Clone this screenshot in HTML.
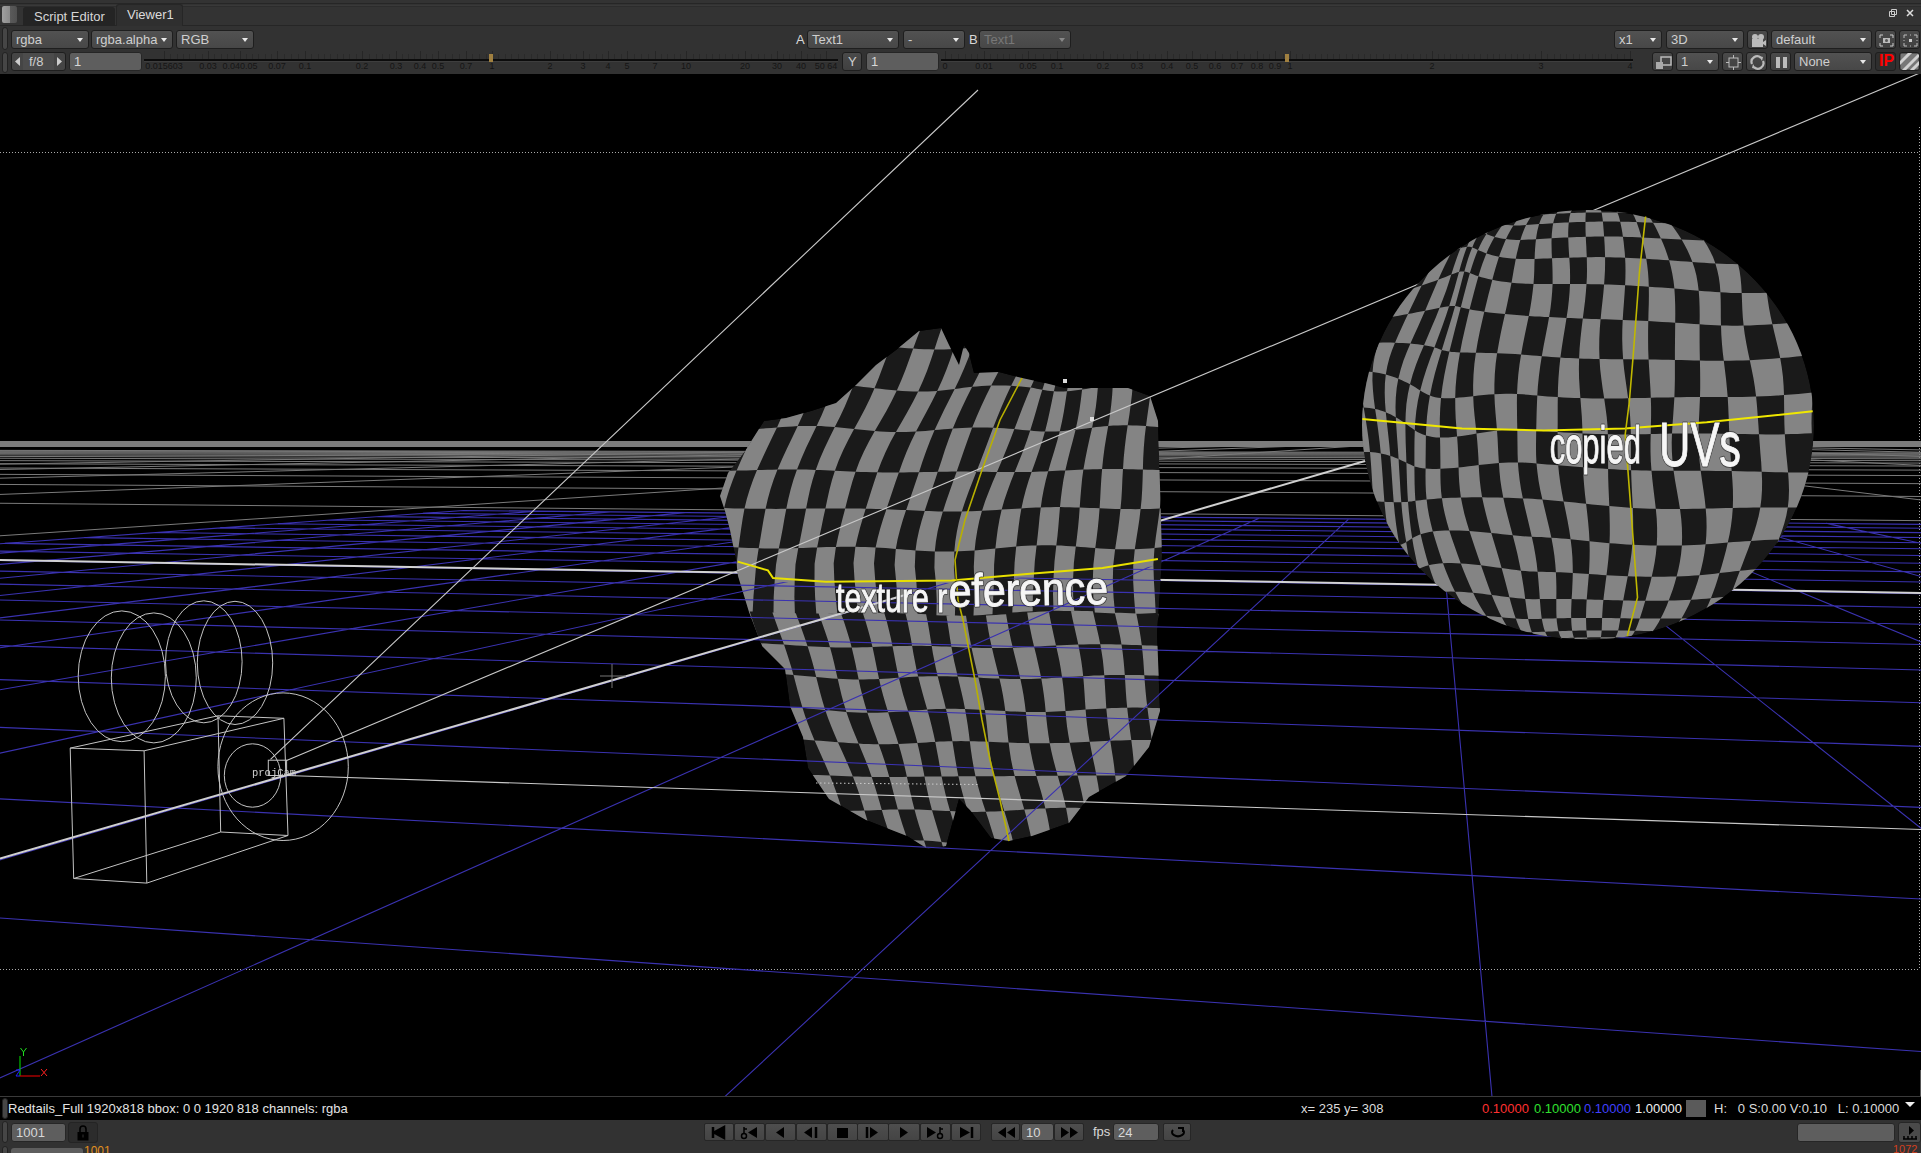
<!DOCTYPE html>
<html><head><meta charset="utf-8">
<style>
html,body{margin:0;padding:0;width:1921px;height:1153px;overflow:hidden;background:#323232;}
#root{position:relative;width:1921px;height:1153px;overflow:hidden;background:#323232;font-family:"Liberation Sans",sans-serif;}
.a{position:absolute;box-sizing:border-box;}
.t{position:absolute;left:4px;top:2px;font-size:13px;line-height:14px;white-space:nowrap;}
.ar{position:absolute;right:5px;top:7px;width:0;height:0;border-left:3px solid transparent;border-right:3px solid transparent;border-top:4px solid #e8e8e8;}
</style></head><body><div id="root">
<div class="a" style="left:0px;top:0px;width:1921px;height:26px;background:#333333;border-bottom:1px solid #262626;"></div>
<div class="a" style="left:0px;top:3px;width:1921px;height:1px;background:#262626;"></div>
<div class="a" style="left:0px;top:5px;width:1921px;height:1px;background:#393939;"></div>
<div class="a" style="left:0px;top:6px;width:1921px;height:1px;background:#2c2c2c;"></div>
<div class="a" style="left:2px;top:6px;width:15px;height:17px;background:linear-gradient(90deg,#a0a0a0 0,#8a8a8a 55%,#5a5a5a 56%,#505050 100%);border-radius:2px;"></div>
<div class="a" style="left:23px;top:7px;width:92px;height:19px;background:#242424;border-radius:3px 3px 0 0;"></div>
<div class="a" style="left:34px;top:10px;font-size:13px;color:#d6d6d6;white-space:nowrap;line-height:1;">Script Editor</div>
<div class="a" style="left:116px;top:4px;width:67px;height:22px;background:#2f2f2f;border:1px solid #262626;border-bottom:none;border-radius:3px 3px 0 0;"></div>
<div class="a" style="left:127px;top:8px;font-size:13px;color:#dcdcdc;white-space:nowrap;line-height:1;">Viewer1</div>
<svg class="a" style="left:1886px;top:6px" width="30" height="14"><path d="M5.5 3.5h5v5h-5zM3.5 5.5h5v5h-5z" fill="#2d2d2d" stroke="#ccc"/><path d="M21 4l6 6M27 4l-6 6" stroke="#ddd" stroke-width="1.5"/></svg>
<div class="a" style="left:2px;top:27px;width:6px;height:23px;background:#464646;border:1px solid #222;border-radius:3px;"></div>
<div class="a" style="left:11px;top:30px;width:78px;height:19px;background:linear-gradient(#525252,#474747);border:1px solid #1e1e1e;border-radius:3px;"><span class="t" style="color:#cfcfcf">rgba</span><i class="ar" style=""></i></div>
<div class="a" style="left:91px;top:30px;width:82px;height:19px;background:linear-gradient(#525252,#474747);border:1px solid #1e1e1e;border-radius:3px;"><span class="t" style="color:#cfcfcf">rgba.alpha</span><i class="ar" style=""></i></div>
<div class="a" style="left:176px;top:30px;width:78px;height:19px;background:linear-gradient(#525252,#474747);border:1px solid #1e1e1e;border-radius:3px;"><span class="t" style="color:#cfcfcf">RGB</span><i class="ar" style=""></i></div>
<div class="a" style="left:796px;top:33px;font-size:13px;color:#d8d8d8;white-space:nowrap;line-height:1;">A</div>
<div class="a" style="left:807px;top:30px;width:92px;height:19px;background:linear-gradient(#525252,#474747);border:1px solid #1e1e1e;border-radius:3px;"><span class="t" style="color:#cfcfcf">Text1</span><i class="ar" style=""></i></div>
<div class="a" style="left:903px;top:30px;width:62px;height:19px;background:linear-gradient(#525252,#474747);border:1px solid #1e1e1e;border-radius:3px;"><span class="t" style="color:#cfcfcf">-</span><i class="ar" style=""></i></div>
<div class="a" style="left:969px;top:33px;font-size:13px;color:#d8d8d8;white-space:nowrap;line-height:1;">B</div>
<div class="a" style="left:979px;top:30px;width:92px;height:19px;background:linear-gradient(#525252,#474747);border:1px solid #1e1e1e;border-radius:3px;"><span class="t" style="color:#777">Text1</span><i class="ar" style="border-top-color:#888"></i></div>
<div class="a" style="left:1614px;top:30px;width:48px;height:19px;background:linear-gradient(#525252,#474747);border:1px solid #1e1e1e;border-radius:3px;"><span class="t" style="color:#cfcfcf">x1</span><i class="ar" style=""></i></div>
<div class="a" style="left:1666px;top:30px;width:78px;height:19px;background:linear-gradient(#525252,#474747);border:1px solid #1e1e1e;border-radius:3px;"><span class="t" style="color:#cfcfcf">3D</span><i class="ar" style=""></i></div>
<div class="a" style="left:1747px;top:30px;width:21px;height:19px;background:linear-gradient(#4a4a4a,#404040);border:1px solid #1e1e1e;border-radius:3px;"><svg width="19" height="17" style="position:absolute;left:1px;top:1px"><circle cx="6" cy="5" r="3" fill="#bbb"/><circle cx="12" cy="5" r="3" fill="#bbb"/><rect x="3" y="7" width="11" height="8" fill="#bbb"/><path d="M14 10l3-2v6l-3-2z" fill="#bbb"/></svg></div>
<div class="a" style="left:1771px;top:30px;width:101px;height:19px;background:linear-gradient(#525252,#474747);border:1px solid #1e1e1e;border-radius:3px;"><span class="t" style="color:#cfcfcf">default</span><i class="ar" style=""></i></div>
<div class="a" style="left:1875px;top:30px;width:21px;height:19px;background:linear-gradient(#4a4a4a,#404040);border:1px solid #1e1e1e;border-radius:3px;"><svg width="19" height="17" style="position:absolute;left:1px;top:1px"><path d="M3 6V3h3M13 3h3v3M16 11v3h-3M6 14H3v-3" stroke="#ccc" fill="none"/><path d="M6 6h7v5H6z" fill="#bbb"/><circle cx="9.5" cy="8.5" r="1.5" fill="#555"/></svg></div>
<div class="a" style="left:1899px;top:30px;width:21px;height:19px;background:linear-gradient(#4a4a4a,#404040);border:1px solid #1e1e1e;border-radius:3px;"><svg width="19" height="17" style="position:absolute;left:1px;top:1px"><path d="M3 6V3h3M13 3h3v3M16 11v3h-3M6 14H3v-3M3 8v1M16 8v1M9 3h1M9 14h1" stroke="#bbb" fill="none"/><rect x="8" y="7" width="3" height="3" fill="#ccc"/></svg></div>
<div class="a" style="left:2px;top:52px;width:6px;height:21px;background:#464646;border:1px solid #222;border-radius:3px;"></div>
<div class="a" style="left:11px;top:52px;width:55px;height:19px;background:#454545;border:1px solid #1e1e1e;border-radius:3px;"></div>
<div class="a" style="left:23px;top:53px;width:31px;height:17px;background:#4c4c4c;"></div>
<svg class="a" style="left:11px;top:52px" width="55" height="19"><path d="M9 5v9l-5-4.5z" fill="#ccc"/><path d="M46 5v9l5-4.5z" fill="#ccc"/></svg>
<div class="a" style="left:29px;top:55px;font-size:13px;color:#cfcfcf;white-space:nowrap;line-height:1;">f/8</div>
<div class="a" style="left:69px;top:52px;width:73px;height:19px;background:#5e5e5e;border:1px solid #262626;border-radius:3px;"><span class="t" style="left:4px;color:#d8d8d8">1</span></div>
<div class="a" style="left:866px;top:52px;width:73px;height:19px;background:#5e5e5e;border:1px solid #262626;border-radius:3px;"><span class="t" style="left:4px;color:#d8d8d8">1</span></div>
<div class="a" style="left:842px;top:52px;width:20px;height:19px;background:linear-gradient(#4a4a4a,#404040);border:1px solid #1e1e1e;border-radius:3px;"><span class="t" style="left:5px;color:#cfcfcf">Y</span></div>
<svg class="a" style="left:144px;top:50px" width="694" height="24"><rect x="0" y="9" width="694" height="2" fill="#0c0c0c"/><path d="M26.5 4V9M33.5 4V9M39.5 4V9M45.5 4V9M51.5 4V9M58.5 4V9M70.5 4V9M77.5 4V9M83.5 4V9M90.5 4V9M102.5 4V9M108.5 4V9M114.5 4V9M121.5 4V9M127.5 4V9M140.5 4V9M147.5 4V9M154.5 4V9M167.5 4V9M174.5 4V9M180.5 4V9M186.5 4V9M193.5 4V9M199.5 4V9M205.5 4V9M212.5 4V9M225.5 4V9M232.5 4V9M238.5 4V9M245.5 4V9M258.5 4V9M264.5 4V9M270.5 4V9M282.5 4V9M288.5 4V9M301.5 4V9M308.5 4V9M315.5 4V9M328.5 4V9M335.5 4V9M342.5 4V9M354.5 4V9M361.5 4V9M367.5 4V9M374.5 4V9M380.5 4V9M387.5 4V9M393.5 4V9M400.5 4V9M413.5 4V9M419.5 4V9M426.5 4V9M432.5 4V9M445.5 4V9M452.5 4V9M458.5 4V9M470.5 4V9M477.5 4V9M490.5 4V9M497.5 4V9M504.5 4V9M517.5 4V9M523.5 4V9M530.5 4V9M536.5 4V9M549.5 4V9M555.5 4V9M562.5 4V9M568.5 4V9M575.5 4V9M581.5 4V9M588.5 4V9M594.5 4V9M607.5 4V9M614.5 4V9M620.5 4V9M627.5 4V9M639.5 4V9M645.5 4V9M651.5 4V9M663.5 4V9M670.5 4V9M676.5 4V9" stroke="#2a2a2a" stroke-width="1"/><path d="M20.5 1V9M64.5 1V9M96.5 1V9M133.5 1V9M161.5 1V9M218.5 1V9M252.5 1V9M276.5 1V9M294.5 1V9M322.5 1V9M348.5 1V9M406.5 1V9M439.5 1V9M464.5 1V9M483.5 1V9M511.5 1V9M542.5 1V9M601.5 1V9M633.5 1V9M657.5 1V9M682.5 1V9" stroke="#262626" stroke-width="1"/><rect x="0" y="11" width="694" height="1" fill="#3e3e3e"/><text x="20" y="19" font-size="9" fill="#151515" font-family="Liberation Sans" text-anchor="middle">0.015603</text><text x="64" y="19" font-size="9" fill="#151515" font-family="Liberation Sans" text-anchor="middle">0.03</text><text x="96" y="19" font-size="9" fill="#151515" font-family="Liberation Sans" text-anchor="middle">0.040.05</text><text x="133" y="19" font-size="9" fill="#151515" font-family="Liberation Sans" text-anchor="middle">0.07</text><text x="161" y="19" font-size="9" fill="#151515" font-family="Liberation Sans" text-anchor="middle">0.1</text><text x="218" y="19" font-size="9" fill="#151515" font-family="Liberation Sans" text-anchor="middle">0.2</text><text x="252" y="19" font-size="9" fill="#151515" font-family="Liberation Sans" text-anchor="middle">0.3</text><text x="276" y="19" font-size="9" fill="#151515" font-family="Liberation Sans" text-anchor="middle">0.4</text><text x="294" y="19" font-size="9" fill="#151515" font-family="Liberation Sans" text-anchor="middle">0.5</text><text x="322" y="19" font-size="9" fill="#151515" font-family="Liberation Sans" text-anchor="middle">0.7</text><text x="348" y="19" font-size="9" fill="#151515" font-family="Liberation Sans" text-anchor="middle">1</text><text x="406" y="19" font-size="9" fill="#151515" font-family="Liberation Sans" text-anchor="middle">2</text><text x="439" y="19" font-size="9" fill="#151515" font-family="Liberation Sans" text-anchor="middle">3</text><text x="464" y="19" font-size="9" fill="#151515" font-family="Liberation Sans" text-anchor="middle">4</text><text x="483" y="19" font-size="9" fill="#151515" font-family="Liberation Sans" text-anchor="middle">5</text><text x="511" y="19" font-size="9" fill="#151515" font-family="Liberation Sans" text-anchor="middle">7</text><text x="542" y="19" font-size="9" fill="#151515" font-family="Liberation Sans" text-anchor="middle">10</text><text x="601" y="19" font-size="9" fill="#151515" font-family="Liberation Sans" text-anchor="middle">20</text><text x="633" y="19" font-size="9" fill="#151515" font-family="Liberation Sans" text-anchor="middle">30</text><text x="657" y="19" font-size="9" fill="#151515" font-family="Liberation Sans" text-anchor="middle">40</text><text x="682" y="19" font-size="9" fill="#151515" font-family="Liberation Sans" text-anchor="middle">50 64</text><rect x="345" y="4" width="4" height="8" fill="#a08040"/></svg>
<svg class="a" style="left:941px;top:50px" width="692" height="24"><rect x="0" y="9" width="692" height="2" fill="#0c0c0c"/><path d="M10.5 4V9M17.5 4V9M24.5 4V9M30.5 4V9M36.5 4V9M49.5 4V9M56.5 4V9M62.5 4V9M68.5 4V9M74.5 4V9M81.5 4V9M94.5 4V9M102.5 4V9M109.5 4V9M123.5 4V9M129.5 4V9M136.5 4V9M142.5 4V9M149.5 4V9M155.5 4V9M169.5 4V9M176.5 4V9M182.5 4V9M189.5 4V9M202.5 4V9M208.5 4V9M214.5 4V9M220.5 4V9M232.5 4V9M238.5 4V9M245.5 4V9M259.5 4V9M266.5 4V9M281.5 4V9M289.5 4V9M303.5 4V9M309.5 4V9M322.5 4V9M328.5 4V9M342.5 4V9M355.5 4V9M361.5 4V9M368.5 4V9M374.5 4V9M380.5 4V9M386.5 4V9M392.5 4V9M398.5 4V9M405.5 4V9M411.5 4V9M417.5 4V9M423.5 4V9M429.5 4V9M435.5 4V9M442.5 4V9M448.5 4V9M454.5 4V9M460.5 4V9M466.5 4V9M472.5 4V9M479.5 4V9M485.5 4V9M497.5 4V9M503.5 4V9M509.5 4V9M515.5 4V9M521.5 4V9M527.5 4V9M533.5 4V9M539.5 4V9M546.5 4V9M552.5 4V9M558.5 4V9M564.5 4V9M570.5 4V9M576.5 4V9M582.5 4V9M588.5 4V9M594.5 4V9M606.5 4V9M613.5 4V9M619.5 4V9M625.5 4V9M632.5 4V9M638.5 4V9M644.5 4V9M651.5 4V9M657.5 4V9M664.5 4V9M670.5 4V9M676.5 4V9M683.5 4V9" stroke="#2a2a2a" stroke-width="1"/><path d="M4.5 1V9M43.5 1V9M87.5 1V9M116.5 1V9M162.5 1V9M196.5 1V9M226.5 1V9M251.5 1V9M274.5 1V9M296.5 1V9M316.5 1V9M334.5 1V9M349.5 1V9M491.5 1V9M600.5 1V9M689.5 1V9" stroke="#262626" stroke-width="1"/><rect x="0" y="11" width="692" height="1" fill="#3e3e3e"/><text x="4" y="19" font-size="9" fill="#151515" font-family="Liberation Sans" text-anchor="middle">0</text><text x="43" y="19" font-size="9" fill="#151515" font-family="Liberation Sans" text-anchor="middle">0.01</text><text x="87" y="19" font-size="9" fill="#151515" font-family="Liberation Sans" text-anchor="middle">0.05</text><text x="116" y="19" font-size="9" fill="#151515" font-family="Liberation Sans" text-anchor="middle">0.1</text><text x="162" y="19" font-size="9" fill="#151515" font-family="Liberation Sans" text-anchor="middle">0.2</text><text x="196" y="19" font-size="9" fill="#151515" font-family="Liberation Sans" text-anchor="middle">0.3</text><text x="226" y="19" font-size="9" fill="#151515" font-family="Liberation Sans" text-anchor="middle">0.4</text><text x="251" y="19" font-size="9" fill="#151515" font-family="Liberation Sans" text-anchor="middle">0.5</text><text x="274" y="19" font-size="9" fill="#151515" font-family="Liberation Sans" text-anchor="middle">0.6</text><text x="296" y="19" font-size="9" fill="#151515" font-family="Liberation Sans" text-anchor="middle">0.7</text><text x="316" y="19" font-size="9" fill="#151515" font-family="Liberation Sans" text-anchor="middle">0.8</text><text x="334" y="19" font-size="9" fill="#151515" font-family="Liberation Sans" text-anchor="middle">0.9</text><text x="349" y="19" font-size="9" fill="#151515" font-family="Liberation Sans" text-anchor="middle">1</text><text x="491" y="19" font-size="9" fill="#151515" font-family="Liberation Sans" text-anchor="middle">2</text><text x="600" y="19" font-size="9" fill="#151515" font-family="Liberation Sans" text-anchor="middle">3</text><text x="689" y="19" font-size="9" fill="#151515" font-family="Liberation Sans" text-anchor="middle">4</text><rect x="344" y="4" width="4" height="8" fill="#a08040"/></svg>
<div class="a" style="left:1652px;top:52px;width:21px;height:19px;background:linear-gradient(#4a4a4a,#404040);border:1px solid #1e1e1e;border-radius:3px;"><svg width="19" height="17" style="position:absolute;left:1px;top:1px"><rect x="7" y="3" width="10" height="8" fill="none" stroke="#bbb" stroke-width="1.5"/><rect x="2" y="8" width="7" height="7" fill="#aaa"/></svg></div>
<div class="a" style="left:1676px;top:52px;width:43px;height:19px;background:linear-gradient(#525252,#474747);border:1px solid #1e1e1e;border-radius:3px;"><span class="t" style="color:#cfcfcf">1</span><i class="ar" style=""></i></div>
<div class="a" style="left:1722px;top:52px;width:21px;height:19px;background:linear-gradient(#4a4a4a,#404040);border:1px solid #1e1e1e;border-radius:3px;"><svg width="19" height="17" style="position:absolute;left:1px;top:1px"><rect x="5" y="4" width="9" height="9" fill="none" stroke="#bbb"/><path d="M9.5 1v3M9.5 13v3M2 8.5h3M14 8.5h3" stroke="#bbb"/></svg></div>
<div class="a" style="left:1746px;top:52px;width:21px;height:19px;background:linear-gradient(#4a4a4a,#404040);border:1px solid #1e1e1e;border-radius:3px;"><svg width="19" height="17" style="position:absolute;left:1px;top:1px"><path d="M4 10a5.5 5.5 0 0 1 9-6M15 7a5.5 5.5 0 0 1-9 6" stroke="#bbb" stroke-width="2.2" fill="none"/><path d="M11 2l4 1-1 4zM8 15l-4-1 1-4z" fill="#bbb"/></svg></div>
<div class="a" style="left:1770px;top:52px;width:21px;height:19px;background:linear-gradient(#4a4a4a,#404040);border:1px solid #1e1e1e;border-radius:3px;"><svg width="19" height="17" style="position:absolute;left:1px;top:1px"><rect x="4" y="3" width="4" height="11" fill="#bbb"/><rect x="11" y="3" width="4" height="11" fill="#bbb"/></svg></div>
<div class="a" style="left:1794px;top:52px;width:78px;height:19px;background:linear-gradient(#525252,#474747);border:1px solid #1e1e1e;border-radius:3px;"><span class="t" style="color:#cfcfcf">None</span><i class="ar" style=""></i></div>
<div class="a" style="left:1875px;top:52px;width:21px;height:19px;background:#2e2e2e;border:1px solid #1e1e1e;border-radius:3px;"><span class="t" style="left:3px;top:1px;color:#f00;font-weight:bold;font-size:16px">IP</span></div>
<div class="a" style="left:1899px;top:52px;width:21px;height:19px;background:#555;border:1px solid #1e1e1e;border-radius:3px;"><svg width="19" height="17" style="position:absolute;left:0px;top:0px"><rect x="1" y="1" width="17" height="15" fill="#777"/><path d="M-2 12l13-13M3 18l16-16M10 19l10-10" stroke="#d0d0d0" stroke-width="3"/></svg></div>
<svg width="1921" height="1153" viewBox="0 0 1921 1153" style="position:absolute;left:0;top:0">
<defs><clipPath id="lowrect"><path d="M700 575L770 575L775 582L950 583L1170 565V900H700Z"/></clipPath><clipPath id="vp"><rect x="0" y="74" width="1921" height="1022"/></clipPath></defs>
<g clip-path="url(#vp)">
<rect x="0" y="74" width="1921" height="1022" fill="#000"/>
<path d="M0 152.5H1919M0 969.5H1919M1919.5 127V970" stroke="#aaa" stroke-width="1" stroke-dasharray="1 2" fill="none"/>
<path d="M1971 521.1L-50 502.8M1971 496.8L-50 484.1M1971 483.9L-50 474.1M1971 475.8L-50 467.8M1971 470.3L-50 463.6M1971 466.2L-50 460.5M1971 463.2L-50 458.1M1971 460.8L-50 456.3M1971 458.9L-50 454.8M1971 457.3L-50 453.6M1971 456L-50 452.6M1971 454.9L-50 451.7M1971 453.9L-50 450.9M1971 453L-50 450.3M-50 539.1L1428.6 441.3M-50 496.3L1425.3 441.3M-50 479.5L1421.9 441.3M-50 470.5L1418.5 441.3M-50 464.9L1415.2 441.3M1971 506L1435.4 441.3M1971 467.9L1438.8 441.3M1971 458L1442.1 441.3M1971 453.4L1445.5 441.3M1971 450.8L1448.9 441.3" stroke="#7a7a7a" stroke-width="1" fill="none"/>
<rect x="0" y="441" width="1921" height="6" fill="#7c7c7c"/>
<path d="M1971 1055L-50 914.6M1971 901.6L-50 796.3M1971 809.5L-50 725.3M1971 748.1L-50 677.9M1971 704.2L-50 644.1M1971 671.3L-50 618.7M1971 645.7L-50 598.9M1971 625.3L-50 583.1M1971 608.5L-50 570.2M1971 594.6L-50 559.5M1971 582.8L-50 550.3M1971 572.6L4.9 543.4M1971 563.9L84.6 537.6M1971 556.2L155.9 532.5M1971 549.4L220 527.9M1971 543.4L278.1 523.8M1971 538L330.8 520M1971 533.1L378.9 516.6M1971 528.8L423 513.4M1971 524.8L463.5 510.5M1971 531.6L1928.3 524.4M1971 553.8L1826.1 523.4M1971 590.4L1726.3 522.4M1971 662.4L1628.7 521.5M1971 867.9L1533.3 520.6M1493.2 1110L1440.1 519.7M710.4 1110L1348.9 518.9M-50 1100L1259.7 518M-50 874.5L1172.3 517.2M-50 764L1086.9 516.4M-50 698.4L1003.2 515.6M-50 655L921.3 514.8M-50 624.1L841.1 514.1M-50 600.9L762.5 513.3M-50 583L685.5 512.6M-50 568.7L610 511.9M-50 557L536 511.2M-50 547.3L463.5 510.5" stroke="#3a32b0" stroke-width="1.1" fill="none"/>
<path d="M0 560L1921 593" stroke="#d2d2d2" stroke-width="2"/>
<path d="M900 596.5L1365 461" stroke="#d0d0d0" stroke-width="2" fill="none"/>
<clipPath id="meshclip"><path d="M720 496L728 473L745 451L764 421L786 418L811 411L836 403L856 385L876 365L896 350L919 331L941 328L949 345L959 365L964 345L969 353L974 373L999 372L1022 378L1045 383L1065 388L1090 388L1128 388L1150 396L1158 421L1160 486L1162 556L1160 591L1157 633L1160 711L1149 747L1126 776L1089 797L1069 823L1032 836L1009 841L991 838L970 810L959 799L946 846L928 849L907 836L866 820L829 799L808 768L803 737L790 706L785 669L762 646L749 612L738 576L736 560L730 530L725 511Z"/></clipPath>
<g clip-path="url(#meshclip)">
<path d="M720 496L728 473L745 451L764 421L786 418L811 411L836 403L856 385L876 365L896 350L919 331L941 328L949 345L959 365L964 345L969 353L974 373L999 372L1022 378L1045 383L1065 388L1090 388L1128 388L1150 396L1158 421L1160 486L1162 556L1160 591L1157 633L1160 711L1149 747L1126 776L1089 797L1069 823L1032 836L1009 841L991 838L970 810L959 799L946 846L928 849L907 836L866 820L829 799L808 768L803 737L790 706L785 669L762 646L749 612L738 576L736 560L730 530L725 511Z" fill="#1a1a1a"/>
<path d="M742.7 270.6L747.3 270.4L752.1 270.1L757.1 269.9L762.3 269.8L762.3 269.8L758.2 279L754.5 288.3L751 297.5L747.8 306.8L747.8 306.8L742.8 306.7L737.9 306.6L733.1 306.5L728.4 306.5L728.4 306.5L731.7 297.5L735.1 288.5L738.8 279.6L742.7 270.6ZM784.3 269.6L790 269.7L795.7 269.8L801.3 269.9L806.9 270.1L806.9 270.1L803 279.4L799.3 288.6L795.7 297.9L792.1 307.2L792.1 307.2L786.4 307.2L780.7 307.2L774.9 307.2L769.3 307.1L769.3 307.1L772.7 297.7L776.3 288.3L780.2 279L784.3 269.6ZM827.5 270.9L832.2 271L836.7 271.2L841.2 271.3L845.5 271.4L845.5 271.4L842.4 280.1L839.3 288.8L836.1 297.6L832.7 306.3L832.7 306.3L828.2 306.5L823.6 306.6L818.7 306.8L813.8 306.9L813.8 306.9L817.3 297.9L820.6 288.9L824 279.9L827.5 270.9ZM863 271.3L867.6 271.1L872.4 270.9L877.3 270.7L882.4 270.5L882.4 270.5L878.9 279.1L875.3 287.7L871.5 296.3L867.5 304.9L867.5 304.9L862.9 305L858.4 305.1L854 305.3L849.7 305.5L849.7 305.5L853.3 296.9L856.6 288.4L859.8 279.9L863 271.3ZM904.3 269.3L910 269L915.6 268.7L921.2 268.5L926.7 268.3L926.7 268.3L922.6 277.5L918.4 286.7L913.9 295.8L909.4 305L909.4 305L903.9 304.9L898.5 304.8L893 304.7L887.7 304.7L887.7 304.7L892.1 295.9L896.3 287L900.4 278.2L904.3 269.3ZM947.4 267.8L952.2 267.8L957 267.8L961.6 267.9L966.2 268L966.2 268L962.1 277.5L958 287.1L953.8 296.6L949.8 306.2L949.8 306.2L945.2 306.1L940.4 305.9L935.5 305.8L930.6 305.6L930.6 305.6L934.9 296.2L939.2 286.7L943.4 277.2L947.4 267.8ZM984.8 268.8L989.7 269.1L994.7 269.3L999.8 269.6L1005.1 269.8L1005.1 269.8L1000.3 278.9L995.7 288L991.3 297.1L987.4 306.2L987.4 306.2L982.4 306.3L977.5 306.4L972.8 306.4L968.1 306.4L968.1 306.4L972 297L976.1 287.6L980.4 278.2L984.8 268.8ZM1026.9 270.7L1032.3 270.8L1037.7 271L1042.9 271.1L1048 271.1L1048 271.1L1043.1 279.8L1038.5 288.4L1034.2 297L1030.1 305.6L1030.1 305.6L1024.8 305.6L1019.4 305.7L1013.9 305.7L1008.5 305.8L1008.5 305.8L1012.6 297.1L1017 288.3L1021.8 279.5L1026.9 270.7ZM1066.8 271.1L1071 271L1075.2 271L1079.3 270.9L1083.4 270.8L1083.4 270.8L1079.3 279.6L1075.5 288.5L1071.9 297.4L1068.3 306.2L1068.3 306.2L1064 306L1059.6 305.9L1055 305.8L1050.3 305.7L1050.3 305.7L1054.1 297.1L1058.1 288.4L1062.3 279.8L1066.8 271.1ZM1086.6 270.3L1087.8 270.3L1089.1 270.2L1090.6 270.1L1092.3 270L1092.3 270L1089.3 279.3L1086.4 288.6L1083.5 297.9L1080.6 307.3L1080.6 307.3L1078.6 307.2L1076.8 307.1L1075.2 307L1073.7 306.9L1073.7 306.9L1076.8 297.7L1079.9 288.6L1083.2 279.5L1086.6 270.3ZM1100.3 269.9L1102.4 269.9L1104.6 269.9L1106.7 269.9L1108.7 269.9L1108.7 269.9L1106.9 279.1L1104.9 288.2L1102.7 297.4L1100.2 306.6L1100.2 306.6L1097.6 306.8L1095 306.9L1092.4 307.1L1089.8 307.2L1089.8 307.2L1092.6 297.8L1095.3 288.5L1097.8 279.2L1100.3 269.9ZM1115.9 270.1L1117.4 270.2L1119 270.2L1120.5 270.3L1122 270.4L1122 270.4L1121.4 279L1120.4 287.7L1119.3 296.3L1118 304.9L1118 304.9L1116 305.1L1114.1 305.3L1112 305.5L1109.9 305.7L1109.9 305.7L1111.8 296.8L1113.4 287.9L1114.8 279L1115.9 270.1ZM1142.5 270.5L1147.8 270.5L1153.3 270.5L1158.9 270.4L1164.5 270.4L1164.5 270.4L1162.9 279.1L1161.2 287.7L1159.4 296.4L1157.8 305L1157.8 305L1152.5 304.9L1147.4 304.8L1142.3 304.7L1137.4 304.7L1137.4 304.7L1138.8 296.2L1140.2 287.6L1141.5 279.1L1142.5 270.5ZM1187.1 270L1192.6 269.9L1197.9 269.8L1203.1 269.6L1208.1 269.5L1208.1 269.5L1206.2 278.6L1204.3 287.8L1202.5 297L1200.9 306.1L1200.9 306.1L1195.6 306L1190.3 305.9L1184.9 305.7L1179.4 305.6L1179.4 305.6L1181.2 296.7L1183.2 287.8L1185.2 279L1187.1 270ZM747.8 306.8L752.9 306.9L758.2 306.9L763.7 307L769.3 307.1L769.3 307.1L765.3 317.8L761.1 328.4L756.6 339L751.7 349.5L751.7 349.5L746.7 349.4L741.8 349.2L737 349L732.3 348.7L732.3 348.7L736.6 338.3L740.5 327.8L744.2 317.3L747.8 306.8ZM792.1 307.2L797.7 307.2L803.2 307.1L808.6 307L813.8 306.9L813.8 306.9L809.4 317.2L804.7 327.4L799.5 337.7L794.1 347.9L794.1 347.9L788.9 348.3L783.6 348.7L778.2 349L772.8 349.3L772.8 349.3L778.2 338.8L783.2 328.3L787.8 317.8L792.1 307.2ZM832.7 306.3L837 306.1L841.3 305.9L845.5 305.7L849.7 305.5L849.7 305.5L845.4 315.2L840.8 324.9L836.1 334.7L831.4 344.5L831.4 344.5L827.1 344.8L822.7 345.2L818.3 345.6L813.7 346L813.7 346L818.9 336.1L823.8 326.1L828.4 316.2L832.7 306.3ZM867.5 304.9L872.3 304.8L877.3 304.7L882.4 304.7L887.7 304.7L887.7 304.7L882.6 314.8L877.6 324.8L872.9 334.9L868.5 345L868.5 345L863.4 344.7L858.4 344.4L853.6 344.2L848.9 344.1L848.9 344.1L853.4 334.2L858.1 324.4L862.8 314.6L867.5 304.9ZM909.4 305L914.8 305.2L920.2 305.3L925.4 305.5L930.6 305.6L930.6 305.6L925.8 316.4L921.3 327.2L917.1 337.9L913.2 348.5L913.2 348.5L907.6 348.2L901.9 347.7L896.2 347.3L890.5 346.8L890.5 346.8L894.8 336.4L899.4 325.9L904.3 315.5L909.4 305ZM949.8 306.2L954.4 306.3L959 306.4L963.5 306.4L968.1 306.4L968.1 306.4L964.1 317.1L960.4 327.8L957 338.5L953.7 349.1L953.7 349.1L949 349.3L944.2 349.4L939.4 349.5L934.4 349.5L934.4 349.5L937.9 338.7L941.6 327.9L945.5 317.1L949.8 306.2ZM987.4 306.2L992.5 306.1L997.7 306L1003 305.9L1008.5 305.8L1008.5 305.8L1004.1 315.8L1000 325.9L996 335.9L991.8 346L991.8 346L986.8 346.4L981.9 346.8L977 347.2L972.3 347.7L972.3 347.7L975.9 337.3L979.5 326.9L983.2 316.6L987.4 306.2ZM1030.1 305.6L1035.4 305.6L1040.5 305.6L1045.5 305.6L1050.3 305.7L1050.3 305.7L1046.1 315.5L1041.7 325.4L1037.1 335.3L1032.2 345.3L1032.2 345.3L1027.4 345.1L1022.4 345L1017.4 344.9L1012.3 345L1012.3 345L1017 335.1L1021.4 325.2L1025.8 315.4L1030.1 305.6ZM1068.3 306.2L1069.6 306.4L1071 306.5L1072.3 306.7L1073.7 306.9L1073.7 306.9L1070 317.3L1066.1 327.7L1062 338.1L1057.8 348.4L1057.8 348.4L1056 348L1054.2 347.6L1052.3 347.1L1050.4 346.6L1050.4 346.6L1055.3 336.5L1059.9 326.4L1064.2 316.3L1068.3 306.2ZM1080.6 307.3L1082.7 307.3L1084.9 307.3L1087.3 307.3L1089.8 307.2L1089.8 307.2L1086.4 317.9L1082.9 328.5L1079.4 339.1L1076.1 349.7L1076.1 349.7L1073.3 349.8L1070.6 349.9L1068.1 349.8L1065.8 349.7L1065.8 349.7L1069.5 339.1L1073.3 328.5L1077 317.9L1080.6 307.3ZM1100.2 306.6L1102.8 306.3L1105.2 306.1L1107.6 305.9L1109.9 305.7L1109.9 305.7L1107.6 315.8L1105.3 325.9L1103.3 336.1L1101.6 346.2L1101.6 346.2L1098.4 346.8L1095.2 347.3L1091.9 347.8L1088.6 348.3L1088.6 348.3L1091.2 337.9L1094.2 327.5L1097.2 317L1100.2 306.6ZM1118 304.9L1122.8 304.8L1127.6 304.7L1132.5 304.7L1137.4 304.7L1137.4 304.7L1135.9 314.4L1134.7 324.1L1133.9 333.9L1133.5 343.7L1133.5 343.7L1128.6 343.7L1123.6 343.9L1118.5 344.1L1113.4 344.4L1113.4 344.4L1114.1 334.5L1115.1 324.6L1116.4 314.8L1118 304.9ZM1157.8 305L1163.1 305.1L1168.5 305.3L1173.9 305.4L1179.4 305.6L1179.4 305.6L1177.7 315.7L1176.3 325.8L1175.3 335.9L1174.5 346L1174.5 346L1169.2 345.5L1163.9 345.1L1158.7 344.7L1153.6 344.3L1153.6 344.3L1154.1 334.4L1154.9 324.6L1156.1 314.8L1157.8 305ZM1200.9 306.1L1206 306.2L1211 306.2L1215.9 306.3L1220.6 306.3L1220.6 306.3L1219.5 316.9L1218.5 327.6L1217.5 338.2L1216.3 348.8L1216.3 348.8L1211.3 348.6L1206.3 348.4L1201.1 348.1L1195.8 347.7L1195.8 347.7L1197 337.4L1198.1 327L1199.3 316.5L1200.9 306.1ZM713.8 347.3L718.4 347.7L723 348L727.6 348.4L732.3 348.7L732.3 348.7L727.5 359.1L722.4 369.4L717.2 379.6L711.9 389.8L711.9 389.8L707.4 389.4L702.9 388.9L698.3 388.4L693.6 388L693.6 388L699.1 377.8L704.4 367.6L709.3 357.5L713.8 347.3ZM751.7 349.5L756.8 349.6L762.1 349.5L767.4 349.4L772.8 349.3L772.8 349.3L767.2 359.6L761.5 370L756 380.2L750.8 390.4L750.8 390.4L745.5 390.6L740.3 390.8L735.3 390.9L730.4 390.8L730.4 390.8L735.6 380.6L741 370.4L746.5 360L751.7 349.5ZM794.1 347.9L799.2 347.4L804.2 347L809 346.5L813.7 346L813.7 346L808.6 356L803.7 366.1L799 376.2L794.6 386.4L794.6 386.4L789.3 386.9L783.8 387.5L778.3 388.1L772.8 388.6L772.8 388.6L777.7 378.5L783 368.3L788.5 358.1L794.1 347.9ZM831.4 344.5L835.7 344.3L840 344.2L844.4 344.1L848.9 344.1L848.9 344.1L844.8 354.1L840.9 364.1L837.3 374.2L833.7 384.4L833.7 384.4L829 384.3L824.3 384.3L819.5 384.4L814.7 384.6L814.7 384.6L818.6 374.5L822.6 364.4L826.9 354.4L831.4 344.5ZM868.5 345L873.8 345.4L879.3 345.8L884.8 346.3L890.5 346.8L890.5 346.8L886.5 357.2L882.6 367.5L878.7 377.9L874.5 388.2L874.5 388.2L869.1 387.5L863.7 386.9L858.4 386.3L853.3 385.8L853.3 385.8L857 375.5L860.7 365.3L864.5 355.1L868.5 345ZM913.2 348.5L918.7 348.9L924.1 349.2L929.3 349.3L934.4 349.5L934.4 349.5L930.9 360.1L927.1 370.7L922.9 381.1L918.2 391.5L918.2 391.5L913 391.4L907.7 391.2L902.3 390.9L896.8 390.4L896.8 390.4L901.4 380.1L905.5 369.7L909.4 359.1L913.2 348.5ZM953.7 349.1L958.3 348.8L962.9 348.5L967.6 348.1L972.3 347.7L972.3 347.7L968.4 358L964.2 368.3L959.6 378.7L954.7 389L954.7 389L950.4 389.5L946.1 390L941.7 390.5L937.2 390.9L937.2 390.9L942 380.5L946.3 370.1L950.2 359.6L953.7 349.1ZM991.8 346L996.9 345.6L1002 345.4L1007.1 345.1L1012.3 345L1012.3 345L1007.3 355L1002 365.1L996.6 375.3L991.2 385.5L991.2 385.5L986.3 385.7L981.5 386L976.8 386.4L972.2 386.8L972.2 386.8L977.5 376.5L982.5 366.3L987.3 356.1L991.8 346ZM1032.2 345.3L1037 345.5L1041.6 345.8L1046.1 346.2L1050.4 346.6L1050.4 346.6L1045.4 356.8L1040.3 367L1035.4 377.3L1030.7 387.6L1030.7 387.6L1025.9 387L1021 386.6L1016.1 386.2L1011.1 385.8L1011.1 385.8L1016.3 375.6L1021.7 365.4L1027 355.3L1032.2 345.3ZM1057.8 348.4L1059.6 348.8L1061.5 349.2L1063.6 349.5L1065.8 349.7L1065.8 349.7L1062.2 360.2L1059 370.6L1056.3 381L1053.9 391.2L1053.9 391.2L1050.9 391L1048 390.7L1045.1 390.2L1042.3 389.8L1042.3 389.8L1045.7 379.5L1049.5 369.1L1053.5 358.8L1057.8 348.4ZM1076.1 349.7L1079.1 349.4L1082.2 349.1L1085.4 348.8L1088.6 348.3L1088.6 348.3L1086.4 358.7L1084.6 369L1083.3 379.3L1082.1 389.5L1082.1 389.5L1078.2 390L1074.3 390.5L1070.6 390.9L1067 391.2L1067 391.2L1068.7 380.9L1070.7 370.6L1073.2 360.2L1076.1 349.7ZM1101.6 346.2L1104.7 345.7L1107.7 345.2L1110.6 344.8L1113.4 344.4L1113.4 344.4L1113.1 354.4L1113 364.4L1113 374.5L1112.8 384.6L1112.8 384.6L1109.2 385.1L1105.6 385.6L1101.8 386.2L1097.9 386.9L1097.9 386.9L1098.7 376.7L1099.4 366.5L1100.3 356.4L1101.6 346.2ZM1133.5 343.7L1138.5 343.7L1143.5 343.8L1148.5 344L1153.6 344.3L1153.6 344.3L1153.2 354.3L1152.9 364.3L1152.3 374.4L1151.5 384.5L1151.5 384.5L1146.9 384.2L1142.2 383.9L1137.5 383.8L1132.8 383.7L1132.8 383.7L1133.2 373.6L1133.4 363.5L1133.4 353.5L1133.5 343.7ZM1174.5 346L1179.8 346.4L1185.2 346.9L1190.5 347.3L1195.8 347.7L1195.8 347.7L1194.6 358.1L1193.1 368.4L1191.4 378.6L1189.4 388.9L1189.4 388.9L1184.6 388.3L1179.7 387.8L1174.9 387.2L1170.1 386.6L1170.1 386.6L1171.6 376.4L1172.7 366.2L1173.7 356.1L1174.5 346ZM711.9 389.8L716.4 390.2L721 390.5L725.6 390.7L730.4 390.8L730.4 390.8L725.5 400.9L721.1 410.9L717 420.8L713.1 430.7L713.1 430.7L708.3 430.6L703.4 430.4L698.6 430.1L693.7 429.8L693.7 429.8L697.7 419.9L702.1 409.9L706.8 399.9L711.9 389.8ZM750.8 390.4L756.2 390.1L761.7 389.7L767.2 389.2L772.8 388.6L772.8 388.6L768.1 398.8L763.7 408.9L759.4 419.1L754.9 429.2L754.9 429.2L749.4 429.6L744 430L738.6 430.2L733.3 430.5L733.3 430.5L737.4 420.5L741.5 410.6L746 400.5L750.8 390.4ZM794.6 386.4L799.8 385.8L804.9 385.4L809.9 385L814.7 384.6L814.7 384.6L810.9 394.9L806.8 405.2L802.5 415.6L797.7 426.1L797.7 426.1L792.7 426.4L787.6 426.7L782.3 427.1L777 427.5L777 427.5L781.6 417.1L786 406.8L790.3 396.6L794.6 386.4ZM833.7 384.4L838.5 384.6L843.3 384.9L848.2 385.3L853.3 385.8L853.3 385.8L849.2 396.1L844.8 406.4L840 416.7L834.8 427.1L834.8 427.1L830.2 426.7L825.7 426.4L821.1 426.1L816.6 426L816.6 426L821.5 415.5L825.9 405L830 394.7L833.7 384.4ZM874.5 388.2L880.1 388.8L885.7 389.4L891.3 390L896.8 390.4L896.8 390.4L891.8 400.7L886.4 410.9L880.6 421L874.8 431L874.8 431L869.5 430.6L864.3 430.1L859.1 429.6L854.1 429.1L854.1 429.1L859.6 418.9L865 408.7L870 398.5L874.5 388.2ZM918.2 391.5L923.2 391.5L928 391.4L932.7 391.2L937.2 390.9L937.2 390.9L932.1 401.2L926.7 411.4L921.3 421.5L916 431.6L916 431.6L911.1 431.8L906.2 431.9L901.1 432L895.9 432L895.9 432L901.7 422L907.4 411.9L913 401.8L918.2 391.5ZM954.7 389L959 388.4L963.3 387.8L967.7 387.3L972.2 386.8L972.2 386.8L967 397.1L962 407.5L957.2 418L952.8 428.5L952.8 428.5L948.2 428.9L943.6 429.3L939.1 429.7L934.6 430.1L934.6 430.1L939.3 419.9L944.3 409.6L949.5 399.3L954.7 389ZM991.2 385.5L996.1 385.5L1001.1 385.5L1006.1 385.6L1011.1 385.8L1011.1 385.8L1006.2 396.2L1001.6 406.7L997.3 417.2L993.1 427.8L993.1 427.8L987.8 427.6L982.5 427.5L977.3 427.5L972.2 427.5L972.2 427.5L976.5 416.9L981.1 406.4L986 395.9L991.2 385.5ZM1030.7 387.6L1033.7 388.1L1036.6 388.7L1039.5 389.2L1042.3 389.8L1042.3 389.8L1039.2 400L1036.3 410.2L1033.3 420.4L1030.2 430.6L1030.2 430.6L1026.3 430.2L1022.4 429.9L1018.5 429.5L1014.4 429.1L1014.4 429.1L1018.4 418.6L1022.3 408.2L1026.4 397.9L1030.7 387.6ZM1053.9 391.2L1057 391.4L1060.2 391.4L1063.5 391.4L1067 391.2L1067 391.2L1065.5 401.3L1063.9 411.4L1062 421.4L1059.8 431.3L1059.8 431.3L1056 431.5L1052.3 431.6L1048.6 431.6L1045 431.6L1045 431.6L1047.5 421.6L1049.7 411.6L1051.8 401.4L1053.9 391.2ZM1082.1 389.5L1086 388.9L1090 388.2L1094 387.6L1097.9 386.9L1097.9 386.9L1097 397.1L1095.8 407.3L1094.1 417.5L1092.1 427.7L1092.1 427.7L1087.9 428.2L1083.8 428.7L1079.7 429.2L1075.6 429.7L1075.6 429.7L1077.7 419.8L1079.5 409.7L1080.9 399.6L1082.1 389.5ZM1112.8 384.6L1118 384.2L1123 384L1128 383.8L1132.8 383.7L1132.8 383.7L1132 394L1130.8 404.3L1129.4 414.8L1127.7 425.3L1127.7 425.3L1123 425.3L1118.2 425.4L1113.2 425.6L1108.2 425.9L1108.2 425.9L1109.9 415.5L1111.2 405.1L1112.2 394.8L1112.8 384.6ZM1151.5 384.5L1156.1 385L1160.7 385.5L1165.4 386L1170.1 386.6L1170.1 386.6L1168.5 396.8L1166.8 407.1L1165.3 417.3L1164 427.7L1164 427.7L1159.4 427.2L1154.9 426.8L1150.4 426.4L1146 426L1146 426L1147.4 415.5L1148.9 405.1L1150.3 394.8L1151.5 384.5ZM1189.4 388.9L1194.3 389.4L1199.2 389.8L1204.1 390.1L1209 390.3L1209 390.3L1207 400.5L1205.4 410.6L1204.1 420.6L1203.2 430.5L1203.2 430.5L1198.1 430.4L1193 430.1L1188 429.8L1183 429.4L1183 429.4L1184.1 419.3L1185.7 409.2L1187.5 399.1L1189.4 388.9ZM673.5 428.5L678.7 428.8L683.8 429.2L688.8 429.5L693.7 429.8L693.7 429.8L690 440L686.5 450.1L683.1 460.2L679.7 470.3L679.7 470.3L674.7 470.1L669.6 470.1L664.3 470L658.9 469.9L658.9 469.9L662.2 459.6L665.7 449.2L669.4 438.8L673.5 428.5ZM713.1 430.7L718 430.7L723 430.7L728.1 430.6L733.3 430.5L733.3 430.5L729.2 440.6L725.2 450.7L721.2 460.8L717.2 470.9L717.2 470.9L712.5 470.9L707.9 470.8L703.3 470.8L698.7 470.7L698.7 470.7L702.3 460.7L705.8 450.7L709.4 440.7L713.1 430.7ZM754.9 429.2L760.5 428.8L766 428.3L771.5 427.9L777 427.5L777 427.5L771.9 438.1L766.8 448.7L761.8 459.4L757 470.1L757 470.1L751.9 470.2L746.7 470.4L741.6 470.5L736.6 470.6L736.6 470.6L741.1 460.3L745.7 449.9L750.3 439.6L754.9 429.2ZM797.7 426.1L802.6 426L807.3 425.9L812 425.9L816.6 426L816.6 426L811.4 436.8L806.2 447.6L801.4 458.5L797 469.5L797 469.5L792.2 469.4L787.4 469.5L782.5 469.5L777.5 469.6L777.5 469.6L782.2 458.7L787.3 447.8L792.5 436.9L797.7 426.1ZM834.8 427.1L839.5 427.6L844.3 428.1L849.1 428.6L854.1 429.1L854.1 429.1L848.5 439.5L843.3 450L838.8 460.3L834.9 470.7L834.9 470.7L830 470.5L825.2 470.3L820.4 470.1L815.7 469.9L815.7 469.9L819.7 459.2L824.4 448.5L829.5 437.8L834.8 427.1ZM874.8 431L880.1 431.4L885.4 431.7L890.7 431.9L895.9 432L895.9 432L890.4 442.1L885.5 452.2L881.2 462.3L877.4 472.3L877.4 472.3L871.9 472.2L866.4 472L861 471.9L855.6 471.7L855.6 471.7L859.4 461.5L863.9 451.4L869.1 441.2L874.8 431ZM916 431.6L920.7 431.3L925.4 431L930 430.6L934.6 430.1L934.6 430.1L930.1 440.7L926.1 451.2L922.4 461.7L919 472.2L919 472.2L914.1 472.3L909.1 472.3L904 472.4L898.9 472.4L898.9 472.4L902.5 462.3L906.5 452.1L911 441.8L916 431.6ZM952.8 428.5L957.5 428.2L962.3 427.9L967.2 427.7L972.2 427.5L972.2 427.5L968.2 438.5L964.3 449.5L960.5 460.6L956.7 471.6L956.7 471.6L951.9 471.6L947.2 471.7L942.5 471.7L937.8 471.8L937.8 471.8L941.4 461L944.9 450.1L948.7 439.3L952.8 428.5ZM993.1 427.8L998.5 428L1003.8 428.3L1009.1 428.7L1014.4 429.1L1014.4 429.1L1010.3 439.8L1006 450.5L1001.6 461.2L997 472L997 472L991.8 471.9L986.7 471.8L981.5 471.8L976.4 471.7L976.4 471.7L980.7 460.7L984.9 449.7L989 438.7L993.1 427.8ZM1030.2 430.6L1033.9 430.9L1037.6 431.2L1041.3 431.4L1045 431.6L1045 431.6L1042 441.7L1038.7 451.8L1035.2 461.9L1031.6 471.9L1031.6 471.9L1027.4 472L1023.2 472.1L1019 472.1L1014.7 472.1L1014.7 472.1L1018.8 461.8L1022.9 451.4L1026.7 441L1030.2 430.6ZM1059.8 431.3L1063.6 431L1067.5 430.6L1071.5 430.2L1075.6 429.7L1075.6 429.7L1073 439.9L1070.3 450.1L1067.7 460.2L1065.3 470.4L1065.3 470.4L1061 470.6L1056.7 470.8L1052.4 471.1L1048.2 471.3L1048.2 471.3L1051.1 461.3L1054.2 451.3L1057.1 441.3L1059.8 431.3ZM1092.1 427.7L1096.2 427.1L1100.3 426.7L1104.3 426.3L1108.2 425.9L1108.2 425.9L1106.4 436.6L1104.6 447.4L1103.2 458.2L1102.1 469.1L1102.1 469.1L1097.4 469.2L1092.7 469.3L1088.1 469.4L1083.4 469.5L1083.4 469.5L1085.3 459.1L1087.4 448.6L1089.7 438.1L1092.1 427.7ZM1127.7 425.3L1132.4 425.4L1137 425.5L1141.5 425.7L1146 426L1146 426L1144.7 436.8L1143.8 447.7L1143.2 458.6L1142.9 469.6L1142.9 469.6L1138 469.4L1133.1 469.3L1128 469.2L1123 469.1L1123 469.1L1123.7 458.1L1124.8 447.1L1126.1 436.2L1127.7 425.3ZM1164 427.7L1168.6 428.1L1173.3 428.6L1178.1 429L1183 429.4L1183 429.4L1182.3 439.7L1182 450L1181.9 460.3L1181.7 470.5L1181.7 470.5L1176.8 470.4L1171.9 470.3L1167 470.2L1162.2 470.1L1162.2 470.1L1162.3 459.5L1162.5 448.8L1163.1 438.2L1164 427.7ZM679.7 470.3L684.6 470.4L689.4 470.5L694.1 470.6L698.7 470.7L698.7 470.7L695.5 479.7L692.3 488.8L689.4 497.9L686.8 507.1L686.8 507.1L682.1 507L677.3 507L672.4 507L667.4 507.1L667.4 507.1L670.3 497.8L673.4 488.6L676.6 479.4L679.7 470.3ZM717.2 470.9L721.9 470.9L726.7 470.8L731.6 470.7L736.6 470.6L736.6 470.6L732.8 480L729.4 489.4L726.5 498.7L724.2 508.1L724.2 508.1L719.4 507.9L714.6 507.8L709.9 507.6L705.3 507.5L705.3 507.5L707.6 498.3L710.5 489.1L713.7 480L717.2 470.9ZM757 470.1L762.2 469.9L767.4 469.8L772.5 469.7L777.5 469.6L777.5 469.6L773.7 479.4L770.5 489.3L767.8 499.1L765.6 508.8L765.6 508.8L760.3 508.8L755 508.7L749.7 508.7L744.5 508.6L744.5 508.6L746.8 499L749.7 489.4L753.1 479.7L757 470.1ZM797 469.5L801.7 469.5L806.4 469.6L811 469.7L815.7 469.9L815.7 469.9L812.7 479.6L810.1 489.3L808 498.9L806.1 508.6L806.1 508.6L801.2 508.7L796.3 508.7L791.3 508.8L786.3 508.8L786.3 508.8L788.3 499L790.7 489.2L793.6 479.3L797 469.5ZM834.9 470.7L840 471L845.1 471.2L850.3 471.4L855.6 471.7L855.6 471.7L852.6 480.8L850 490L847.5 499.2L845.2 508.4L845.2 508.4L840.1 508.4L835.2 508.4L830.2 508.4L825.4 508.4L825.4 508.4L827.4 499L829.5 489.6L832 480.1L834.9 470.7ZM877.4 472.3L882.8 472.4L888.3 472.4L893.6 472.4L898.9 472.4L898.9 472.4L895.7 481.6L892.6 490.8L889.5 500L886.4 509.3L886.4 509.3L881.3 509.1L876.1 508.9L870.9 508.8L865.7 508.7L865.7 508.7L868.6 499.5L871.4 490.4L874.3 481.4L877.4 472.3ZM919 472.2L923.8 472.1L928.5 472L933.2 471.9L937.8 471.8L937.8 471.8L934.6 481.6L931.2 491.4L927.9 501.2L924.7 510.9L924.7 510.9L920.1 510.7L915.5 510.5L910.8 510.3L906.1 510.1L906.1 510.1L909.4 500.6L912.6 491.2L915.8 481.7L919 472.2ZM956.7 471.6L961.5 471.6L966.4 471.6L971.4 471.7L976.4 471.7L976.4 471.7L972.5 481.7L968.7 491.6L965.1 501.6L961.8 511.5L961.8 511.5L957 511.5L952.2 511.5L947.5 511.5L942.9 511.5L942.9 511.5L946.1 501.6L949.6 491.6L953.1 481.6L956.7 471.6ZM997 472L1001.5 472L1005.9 472.1L1010.3 472.1L1014.7 472.1L1014.7 472.1L1010.9 481.5L1007.5 490.9L1004.3 500.2L1001.7 509.6L1001.7 509.6L996.8 510L991.8 510.3L986.9 510.5L982 510.8L982 510.8L985.2 501.1L988.9 491.4L992.8 481.7L997 472ZM1031.6 471.9L1035.8 471.8L1039.9 471.6L1044.1 471.5L1048.2 471.3L1048.2 471.3L1045.8 480.3L1043.8 489.3L1042.1 498.3L1040.8 507.4L1040.8 507.4L1035.9 507.6L1031.1 507.8L1026.3 508.1L1021.4 508.4L1021.4 508.4L1023.4 499.2L1025.8 490.1L1028.5 481L1031.6 471.9ZM1065.3 470.4L1069.8 470.2L1074.3 469.9L1078.8 469.7L1083.4 469.5L1083.4 469.5L1082.1 479L1081.2 488.5L1080.4 498L1079.7 507.5L1079.7 507.5L1074.7 507.4L1069.8 507.3L1064.9 507.2L1060 507.1L1060 507.1L1060.9 497.9L1062.1 488.7L1063.5 479.5L1065.3 470.4ZM1102.1 469.1L1107.4 469.1L1112.6 469.1L1117.8 469.1L1123 469.1L1123 469.1L1122.4 479.1L1122 489.1L1121.4 499.1L1120.5 509L1120.5 509L1115.4 508.9L1110.2 508.7L1104.9 508.5L1099.6 508.3L1099.6 508.3L1100.2 498.5L1100.7 488.7L1101.3 478.9L1102.1 469.1ZM1142.9 469.6L1147.7 469.7L1152.6 469.8L1157.4 470L1162.2 470.1L1162.2 470.1L1162 479.7L1161.6 489.4L1160.9 499L1159.8 508.6L1159.8 508.6L1155.1 508.8L1150.3 508.9L1145.5 509.1L1140.6 509.1L1140.6 509.1L1141.6 499.3L1142.2 489.4L1142.6 479.5L1142.9 469.6ZM1181.7 470.5L1186.7 470.6L1191.8 470.6L1196.9 470.7L1202 470.7L1202 470.7L1201.5 479.7L1200.6 488.7L1199.5 497.8L1198.2 506.9L1198.2 506.9L1193.3 507L1188.4 507.2L1183.6 507.4L1178.8 507.7L1178.8 507.7L1180 498.4L1180.8 489.1L1181.4 479.8L1181.7 470.5ZM646.6 507.7L651.9 507.5L657.2 507.3L662.4 507.2L667.4 507.1L667.4 507.1L664.8 516.7L662.7 526.3L661 536L659.8 545.8L659.8 545.8L654.3 546L648.8 546.3L643.3 546.6L637.7 546.9L637.7 546.9L639.2 537.1L641.3 527.3L643.7 517.5L646.6 507.7ZM686.8 507.1L691.5 507.1L696.1 507.2L700.7 507.4L705.3 507.5L705.3 507.5L703.4 517L702 526.5L701 536.1L700.2 545.7L700.2 545.7L695.4 545.6L690.6 545.5L685.7 545.4L680.7 545.4L680.7 545.4L681.6 535.7L682.9 526.1L684.6 516.5L686.8 507.1ZM724.2 508.1L729.2 508.2L734.2 508.4L739.3 508.5L744.5 508.6L744.5 508.6L742.7 518.4L741.2 528.2L739.8 537.9L738.5 547.5L738.5 547.5L733.6 547.3L728.7 547L723.9 546.8L719.1 546.5L719.1 546.5L720 536.9L721.1 527.3L722.4 517.7L724.2 508.1ZM765.6 508.8L770.8 508.8L776 508.9L781.2 508.8L786.3 508.8L786.3 508.8L784.4 518.8L782.7 528.8L780.8 538.7L778.8 548.5L778.8 548.5L773.8 548.5L768.8 548.4L763.7 548.4L758.7 548.3L758.7 548.3L760.4 538.5L762 528.7L763.7 518.8L765.6 508.8ZM806.1 508.6L810.9 508.6L815.7 508.5L820.5 508.5L825.4 508.4L825.4 508.4L823.3 518.1L821.3 527.9L819.2 537.6L817.1 547.4L817.1 547.4L812.4 547.6L807.7 547.8L803 548L798.3 548.1L798.3 548.1L800.4 538.3L802.3 528.4L804.2 518.5L806.1 508.6ZM845.2 508.4L850.3 508.4L855.4 508.5L860.6 508.6L865.7 508.7L865.7 508.7L862.9 518.1L860.1 527.6L857.6 537.2L855.4 546.8L855.4 546.8L850.4 546.7L845.5 546.7L840.7 546.8L835.9 546.9L835.9 546.9L838 537.1L840.3 527.5L842.7 517.9L845.2 508.4ZM886.4 509.3L891.4 509.5L896.4 509.7L901.3 509.9L906.1 510.1L906.1 510.1L902.9 519.8L900.1 529.5L897.6 539.2L895.8 548.9L895.8 548.9L890.8 548.5L885.7 548.1L880.6 547.8L875.6 547.5L875.6 547.5L877.7 537.9L880.3 528.3L883.2 518.8L886.4 509.3ZM924.7 510.9L929.2 511.1L933.7 511.3L938.3 511.4L942.9 511.5L942.9 511.5L940 521.6L937.6 531.6L935.9 541.6L934.8 551.5L934.8 551.5L929.9 551.3L925.1 551L920.3 550.7L915.5 550.4L915.5 550.4L916.9 540.6L919 530.8L921.6 520.9L924.7 510.9ZM961.8 511.5L966.8 511.3L971.8 511.2L976.9 511L982 510.8L982 510.8L979.3 520.7L977.3 530.6L975.7 540.5L974.6 550.4L974.6 550.4L969.4 550.7L964.3 551.1L959.3 551.3L954.3 551.5L954.3 551.5L955.3 541.6L956.9 531.6L959 521.6L961.8 511.5ZM1001.7 509.6L1006.7 509.3L1011.6 509L1016.5 508.7L1021.4 508.4L1021.4 508.4L1019.8 517.8L1018.5 527.3L1017.3 536.9L1016.2 546.5L1016.2 546.5L1011 547L1005.8 547.5L1000.6 548L995.4 548.5L995.4 548.5L996.5 538.7L997.8 529L999.5 519.3L1001.7 509.6ZM1040.8 507.4L1045.6 507.3L1050.4 507.2L1055.2 507.1L1060 507.1L1060 507.1L1059.2 516.6L1058.4 526.2L1057.5 535.8L1056.3 545.4L1056.3 545.4L1051.4 545.3L1046.5 545.2L1041.6 545.2L1036.6 545.4L1036.6 545.4L1037.7 535.8L1038.7 526.2L1039.6 516.8L1040.8 507.4ZM1079.7 507.5L1084.7 507.7L1089.6 507.9L1094.6 508.1L1099.6 508.3L1099.6 508.3L1098.8 518.3L1097.8 528.3L1096.6 538.2L1095.3 548.1L1095.3 548.1L1090.4 547.7L1085.5 547.3L1080.7 546.9L1075.8 546.5L1075.8 546.5L1077 536.8L1078.1 527L1079 517.3L1079.7 507.5ZM1120.5 509L1125.7 509.1L1130.7 509.1L1135.7 509.2L1140.6 509.1L1140.6 509.1L1139.4 519.2L1137.9 529.3L1136.3 539.2L1134.8 549.2L1134.8 549.2L1129.9 549.3L1124.9 549.3L1120 549.3L1115.1 549.2L1115.1 549.2L1116.6 539.2L1118.1 529.2L1119.4 519.1L1120.5 509ZM1159.8 508.6L1164.6 508.4L1169.3 508.1L1174 507.9L1178.8 507.7L1178.8 507.7L1177.5 517.2L1176.2 526.8L1175 536.5L1174.2 546.2L1174.2 546.2L1169.2 546.6L1164.3 547.1L1159.4 547.5L1154.5 548L1154.5 548L1155.7 538.1L1157.1 528.3L1158.5 518.5L1159.8 508.6ZM659.8 545.8L665.1 545.6L670.4 545.5L675.6 545.4L680.7 545.4L680.7 545.4L680 561.8L680.4 578.3L679.5 595.1L677.7 611.9L677.7 611.9L672.8 612.1L667.9 612.4L663 612.6L658 612.8L658 612.8L659.3 595.8L659.6 579L659 562.3L659.8 545.8ZM700.2 545.7L704.9 545.9L709.6 546.1L714.4 546.3L719.1 546.5L719.1 546.5L718 562.6L717.6 578.6L716.3 594.6L714.8 610.7L714.8 610.7L710.2 610.7L705.7 610.8L701.1 610.9L696.5 611.1L696.5 611.1L698.4 594.6L699.5 578.2L699.4 561.9L700.2 545.7ZM738.5 547.5L743.5 547.7L748.5 547.9L753.6 548.1L758.7 548.3L758.7 548.3L756.2 564.4L754.9 580.2L753.5 596L752.7 611.6L752.7 611.6L747.8 611.4L742.8 611.2L738 611L733.2 610.9L733.2 610.9L734.4 595.1L735.8 579.4L736.7 563.5L738.5 547.5ZM778.8 548.5L783.8 548.4L788.7 548.4L793.5 548.3L798.3 548.1L798.3 548.1L795.5 564.5L794.7 580.8L794.4 597.1L794.9 613.3L794.9 613.3L789.5 613.1L784.1 613L778.8 612.8L773.5 612.5L773.5 612.5L773.7 596.7L774.7 580.8L776 564.7L778.8 548.5ZM817.1 547.4L821.7 547.3L826.4 547.1L831.1 547L835.9 546.9L835.9 546.9L833.7 563.2L834.3 579.7L835.7 596.4L837.3 613.2L837.3 613.2L832.1 613.3L826.8 613.4L821.6 613.5L816.3 613.5L816.3 613.5L815.1 596.9L814.5 580.3L814.6 563.8L817.1 547.4ZM855.4 546.8L860.4 546.9L865.4 547.1L870.5 547.3L875.6 547.5L875.6 547.5L874 563.6L875.2 579.9L876.9 596.3L878.1 612.7L878.1 612.7L873.1 612.7L868 612.7L863 612.8L857.9 612.8L857.9 612.8L856.2 596.1L854.5 579.5L853.5 563L855.4 546.8ZM895.8 548.9L900.8 549.3L905.7 549.7L910.6 550L915.5 550.4L915.5 550.4L914.8 566.6L916.4 582.6L917.4 598.4L917.5 614.2L917.5 614.2L912.7 613.9L907.8 613.6L903 613.4L898.1 613.2L898.1 613.2L897.4 597.1L896.1 581.1L894.6 565L895.8 548.9ZM934.8 551.5L939.6 551.6L944.5 551.6L949.4 551.6L954.3 551.5L954.3 551.5L953.9 567.8L955.1 584L955.4 599.9L954.9 615.8L954.9 615.8L950.3 615.7L945.7 615.6L941 615.4L936.4 615.2L936.4 615.2L936.7 599.6L936 583.7L934.4 567.7L934.8 551.5ZM974.6 550.4L979.7 549.9L984.9 549.5L990.1 549L995.4 548.5L995.4 548.5L994.1 564.8L993.9 581.2L993.2 597.7L992.5 614.2L992.5 614.2L987.7 614.5L982.9 614.9L978.2 615.2L973.5 615.4L973.5 615.4L974.1 599.2L974.3 583L973.8 566.7L974.6 550.4ZM1016.2 546.5L1021.4 546.1L1026.5 545.8L1031.6 545.5L1036.6 545.4L1036.6 545.4L1034.8 561.5L1033.8 577.9L1032.9 594.5L1032.7 611.2L1032.7 611.2L1027.5 611.5L1022.4 611.8L1017.3 612.2L1012.3 612.5L1012.3 612.5L1012.8 595.8L1013.9 579.2L1014.6 562.8L1016.2 546.5ZM1056.3 545.4L1061.2 545.6L1066.1 545.9L1070.9 546.2L1075.8 546.5L1075.8 546.5L1073.9 562.8L1073.1 579L1073.1 595.2L1074.3 611.3L1074.3 611.3L1069.1 611.1L1063.9 611L1058.7 610.8L1053.5 610.8L1053.5 610.8L1053 594.3L1053.5 577.9L1054.5 561.6L1056.3 545.4ZM1095.3 548.1L1100.2 548.4L1105.2 548.7L1110.1 549L1115.1 549.2L1115.1 549.2L1113.2 565.6L1112.8 581.7L1113.6 597.7L1115.1 613.5L1115.1 613.5L1110 613.3L1105 613L1099.9 612.8L1094.8 612.5L1094.8 612.5L1093.3 596.6L1092.8 580.6L1093.4 564.4L1095.3 548.1ZM1134.8 549.2L1139.7 549L1144.6 548.7L1149.6 548.4L1154.5 548L1154.5 548L1153.4 564.3L1153.9 580.6L1154.9 596.9L1155.7 613.1L1155.7 613.1L1150.6 613.3L1145.5 613.5L1140.4 613.7L1135.4 613.8L1135.4 613.8L1134.1 597.8L1133.2 581.8L1133.2 565.6L1134.8 549.2ZM1174.2 546.2L1179.2 545.8L1184.2 545.4L1189.2 545.1L1194.3 544.8L1194.3 544.8L1194.4 561L1195.4 577.4L1196.1 594L1196.1 610.8L1196.1 610.8L1191.2 611L1186.2 611.3L1181.2 611.5L1176.1 611.9L1176.1 611.9L1175.6 595.3L1174.6 578.8L1173.8 562.4L1174.2 546.2ZM687.5 611.1L692.6 610.9L697.6 610.8L702.7 610.7L707.7 610.7L707.7 610.7L709.7 618.8L711.8 627L714.2 635.2L716.7 643.4L716.7 643.4L711.3 643.6L706 644L700.6 644.4L695.2 644.7L695.2 644.7L693 636.3L691 627.9L689.2 619.5L687.5 611.1ZM728.2 610.9L733.5 611L738.8 611.2L744.2 611.4L749.7 611.6L749.7 611.6L752.3 619.5L755 627.4L757.9 635.3L760.8 643.3L760.8 643.3L755.2 643L749.5 642.9L744 642.8L738.5 642.8L738.5 642.8L735.7 634.8L733 626.8L730.5 618.8L728.2 610.9ZM772.4 612.5L778.2 612.8L784.1 613L790 613.1L795.8 613.3L795.8 613.3L798.9 621.5L801.9 629.7L804.8 637.9L807.6 646.2L807.6 646.2L801.7 645.8L795.7 645.4L789.8 645L784 644.6L784 644.6L781.1 636.6L778.1 628.6L775.2 620.6L772.4 612.5ZM818.6 613.5L824.2 613.5L829.8 613.4L835.4 613.3L840.9 613.2L840.9 613.2L844 621.8L846.8 630.4L849.4 639L851.7 647.5L851.7 647.5L846.4 647.5L841 647.5L835.5 647.4L830 647.3L830 647.3L827.5 638.8L824.7 630.4L821.7 621.9L818.6 613.5ZM862.7 612.8L868.1 612.8L873.5 612.7L878.9 612.7L884.2 612.7L884.2 612.7L886.7 621.1L888.8 629.5L890.8 637.9L892.5 646.3L892.5 646.3L887.5 646.4L882.5 646.6L877.5 646.8L872.5 647L872.5 647L870.4 638.5L868.1 629.9L865.6 621.4L862.7 612.8ZM905.4 613.2L910.6 613.4L915.8 613.6L921 613.9L926.1 614.2L926.1 614.2L927.7 622.1L929.1 630.1L930.4 638.1L931.7 646L931.7 646L926.8 645.9L921.9 645.8L917 645.8L912.1 645.8L912.1 645.8L910.7 637.7L909.1 629.5L907.4 621.3L905.4 613.2ZM946.3 615.2L951.2 615.4L956.2 615.6L961.1 615.7L966 615.8L966 615.8L967.3 623.8L968.6 631.7L970 639.7L971.5 647.7L971.5 647.7L966.5 647.5L961.5 647.2L956.4 647L951.4 646.8L951.4 646.8L950.1 638.9L948.9 631L947.6 623.1L946.3 615.2ZM985.9 615.4L990.9 615.2L995.9 614.9L1001 614.5L1006.1 614.2L1006.1 614.2L1007.5 622.6L1009.1 631L1010.8 639.3L1012.8 647.7L1012.8 647.7L1007.5 647.9L1002.3 648L997.1 648.1L992 648.1L992 648.1L990.2 639.9L988.6 631.8L987.2 623.6L985.9 615.4ZM1027.2 612.5L1032.5 612.2L1037.9 611.8L1043.4 611.5L1048.9 611.2L1048.9 611.2L1050.4 619.8L1052.2 628.3L1054.1 636.9L1056 645.5L1056 645.5L1050.5 645.8L1045 646.1L1039.6 646.4L1034.1 646.7L1034.1 646.7L1032.1 638.2L1030.3 629.6L1028.6 621.1L1027.2 612.5ZM1070.9 610.8L1076.4 610.8L1081.9 611L1087.4 611.1L1092.9 611.3L1092.9 611.3L1094.8 619.6L1096.7 627.8L1098.6 636L1100.3 644.2L1100.3 644.2L1094.8 644.2L1089.3 644.3L1083.8 644.4L1078.3 644.5L1078.3 644.5L1076.4 636.1L1074.5 627.6L1072.6 619.2L1070.9 610.8ZM1114.7 612.5L1120.1 612.8L1125.5 613L1130.9 613.3L1136.3 613.5L1136.3 613.5L1137.9 621.5L1139.4 629.4L1140.7 637.4L1141.8 645.3L1141.8 645.3L1136.8 645.1L1131.8 644.9L1126.7 644.8L1121.5 644.6L1121.5 644.6L1120.1 636.6L1118.4 628.5L1116.6 620.5L1114.7 612.5ZM1157.8 613.8L1163.2 613.7L1168.6 613.5L1174 613.3L1179.4 613.1L1179.4 613.1L1180.2 621.3L1180.8 629.5L1181.2 637.8L1181.4 646L1181.4 646L1176.4 646L1171.5 646L1166.5 645.9L1161.6 645.9L1161.6 645.9L1160.9 637.8L1160.1 629.8L1159 621.8L1157.8 613.8ZM1201.3 611.9L1206.8 611.5L1212.4 611.3L1217.9 611L1223.3 610.8L1223.3 610.8L1223.6 619.4L1223.7 628L1223.7 636.6L1223.8 645.3L1223.8 645.3L1218.4 645.4L1212.9 645.5L1207.5 645.6L1202.1 645.7L1202.1 645.7L1202 637.2L1201.9 628.8L1201.7 620.3L1201.3 611.9ZM673.6 646.3L679 645.9L684.4 645.5L689.8 645.1L695.2 644.7L695.2 644.7L697.5 652.6L699.9 660.5L702.4 668.4L704.9 676.3L704.9 676.3L699.5 676.8L694 677.3L688.6 677.8L683.2 678.2L683.2 678.2L680.6 670.3L678.1 662.3L675.7 654.3L673.6 646.3ZM716.7 643.4L722.1 643.1L727.5 642.9L733 642.8L738.5 642.8L738.5 642.8L741.1 650.3L743.8 657.8L746.4 665.4L748.8 673.1L748.8 673.1L743.3 673.2L737.8 673.5L732.3 673.8L726.8 674.2L726.8 674.2L724.3 666.5L721.8 658.8L719.2 651L716.7 643.4ZM760.8 643.3L766.5 643.5L772.3 643.9L778.1 644.2L784 644.6L784 644.6L786.6 652.2L789 659.7L791.3 667.3L793.5 674.9L793.5 674.9L787.8 674.5L782.2 674L776.6 673.7L771 673.4L771 673.4L768.7 665.8L766.2 658.2L763.5 650.7L760.8 643.3ZM807.6 646.2L813.4 646.5L818.9 646.8L824.5 647.1L830 647.3L830 647.3L832.2 655.2L834.1 663.1L835.9 670.9L837.7 678.8L837.7 678.8L832.4 678.5L827.1 678L821.8 677.6L816.2 677.1L816.2 677.1L814.3 669.3L812.2 661.6L810 653.9L807.6 646.2ZM851.7 647.5L857 647.4L862.2 647.3L867.3 647.2L872.5 647L872.5 647L874.2 655L875.8 663L877.4 671L879.1 678.9L879.1 678.9L874 679.2L869 679.3L863.8 679.4L858.7 679.5L858.7 679.5L857 671.5L855.4 663.5L853.6 655.5L851.7 647.5ZM892.5 646.3L897.4 646.1L902.3 646L907.2 645.9L912.1 645.8L912.1 645.8L913.4 653.5L914.9 661.2L916.4 668.9L918.2 676.6L918.2 676.6L913.4 676.8L908.5 677.1L903.7 677.4L898.8 677.7L898.8 677.7L897.1 669.9L895.5 662L894 654.1L892.5 646.3ZM931.7 646L936.6 646.2L941.5 646.4L946.5 646.6L951.4 646.8L951.4 646.8L952.8 654.2L954.3 661.7L956 669.1L957.7 676.6L957.7 676.6L952.6 676.4L947.6 676.3L942.6 676.2L937.7 676.2L937.7 676.2L935.9 668.6L934.4 661.1L932.9 653.5L931.7 646ZM971.5 647.7L976.6 647.8L981.7 647.9L986.8 648L992 648.1L992 648.1L993.8 655.7L995.7 663.4L997.6 671L999.4 678.6L999.4 678.6L994.2 678.4L988.9 678.2L983.7 677.9L978.4 677.6L978.4 677.6L976.6 670.1L974.8 662.6L973.1 655.1L971.5 647.7ZM1012.8 647.7L1018.1 647.5L1023.4 647.3L1028.8 647L1034.1 646.7L1034.1 646.7L1036.1 654.7L1037.9 662.7L1039.7 670.7L1041.3 678.6L1041.3 678.6L1036.1 678.8L1030.9 678.9L1025.7 679L1020.4 679L1020.4 679L1018.6 671.2L1016.7 663.4L1014.7 655.6L1012.8 647.7ZM1056 645.5L1061.6 645.2L1067.1 644.9L1072.7 644.7L1078.3 644.5L1078.3 644.5L1079.8 652.4L1081.2 660.4L1082.3 668.3L1083.2 676.2L1083.2 676.2L1077.9 676.5L1072.7 676.8L1067.4 677.1L1062.1 677.5L1062.1 677.5L1060.9 669.5L1059.5 661.5L1057.8 653.5L1056 645.5ZM1100.3 644.2L1105.7 644.3L1111 644.3L1116.3 644.5L1121.5 644.6L1121.5 644.6L1122.6 652.1L1123.5 659.7L1124.2 667.3L1124.8 674.9L1124.8 674.9L1119.7 674.9L1114.6 675L1109.5 675.1L1104.3 675.2L1104.3 675.2L1103.6 667.4L1102.8 659.7L1101.6 652L1100.3 644.2ZM1141.8 645.3L1146.8 645.5L1151.7 645.6L1156.7 645.7L1161.6 645.9L1161.6 645.9L1162.1 653.4L1162.4 660.9L1162.8 668.5L1163.3 676L1163.3 676L1158.6 675.8L1153.8 675.6L1149.1 675.4L1144.3 675.3L1144.3 675.3L1143.8 667.7L1143.3 660.2L1142.6 652.8L1141.8 645.3ZM1181.4 646L1186.5 645.9L1191.5 645.9L1196.6 645.8L1202.1 645.7L1202.1 645.7L1202.1 653.6L1202.3 661.6L1202.5 669.5L1203 677.4L1203 677.4L1197.5 677.3L1192.3 677.2L1187.3 677L1182.4 676.9L1182.4 676.9L1182 669.1L1181.8 661.4L1181.6 653.7L1181.4 646ZM704.9 676.3L710.4 675.7L715.9 675.2L721.3 674.7L726.8 674.2L726.8 674.2L729.3 682.5L731.6 690.7L733.8 699L735.9 707.3L735.9 707.3L730.5 707.8L725.2 708.4L719.9 708.9L714.6 709.5L714.6 709.5L712.4 701.2L710.1 692.9L707.6 684.6L704.9 676.3ZM748.8 673.1L754.3 673L759.9 673L765.4 673.1L771 673.4L771 673.4L773.3 681.5L775.5 689.7L777.7 697.9L780 706.2L780 706.2L774.4 706L768.8 705.9L763.2 705.9L757.7 706L757.7 706L755.6 697.7L753.5 689.4L751.2 681.2L748.8 673.1ZM793.5 674.9L799.1 675.5L804.8 676L810.5 676.5L816.2 677.1L816.2 677.1L818.3 685.3L820.4 693.6L822.7 701.8L825.2 710.1L825.2 710.1L819.5 709.5L813.8 708.9L808.2 708.4L802.5 707.8L802.5 707.8L800.1 699.5L797.8 691.3L795.6 683.1L793.5 674.9ZM837.7 678.8L843 679.1L848.2 679.3L853.5 679.4L858.7 679.5L858.7 679.5L860.5 687.9L862.6 696.2L864.9 704.5L867.4 712.8L867.4 712.8L862.2 712.7L856.9 712.5L851.7 712.3L846.4 712L846.4 712L843.9 703.7L841.6 695.5L839.6 687.1L837.7 678.8ZM879.1 678.9L884.1 678.7L889 678.4L894 678.1L898.8 677.7L898.8 677.7L900.9 686.1L903.1 694.4L905.6 702.7L908.1 711L908.1 711L903.2 711.4L898.2 711.7L893.2 712L888.1 712.3L888.1 712.3L885.6 704.1L883.2 695.7L881 687.4L879.1 678.9ZM918.2 676.6L923 676.4L927.9 676.3L932.8 676.2L937.7 676.2L937.7 676.2L939.7 684.3L941.8 692.4L943.9 700.6L945.9 708.8L945.9 708.8L941.3 708.9L936.6 709.1L931.9 709.3L927.2 709.6L927.2 709.6L924.8 701.3L922.5 693.1L920.3 684.8L918.2 676.6ZM957.7 676.6L962.8 676.8L968 677.1L973.2 677.4L978.4 677.6L978.4 677.6L980.3 685.7L982 693.7L983.6 701.8L984.9 709.9L984.9 709.9L979.9 709.7L974.9 709.4L969.9 709.2L965 709L965 709L963.4 700.8L961.6 692.7L959.6 684.6L957.7 676.6ZM999.4 678.6L1004.7 678.8L1010 678.9L1015.2 679L1020.4 679L1020.4 679L1022.1 687.3L1023.6 695.5L1024.8 703.7L1025.8 711.9L1025.8 711.9L1020.7 711.8L1015.6 711.6L1010.5 711.4L1005.3 711.1L1005.3 711.1L1004.2 703L1002.9 694.9L1001.3 686.8L999.4 678.6ZM1041.3 678.6L1046.5 678.4L1051.7 678.1L1056.9 677.8L1062.1 677.5L1062.1 677.5L1063.2 685.9L1064.1 694.3L1064.8 702.7L1065.5 711L1065.5 711L1060.5 711.3L1055.6 711.5L1050.7 711.7L1045.7 711.9L1045.7 711.9L1044.9 703.6L1043.9 695.3L1042.7 687L1041.3 678.6ZM1083.2 676.2L1088.5 675.9L1093.8 675.6L1099 675.4L1104.3 675.2L1104.3 675.2L1104.8 683.5L1105.3 691.8L1105.8 700.1L1106.3 708.4L1106.3 708.4L1101.1 708.7L1095.9 709L1090.7 709.3L1085.6 709.6L1085.6 709.6L1085 701.3L1084.5 692.9L1083.9 684.6L1083.2 676.2ZM1124.8 674.9L1129.8 674.9L1134.7 675L1139.5 675.1L1144.3 675.3L1144.3 675.3L1144.9 683.3L1145.6 691.4L1146.4 699.6L1147.4 707.7L1147.4 707.7L1142.4 707.7L1137.4 707.6L1132.3 707.6L1127.2 707.7L1127.2 707.7L1126.4 699.4L1125.8 691.2L1125.3 683L1124.8 674.9ZM1163.3 676L1168 676.3L1172.8 676.5L1177.6 676.7L1182.4 676.9L1182.4 676.9L1183 685.1L1183.8 693.3L1184.8 701.5L1185.8 709.7L1185.8 709.7L1181 709.4L1176.2 709.1L1171.5 708.8L1166.7 708.5L1166.7 708.5L1165.6 700.4L1164.7 692.2L1163.9 684.1L1163.3 676ZM1203 677.4L1208.6 677.5L1214.3 677.6L1220 677.6L1225.7 677.6L1225.7 677.6L1226.6 686.2L1227.5 694.7L1228.5 703.2L1229.3 711.6L1229.3 711.6L1223.5 711.5L1217.7 711.3L1211.9 711.1L1206.3 710.9L1206.3 710.9L1205.4 702.6L1204.5 694.2L1203.7 685.8L1203 677.4ZM693.9 711.6L699.1 711.1L704.2 710.6L709.4 710.1L714.6 709.5L714.6 709.5L716.6 717.5L718.6 725.5L720.7 733.4L722.8 741.3L722.8 741.3L717.6 741.8L712.5 742.2L707.5 742.6L702.5 743L702.5 743L700.4 735.2L698.3 727.4L696.2 719.5L693.9 711.6ZM735.9 707.3L741.3 706.9L746.7 706.5L752.2 706.2L757.7 706L757.7 706L759.8 714.1L762 722.3L764.5 730.5L767.2 738.8L767.2 738.8L761.4 738.9L755.6 739.1L749.9 739.3L744.4 739.7L744.4 739.7L742 731.6L739.8 723.5L737.8 715.4L735.9 707.3ZM780 706.2L785.6 706.5L791.2 706.9L796.8 707.3L802.5 707.8L802.5 707.8L805.1 715.9L808 724L811.2 732.2L814.6 740.4L814.6 740.4L808.7 740L802.8 739.6L796.8 739.3L790.9 739L790.9 739L787.7 730.8L784.9 722.5L782.3 714.3L780 706.2ZM825.2 710.1L830.7 710.6L836 711.1L841.2 711.6L846.4 712L846.4 712L849.2 719.9L852.2 727.9L855.4 735.8L858.6 743.6L858.6 743.6L853.6 743.3L848.5 743L843.4 742.6L837.9 742.2L837.9 742.2L834.4 734.1L831.1 726.1L828 718.1L825.2 710.1ZM867.4 712.8L872.6 712.8L877.8 712.7L883 712.5L888.1 712.3L888.1 712.3L890.7 720.3L893.4 728.2L896 736.1L898.5 743.9L898.5 743.9L893.6 744.1L888.7 744.2L883.7 744.3L878.7 744.3L878.7 744.3L875.9 736.5L872.9 728.6L870.1 720.7L867.4 712.8ZM908.1 711L912.9 710.6L917.7 710.3L922.5 709.9L927.2 709.6L927.2 709.6L929.5 717.6L931.6 725.7L933.5 733.8L935.3 741.9L935.3 741.9L930.9 742.1L926.5 742.4L922 742.7L917.4 742.9L917.4 742.9L915.3 735L913 727L910.6 719L908.1 711ZM945.9 708.8L950.7 708.8L955.4 708.8L960.2 708.9L965 709L965 709L966.4 717L967.7 725L968.8 733.1L969.8 741.2L969.8 741.2L965.4 741.2L961 741.1L956.7 741.2L952.4 741.2L952.4 741.2L951 733L949.5 724.9L947.8 716.8L945.9 708.8ZM984.9 709.9L990 710.2L995.1 710.5L1000.2 710.8L1005.3 711.1L1005.3 711.1L1006.2 719L1007 726.9L1007.7 734.7L1008.6 742.6L1008.6 742.6L1003.5 742.4L998.4 742.2L993.4 742L988.5 741.8L988.5 741.8L987.7 733.8L986.9 725.8L986 717.9L984.9 709.9ZM1025.8 711.9L1030.8 712L1035.8 712L1040.8 711.9L1045.7 711.9L1045.7 711.9L1046.5 719.8L1047.4 727.6L1048.5 735.5L1049.7 743.2L1049.7 743.2L1044.7 743.3L1039.6 743.3L1034.5 743.2L1029.3 743.2L1029.3 743.2L1028.3 735.4L1027.4 727.6L1026.6 719.8L1025.8 711.9ZM1065.5 711L1070.5 710.7L1075.5 710.3L1080.5 710L1085.6 709.6L1085.6 709.6L1086.3 717.7L1087.2 725.7L1088.3 733.7L1089.7 741.7L1089.7 741.7L1084.6 742L1079.6 742.2L1074.6 742.5L1069.7 742.7L1069.7 742.7L1068.3 734.8L1067.1 726.9L1066.2 719L1065.5 711ZM1106.3 708.4L1111.6 708.1L1116.8 707.9L1122 707.8L1127.2 707.7L1127.2 707.7L1128.1 715.7L1129.1 723.8L1130.2 731.9L1131.3 740.1L1131.3 740.1L1126 740.2L1120.8 740.4L1115.5 740.6L1110.3 740.8L1110.3 740.8L1109.1 732.7L1108 724.5L1107.1 716.5L1106.3 708.4ZM1147.4 707.7L1152.3 707.9L1157.1 708.1L1161.9 708.3L1166.7 708.5L1166.7 708.5L1167.8 716.5L1168.9 724.5L1170 732.5L1170.8 740.6L1170.8 740.6L1166.2 740.4L1161.4 740.3L1156.6 740.1L1151.7 740.1L1151.7 740.1L1150.7 731.9L1149.6 723.8L1148.4 715.7L1147.4 707.7ZM1185.8 709.7L1190.7 710L1195.6 710.3L1200.7 710.6L1206.3 710.9L1206.3 710.9L1207 718.9L1207.6 726.9L1207.9 734.9L1208 742.8L1208 742.8L1202.7 742.5L1198 742.2L1193.5 741.9L1188.9 741.6L1188.9 741.6L1188.4 733.7L1187.7 725.7L1186.8 717.7L1185.8 709.7ZM722.8 741.3L728.1 740.9L733.4 740.4L738.8 740L744.4 739.7L744.4 739.7L747.1 748.3L750.2 756.9L753.6 765.6L757.2 774.3L757.2 774.3L751.4 774.4L745.7 774.5L740 774.6L734.5 774.8L734.5 774.8L731.2 766.5L728.1 758.1L725.3 749.7L722.8 741.3ZM767.2 738.8L773.1 738.7L779 738.7L784.9 738.9L790.9 739L790.9 739L794.4 747.9L798.2 756.8L802 765.8L805.8 774.7L805.8 774.7L799.6 774.6L793.5 774.4L787.3 774.3L781.1 774.2L781.1 774.2L777.4 765.3L773.8 756.4L770.4 747.6L767.2 738.8ZM814.6 740.4L820.5 740.8L826.3 741.3L832.1 741.7L837.9 742.2L837.9 742.2L841.8 750.7L845.6 759.3L849.3 767.8L852.9 776.4L852.9 776.4L847.3 776.2L841.6 776L835.9 775.8L830 775.6L830 775.6L826.3 766.7L822.4 757.9L818.4 749.1L814.6 740.4ZM858.6 743.6L863.7 743.9L868.7 744.1L873.7 744.2L878.7 744.3L878.7 744.3L881.7 752.5L884.5 760.7L887 768.9L889.3 777L889.3 777L885 777L880.6 777L876.1 776.9L871.7 776.9L871.7 776.9L868.7 768.6L865.5 760.3L862.1 752L858.6 743.6ZM898.5 743.9L903.3 743.7L908.1 743.5L912.8 743.2L917.4 742.9L917.4 742.9L919.4 751.4L921.2 759.8L922.9 768.2L924.5 776.6L924.5 776.6L920.1 776.7L915.7 776.7L911.3 776.8L906.9 776.8L906.9 776.8L905.1 768.7L903.1 760.5L900.9 752.2L898.5 743.9ZM935.3 741.9L939.6 741.6L943.9 741.5L948.1 741.3L952.4 741.2L952.4 741.2L953.8 749.9L955.2 758.7L956.7 767.5L958.4 776.3L958.4 776.3L954.2 776.4L950 776.4L945.9 776.4L941.6 776.4L941.6 776.4L940 767.8L938.5 759.1L936.9 750.5L935.3 741.9ZM969.8 741.2L974.4 741.3L979 741.5L983.7 741.6L988.5 741.8L988.5 741.8L989.5 750.4L990.7 759L992.3 767.6L994.2 776.2L994.2 776.2L989.3 776.3L984.6 776.3L980 776.3L975.5 776.3L975.5 776.3L973.7 767.5L972.2 758.7L970.9 749.9L969.8 741.2ZM1008.6 742.6L1013.7 742.8L1018.9 743L1024.1 743.1L1029.3 743.2L1029.3 743.2L1030.7 751.4L1032.3 759.6L1034.2 767.8L1036.4 775.9L1036.4 775.9L1031 775.9L1025.5 776L1020.1 776L1014.7 776.1L1014.7 776.1L1012.7 767.7L1011 759.4L1009.7 751L1008.6 742.6ZM1049.7 743.2L1054.7 743.1L1059.7 743L1064.7 742.9L1069.7 742.7L1069.7 742.7L1071.4 751L1073.4 759.2L1075.5 767.4L1077.6 775.6L1077.6 775.6L1072.7 775.6L1067.8 775.6L1062.8 775.7L1057.7 775.7L1057.7 775.7L1055.4 767.6L1053.3 759.5L1051.4 751.4L1049.7 743.2ZM1089.7 741.7L1094.7 741.5L1099.9 741.2L1105.1 741L1110.3 740.8L1110.3 740.8L1111.6 749.4L1113 758.1L1114.2 766.7L1115.2 775.4L1115.2 775.4L1110.5 775.4L1105.8 775.4L1101.1 775.5L1096.4 775.5L1096.4 775.5L1094.8 767.1L1093 758.7L1091.3 750.2L1089.7 741.7ZM1131.3 740.1L1136.5 740L1141.6 740L1146.7 740L1151.7 740.1L1151.7 740.1L1152.6 748.8L1153.2 757.5L1153.6 766.3L1153.7 775.2L1153.7 775.2L1149 775.2L1144.2 775.2L1139.4 775.2L1134.5 775.3L1134.5 775.3L1134 766.4L1133.3 757.6L1132.4 748.9L1131.3 740.1ZM1170.8 740.6L1175.4 740.8L1179.9 741.1L1184.4 741.4L1188.9 741.6L1188.9 741.6L1189.2 750.1L1189.3 758.6L1189.1 767.1L1188.9 775.6L1188.9 775.6L1184.7 775.5L1180.5 775.4L1176.2 775.3L1171.9 775.2L1171.9 775.2L1172 766.5L1171.8 757.9L1171.5 749.2L1170.8 740.6ZM1208 742.8L1213.4 743.1L1218.9 743.3L1224.5 743.5L1230.1 743.7L1230.1 743.7L1229.7 752.1L1229.2 760.5L1228.8 768.8L1228.5 777.1L1228.5 777.1L1222.9 776.9L1217.4 776.6L1212.1 776.4L1206.9 776.2L1206.9 776.2L1207.2 767.9L1207.6 759.6L1207.9 751.2L1208 742.8ZM713 775.6L718.3 775.4L723.6 775.2L729 775L734.5 774.8L734.5 774.8L738 783.2L741.6 791.5L745.1 799.8L748.5 808.2L748.5 808.2L743 808.1L737.4 808L731.8 808L726.2 808L726.2 808L722.9 799.9L719.5 791.8L716.2 783.7L713 775.6ZM757.2 774.3L763 774.2L769 774.2L775 774.2L781.1 774.2L781.1 774.2L784.8 783.2L788.3 792.1L791.6 801L794.6 810L794.6 810L788.6 809.7L782.7 809.4L776.9 809.2L771.1 808.9L771.1 808.9L767.9 800.3L764.4 791.6L760.8 782.9L757.2 774.3ZM805.8 774.7L812 774.9L818 775.1L824.1 775.3L830 775.6L830 775.6L833.5 784.4L836.7 793.3L839.6 802.1L842.3 811L842.3 811L836.5 811L830.6 810.9L824.6 810.9L818.6 810.8L818.6 810.8L815.9 801.8L812.8 792.7L809.4 783.7L805.8 774.7ZM852.9 776.4L858 776.5L862.6 776.7L867.2 776.8L871.7 776.9L871.7 776.9L874.4 785.1L877 793.4L879.4 801.6L881.8 809.9L881.8 809.9L877.7 810.1L873.5 810.3L869.3 810.4L864.4 810.6L864.4 810.6L861.8 802L859.1 793.5L856.1 784.9L852.9 776.4ZM889.3 777L893.7 777L898.1 776.9L902.5 776.9L906.9 776.8L906.9 776.8L908.7 785L910.5 793.2L912.4 801.3L914.5 809.5L914.5 809.5L910.2 809.4L906.1 809.4L901.9 809.4L897.9 809.4L897.9 809.4L895.7 801.3L893.6 793.2L891.5 785.1L889.3 777ZM924.5 776.6L928.8 776.5L933.1 776.5L937.4 776.5L941.6 776.4L941.6 776.4L943.4 785.1L945.4 793.8L947.7 802.4L950.1 811.1L950.1 811.1L945.6 810.9L941.1 810.7L936.5 810.4L932 810.2L932 810.2L929.8 801.8L927.9 793.4L926.1 785L924.5 776.6ZM958.4 776.3L962.6 776.3L966.8 776.3L971.1 776.3L975.5 776.3L975.5 776.3L977.7 785.2L980.2 794L982.9 802.9L985.8 811.7L985.8 811.7L981.3 811.8L976.9 811.9L972.5 811.9L968 811.8L968 811.8L965.3 802.9L962.7 794.1L960.4 785.2L958.4 776.3ZM994.2 776.2L999.1 776.2L1004.2 776.2L1009.4 776.1L1014.7 776.1L1014.7 776.1L1017 784.5L1019.4 792.8L1021.9 801.2L1024.3 809.6L1024.3 809.6L1019.2 809.9L1014.1 810.3L1009.2 810.6L1004.3 810.9L1004.3 810.9L1001.6 802.2L998.9 793.6L996.4 784.9L994.2 776.2ZM1036.4 775.9L1041.8 775.8L1047.2 775.8L1052.5 775.7L1057.7 775.7L1057.7 775.7L1060 783.7L1062.2 791.8L1064.2 799.8L1066 807.8L1066 807.8L1061 807.8L1055.9 808L1050.7 808.1L1045.4 808.4L1045.4 808.4L1043.3 800.2L1041.1 792.1L1038.7 784L1036.4 775.9ZM1077.6 775.6L1082.4 775.5L1087.1 775.5L1091.8 775.5L1096.4 775.5L1096.4 775.5L1098 783.9L1099.3 792.3L1100.4 800.6L1101.4 809L1101.4 809L1097.4 808.7L1093.2 808.5L1089 808.3L1084.6 808.1L1084.6 808.1L1083.2 800L1081.5 791.8L1079.6 783.7L1077.6 775.6ZM1115.2 775.4L1120 775.4L1124.8 775.3L1129.7 775.3L1134.5 775.3L1134.5 775.3L1134.8 784.1L1134.9 793L1134.9 801.9L1135 810.7L1135 810.7L1130.6 810.6L1126.2 810.5L1121.9 810.3L1117.7 810.1L1117.7 810.1L1117.3 801.4L1116.7 792.7L1116.1 784.1L1115.2 775.4ZM1153.7 775.2L1158.4 775.2L1163 775.2L1167.5 775.2L1171.9 775.2L1171.9 775.2L1171.7 783.9L1171.6 792.7L1171.6 801.4L1171.9 810.1L1171.9 810.1L1167.3 810.3L1162.7 810.4L1158 810.6L1153.4 810.7L1153.4 810.7L1153.4 801.8L1153.5 792.9L1153.6 784L1153.7 775.2ZM1188.9 775.6L1193.1 775.7L1197.4 775.9L1201.8 776.1L1206.9 776.2L1206.9 776.2L1206.7 784.5L1206.9 792.8L1207.3 801.1L1208.1 809.4L1208.1 809.4L1202.8 809.4L1198.3 809.4L1194 809.4L1189.6 809.5L1189.6 809.5L1189.1 801L1188.8 792.6L1188.8 784.1L1188.9 775.6ZM748.5 808.2L754.1 808.3L759.8 808.5L765.4 808.7L771.1 808.9L771.1 808.9L774 817.1L776.6 825.2L779 833.3L781.3 841.5L781.3 841.5L775.7 841L770.2 840.5L764.7 840L759.2 839.6L759.2 839.6L756.8 831.8L754.3 823.9L751.5 816L748.5 808.2ZM794.6 810L800.5 810.2L806.6 810.4L812.6 810.6L818.6 810.8L818.6 810.8L821 819.2L823.2 827.6L825.4 836L827.5 844.3L827.5 844.3L821.6 844.2L815.6 844L809.7 843.7L803.9 843.3L803.9 843.3L801.7 835L799.5 826.7L797.1 818.3L794.6 810ZM842.3 811L848 810.9L853.6 810.8L859 810.7L864.4 810.6L864.4 810.6L866.8 818.6L869.2 826.7L871.6 834.8L874.2 842.8L874.2 842.8L868.7 843.2L863 843.6L857.3 843.9L851.4 844.1L851.4 844.1L849.1 835.9L846.8 827.6L844.6 819.3L842.3 811ZM881.8 809.9L885.8 809.8L889.9 809.6L893.9 809.5L897.9 809.4L897.9 809.4L900.1 817.1L902.5 824.8L905.1 832.5L907.8 840.3L907.8 840.3L903.8 840.4L899.9 840.6L895.9 840.9L891.9 841.2L891.9 841.2L889.2 833.4L886.6 825.5L884.1 817.7L881.8 809.9ZM914.5 809.5L918.8 809.6L923.1 809.8L927.6 810L932 810.2L932 810.2L934.3 818.1L936.7 826L939.1 834L941.5 841.9L941.5 841.9L937 841.5L932.6 841.1L928.2 840.8L924 840.5L924 840.5L921.4 832.7L918.9 825L916.6 817.2L914.5 809.5ZM950.1 811.1L954.6 811.3L959.1 811.5L963.6 811.7L968 811.8L968 811.8L970.8 820.1L973.5 828.4L976.1 836.7L978.5 845L978.5 845L974 844.8L969.4 844.5L964.7 844.1L960.1 843.7L960.1 843.7L957.7 835.6L955.2 827.4L952.6 819.3L950.1 811.1ZM985.8 811.7L990.3 811.6L994.9 811.4L999.6 811.2L1004.3 810.9L1004.3 810.9L1006.8 819.1L1009.2 827.2L1011.5 835.3L1013.5 843.4L1013.5 843.4L1009.1 843.9L1004.7 844.3L1000.4 844.6L996.1 844.9L996.1 844.9L993.8 836.7L991.2 828.4L988.6 820.1L985.8 811.7ZM1024.3 809.6L1029.5 809.2L1034.8 808.9L1040.1 808.6L1045.4 808.4L1045.4 808.4L1047.2 816L1048.7 823.7L1050.1 831.4L1051.3 839.1L1051.3 839.1L1046.3 839.5L1041.4 840L1036.5 840.6L1031.7 841.1L1031.7 841.1L1030.2 833.2L1028.4 825.4L1026.5 817.5L1024.3 809.6ZM1066 807.8L1070.8 807.8L1075.6 807.8L1080.2 807.9L1084.6 808.1L1084.6 808.1L1085.9 815.7L1087 823.4L1088.1 831.1L1089.2 838.8L1089.2 838.8L1084.8 838.5L1080.3 838.3L1075.7 838.2L1071 838.2L1071 838.2L1069.9 830.5L1068.7 822.9L1067.4 815.3L1066 807.8ZM1101.4 809L1105.5 809.3L1109.5 809.6L1113.6 809.8L1117.7 810.1L1117.7 810.1L1118.2 818.2L1118.9 826.3L1119.7 834.5L1120.8 842.5L1120.8 842.5L1116.9 842.1L1113.1 841.6L1109.2 841.1L1105.4 840.6L1105.4 840.6L1104.2 832.7L1103.2 824.8L1102.3 816.9L1101.4 809ZM1135 810.7L1139.5 810.8L1144.1 810.8L1148.7 810.7L1153.4 810.7L1153.4 810.7L1153.6 819L1154.1 827.3L1154.8 835.6L1155.7 843.9L1155.7 843.9L1151 844L1146.3 844L1141.7 844L1137.3 843.8L1137.3 843.8L1136.3 835.6L1135.7 827.3L1135.2 819L1135 810.7ZM1171.9 810.1L1176.4 810L1180.9 809.8L1185.3 809.7L1189.6 809.5L1189.6 809.5L1190.4 817.5L1191.5 825.5L1192.7 833.5L1194 841.5L1194 841.5L1189.4 841.8L1184.8 842.2L1180 842.5L1175.2 842.9L1175.2 842.9L1174.1 834.7L1173.1 826.5L1172.4 818.3L1171.9 810.1ZM1208.1 809.4L1213.4 809.5L1218.9 809.6L1224.5 809.8L1230.2 810L1230.2 810L1231.2 817.7L1232.3 825.4L1233.5 833.2L1234.5 841L1234.5 841L1229.1 840.8L1223.6 840.7L1218.3 840.7L1212.9 840.7L1212.9 840.7L1211.6 832.9L1210.3 825L1209.1 817.2L1208.1 809.4ZM736.9 838.7L742.5 838.8L748.1 839L753.6 839.3L759.2 839.6L759.2 839.6L761.5 848L763.9 856.5L766.3 864.9L769 873.4L769 873.4L763.2 872.9L757.3 872.5L751.5 872.2L745.6 872.1L745.6 872.1L743.3 863.6L741.2 855.3L739.1 847L736.9 838.7ZM781.3 841.5L786.8 841.9L792.5 842.4L798.2 842.9L803.9 843.3L803.9 843.3L806.3 852.1L808.9 860.8L811.7 869.4L814.7 878L814.7 878L809 877.5L803.2 876.9L797.5 876.3L791.9 875.7L791.9 875.7L788.9 867.2L786.2 858.6L783.7 850.1L781.3 841.5ZM827.5 844.3L833.5 844.4L839.5 844.4L845.5 844.3L851.4 844.1L851.4 844.1L854 852.8L856.8 861.5L859.6 870.1L862.6 878.7L862.6 878.7L856.5 879L850.5 879.2L844.4 879.2L838.4 879.2L838.4 879.2L835.4 870.6L832.6 861.9L830 853.1L827.5 844.3ZM874.2 842.8L879.2 842.4L883.6 842L887.8 841.6L891.9 841.2L891.9 841.2L894.9 849.6L898 858.1L901 866.6L903.8 875.1L903.8 875.1L899.7 875.5L895.5 876L891.2 876.5L886.1 877.1L886.1 877.1L883.1 868.5L880.1 859.9L877.1 851.4L874.2 842.8ZM907.8 840.3L911.7 840.2L915.7 840.3L919.8 840.4L924 840.5L924 840.5L926.7 848.9L929.2 857.3L931.6 865.7L933.7 874.3L933.7 874.3L929.9 874L926.2 873.9L922.6 873.9L918.9 873.9L918.9 873.9L916.4 865.4L913.6 857L910.7 848.6L907.8 840.3ZM941.5 841.9L946.1 842.4L950.7 842.8L955.4 843.3L960.1 843.7L960.1 843.7L962.4 852.4L964.4 861L966.1 869.5L967.6 878.1L967.6 878.1L963 877.6L958.5 877L954.1 876.5L949.8 876L949.8 876L948.1 867.4L946.2 858.9L943.9 850.4L941.5 841.9ZM978.5 845L983 845.1L987.4 845.1L991.8 845L996.1 844.9L996.1 844.9L998.3 853.6L1000.3 862.3L1002 870.8L1003.7 879.4L1003.7 879.4L999.4 879.6L995 879.7L990.5 879.7L986 879.5L986 879.5L984.5 871L982.8 862.4L980.8 853.7L978.5 845ZM1013.5 843.4L1017.9 842.9L1022.4 842.3L1027 841.7L1031.7 841.1L1031.7 841.1L1033.3 849.5L1034.8 857.9L1036.3 866.4L1038 874.8L1038 874.8L1033.5 875.5L1029.2 876.2L1024.9 876.9L1020.7 877.5L1020.7 877.5L1018.9 869.1L1017.2 860.5L1015.4 852L1013.5 843.4ZM1051.3 839.1L1056.3 838.7L1061.2 838.5L1066.1 838.3L1071 838.2L1071 838.2L1072.2 846.4L1073.4 854.6L1074.9 862.9L1076.5 871.3L1076.5 871.3L1071.5 871.4L1066.6 871.6L1061.6 871.9L1056.7 872.3L1056.7 872.3L1055.2 863.9L1053.8 855.6L1052.5 847.3L1051.3 839.1ZM1089.2 838.8L1093.4 839.2L1097.5 839.6L1101.5 840.1L1105.4 840.6L1105.4 840.6L1106.8 848.9L1108.5 857.4L1110.3 865.8L1112.2 874.2L1112.2 874.2L1108.2 873.6L1104.1 873L1099.8 872.5L1095.4 872.1L1095.4 872.1L1093.6 863.7L1092 855.3L1090.5 847L1089.2 838.8ZM1120.8 842.5L1124.8 843L1128.8 843.3L1133 843.6L1137.3 843.8L1137.3 843.8L1138.6 852.5L1140 861.2L1141.5 869.7L1143 878.3L1143 878.3L1138.9 878L1135 877.6L1131.2 877.2L1127.4 876.6L1127.4 876.6L1125.6 868.2L1123.8 859.7L1122.2 851.1L1120.8 842.5ZM1155.7 843.9L1160.6 843.7L1165.4 843.5L1170.3 843.2L1175.2 842.9L1175.2 842.9L1176.4 851.5L1177.6 860.1L1178.7 868.7L1179.5 877.2L1179.5 877.2L1174.7 877.6L1169.9 877.9L1165.1 878.2L1160.4 878.4L1160.4 878.4L1159.4 869.9L1158.2 861.3L1156.9 852.6L1155.7 843.9ZM1194 841.5L1198.6 841.2L1203 841L1207.6 840.8L1212.9 840.7L1212.9 840.7L1214.2 849.1L1215.4 857.5L1216.4 866L1217.1 874.5L1217.1 874.5L1211.8 874.7L1207.4 874.9L1203 875.2L1198.5 875.6L1198.5 875.6L1197.7 867.1L1196.6 858.5L1195.4 850L1194 841.5ZM769 873.4L774.7 873.9L780.5 874.5L786.2 875.1L791.9 875.7L791.9 875.7L795.1 884.2L798.5 892.7L802.1 901.2L805.8 909.6L805.8 909.6L800 909L794.1 908.5L788.1 907.9L782 907.4L782 907.4L778.4 898.9L775 890.4L771.9 881.9L769 873.4ZM814.7 878L820.6 878.4L826.4 878.8L832.4 879L838.4 879.2L838.4 879.2L841.5 887.7L844.6 896.2L847.7 904.6L850.6 912.9L850.6 912.9L845 912.8L839.4 912.5L833.9 912.2L828.3 911.8L828.3 911.8L824.9 903.4L821.4 895L818 886.5L814.7 878ZM862.6 878.7L868.6 878.4L874.5 878L880.4 877.5L886.1 877.1L886.1 877.1L888.9 885.6L891.5 894.2L893.7 902.7L895.8 911.3L895.8 911.3L890.2 911.7L884.6 912.1L878.9 912.4L873.3 912.7L873.3 912.7L870.9 904.3L868.3 895.8L865.5 887.3L862.6 878.7ZM903.8 875.1L907.7 874.7L911.5 874.3L915.3 874.1L918.9 873.9L918.9 873.9L921.2 882.5L923.3 891.1L925 899.8L926.7 908.6L926.7 908.6L923.3 908.7L919.8 909L916.2 909.2L912.6 909.6L912.6 909.6L910.8 900.9L908.7 892.2L906.4 883.6L903.8 875.1ZM933.7 874.3L937.5 874.6L941.5 875L945.6 875.4L949.8 876L949.8 876L951.2 884.5L952.5 893.1L953.7 901.7L955.1 910.3L955.1 910.3L951.1 909.9L947.3 909.5L943.7 909.2L940.1 908.9L940.1 908.9L938.7 900.2L937.2 891.5L935.5 882.8L933.7 874.3ZM967.6 878.1L972.2 878.6L976.8 879L981.4 879.3L986 879.5L986 879.5L987.4 888L988.8 896.5L990.4 904.9L992.1 913.2L992.1 913.2L987.1 913.1L982.3 912.8L977.4 912.5L972.7 912.1L972.7 912.1L971.3 903.7L970 895.2L968.9 886.7L967.6 878.1ZM1003.7 879.4L1008 879.1L1012.2 878.6L1016.4 878.1L1020.7 877.5L1020.7 877.5L1022.5 886L1024.6 894.4L1026.8 902.8L1029.3 911.1L1029.3 911.1L1024.9 911.7L1020.5 912.1L1015.9 912.6L1011.3 912.9L1011.3 912.9L1009.2 904.6L1007.2 896.3L1005.4 887.8L1003.7 879.4ZM1038 874.8L1042.5 874.1L1047.2 873.4L1051.9 872.8L1056.7 872.3L1056.7 872.3L1058.5 880.7L1060.4 889.2L1062.3 897.8L1064.3 906.3L1064.3 906.3L1059.7 906.8L1055.2 907.3L1050.8 907.9L1046.5 908.5L1046.5 908.5L1044.1 900.1L1041.9 891.6L1039.8 883.2L1038 874.8ZM1076.5 871.3L1081.3 871.3L1086.1 871.4L1090.8 871.7L1095.4 872.1L1095.4 872.1L1097.2 880.5L1099 889L1100.6 897.5L1101.9 906.1L1101.9 906.1L1097.4 905.8L1092.7 905.6L1088 905.5L1083.2 905.4L1083.2 905.4L1081.7 896.8L1079.9 888.2L1078.2 879.7L1076.5 871.3ZM1112.2 874.2L1116.1 874.8L1119.9 875.5L1123.7 876.1L1127.4 876.6L1127.4 876.6L1129.2 885.1L1130.7 893.5L1131.9 901.9L1132.9 910.2L1132.9 910.2L1129.5 909.7L1125.9 909.2L1122.3 908.6L1118.5 908.1L1118.5 908.1L1117.4 899.6L1115.9 891.1L1114.1 882.6L1112.2 874.2ZM1143 878.3L1147.1 878.4L1151.4 878.5L1155.9 878.5L1160.4 878.4L1160.4 878.4L1161.3 886.9L1161.9 895.3L1162.2 903.6L1162.4 911.9L1162.4 911.9L1158.2 912L1154.3 912L1150.4 911.9L1146.7 911.7L1146.7 911.7L1146.2 903.4L1145.3 895.1L1144.3 886.7L1143 878.3ZM1179.5 877.2L1184.4 876.8L1189.1 876.4L1193.9 876L1198.5 875.6L1198.5 875.6L1199 884.1L1199.4 892.7L1199.7 901.2L1200 909.8L1200 909.8L1195.2 910L1190.3 910.4L1185.5 910.7L1180.7 911L1180.7 911L1180.6 902.6L1180.4 894.2L1180.1 885.7L1179.5 877.2ZM1217.1 874.5L1222.4 874.4L1227.5 874.4L1232.7 874.5L1237.8 874.7L1237.8 874.7L1238.5 883.3L1239.2 891.9L1240.1 900.6L1241.1 909.3L1241.1 909.3L1235.9 909.1L1230.6 909L1225.2 909L1219.6 909L1219.6 909L1218.9 900.3L1218.3 891.7L1217.8 883.1L1217.1 874.5Z" fill="#848484"/>
</g>
<clipPath id="meshlow"><path d="M720 496L728 473L745 451L764 421L786 418L811 411L836 403L856 385L876 365L896 350L919 331L941 328L949 345L959 365L964 345L969 353L974 373L999 372L1022 378L1045 383L1065 388L1090 388L1128 388L1150 396L1158 421L1160 486L1162 556L1160 591L1157 633L1160 711L1149 747L1126 776L1089 797L1069 823L1032 836L1009 841L991 838L970 810L959 799L946 846L928 849L907 836L866 820L829 799L808 768L803 737L790 706L785 669L762 646L749 612L738 576L736 560L730 530L725 511Z"/></clipPath>
<g clip-path="url(#meshlow)"><g clip-path="url(#lowrect)"><path d="M1971 1055L-50 914.6M1971 901.6L-50 796.3M1971 809.5L-50 725.3M1971 748.1L-50 677.9M1971 704.2L-50 644.1M1971 671.3L-50 618.7M1971 645.7L-50 598.9M1971 625.3L-50 583.1M1971 608.5L-50 570.2M1971 594.6L-50 559.5M1971 582.8L-50 550.3M1971 572.6L4.9 543.4M1971 563.9L84.6 537.6M1971 556.2L155.9 532.5M1971 549.4L220 527.9M1971 543.4L278.1 523.8M1971 538L330.8 520M1971 533.1L378.9 516.6M1971 528.8L423 513.4M1971 524.8L463.5 510.5M1971 531.6L1928.3 524.4M1971 553.8L1826.1 523.4M1971 590.4L1726.3 522.4M1971 662.4L1628.7 521.5M1971 867.9L1533.3 520.6M1493.2 1110L1440.1 519.7M710.4 1110L1348.9 518.9M-50 1100L1259.7 518M-50 874.5L1172.3 517.2M-50 764L1086.9 516.4M-50 698.4L1003.2 515.6M-50 655L921.3 514.8M-50 624.1L841.1 514.1M-50 600.9L762.5 513.3M-50 583L685.5 512.6M-50 568.7L610 511.9M-50 557L536 511.2M-50 547.3L463.5 510.5" stroke="#3a32b0" stroke-width="1.1" fill="none"/></g></g>
<path d="M286.6 760.5L1921 72.5" stroke="#c8c8c8" stroke-width="1.1" fill="none"/>
<clipPath id="sphclip"><ellipse cx="1588" cy="425" rx="226" ry="215"/></clipPath>
<g clip-path="url(#sphclip)">
<ellipse cx="1588" cy="425" rx="226" ry="215" fill="#1a1a1a"/>
<path d="M1430 639.7L1432.5 639.6L1435.1 639.5L1437.7 639.4L1440.4 639.3L1440.4 639.3L1440.4 639.3L1440.4 639.3L1440.4 639.3L1440.4 639.3L1440.4 639.3L1437.7 639.4L1435.1 639.5L1432.5 639.6L1430 639.7L1430 639.7L1430 639.7L1430 639.7L1430 639.7L1430 639.7ZM1411.8 639.8L1414.1 639.5L1416.5 639.2L1418.9 638.9L1421.5 638.7L1421.5 638.7L1415.4 638L1410.1 637.2L1405.6 636.2L1402.2 635L1402.2 635L1400.8 635.6L1399.4 636.2L1398.1 636.8L1396.9 637.3L1396.9 637.3L1399.1 638.3L1402 639.1L1406.4 639.5L1411.8 639.8ZM1391.4 630.4L1392.7 629.7L1393.9 629L1395.1 628.3L1396.3 627.6L1396.3 627.6L1395.4 624.8L1394.4 621.6L1393.2 617.7L1391.5 613.2L1391.5 613.2L1389.6 613.8L1387.5 614.3L1385.4 614.8L1383 615.2L1383 615.2L1385.9 620L1388.2 624.1L1390 627.6L1391.4 630.4ZM1367.2 587.1L1370.6 587.3L1374 587.3L1377.2 587.3L1380.3 587.1L1380.3 587.1L1376.7 578.5L1373.1 569L1369.8 558.8L1366.8 548L1366.8 548L1363.2 547.7L1359.6 547.4L1355.9 547.1L1352.1 546.6L1352.1 546.6L1355.1 557.7L1358.7 568.2L1362.8 578L1367.2 587.1ZM1346.8 499.8L1350.3 500L1353.7 500.1L1357.1 500.3L1360.5 500.5L1360.5 500.5L1360 488.2L1359.5 476L1358.9 463.9L1358 452.1L1358 452.1L1354.8 452.3L1351.6 452.6L1348.3 453L1345.1 453.5L1345.1 453.5L1345.9 464.7L1346.3 476.3L1346.6 488L1346.8 499.8ZM1338.8 411.3L1342 410.4L1345.2 409.6L1348.3 409L1351.5 408.4L1351.5 408.4L1349.7 398.6L1348.1 389.4L1346.9 380.6L1346.2 372.4L1346.2 372.4L1343 373L1339.8 373.7L1336.7 374.5L1333.7 375.4L1333.7 375.4L1334.5 383.7L1335.6 392.5L1337.1 401.7L1338.8 411.3ZM1333.7 347.1L1336.8 346.6L1340.1 346L1343.5 345.5L1347 345L1347 345L1348 339.2L1349.4 333.8L1351 328.5L1353.1 323.3L1353.1 323.3L1349 323.9L1345.1 324.5L1341.4 325L1337.9 325.4L1337.9 325.4L1336.3 330.5L1335.1 335.7L1334.3 341.2L1333.7 347.1ZM1349.4 305.2L1353.3 304.5L1357.4 303.7L1361.5 302.8L1365.9 301.8L1365.9 301.8L1370.2 295.8L1374.9 289.6L1380 283.1L1385.4 276.4L1385.4 276.4L1381.1 277.8L1376.9 279.1L1372.8 280.3L1368.8 281.4L1368.8 281.4L1363.4 287.7L1358.4 293.8L1353.7 299.7L1349.4 305.2ZM1392.9 254.7L1396.9 253.4L1401 252.1L1405 250.8L1409.1 249.4L1409.1 249.4L1415.6 243.1L1422.3 237.1L1429.2 231.5L1436.2 226.4L1436.2 226.4L1432.5 227.5L1428.7 228.6L1425 229.6L1421.2 230.7L1421.2 230.7L1413.7 236.1L1406.5 242L1399.6 248.2L1392.9 254.7ZM1451.2 214.1L1453.7 213.5L1456.1 212.9L1458.3 212.4L1460.5 212L1460.5 212L1465.3 210L1469.6 208.6L1473.4 207.7L1476.3 207.5L1476.3 207.5L1475.2 207.5L1474 207.6L1472.7 207.7L1471.3 207.8L1471.3 207.8L1467.5 208.4L1462.6 209.7L1457.2 211.6L1451.2 214.1ZM1440.4 639.3L1443.1 639.2L1445.7 639.2L1448.4 639.2L1451.1 639.2L1451.1 639.2L1451.1 639.2L1446.1 639.1L1439 638.7L1432.2 638L1432.2 638L1429.4 638.1L1426.7 638.3L1424.1 638.5L1421.5 638.7L1421.5 638.7L1428.1 639.2L1435.2 639.3L1440.4 639.3L1440.4 639.3ZM1402.2 635L1403.8 634.4L1405.8 633.8L1407.9 633.3L1410.1 632.7L1410.1 632.7L1406.4 631L1403.7 629.1L1402.1 626.9L1401 624.4L1401 624.4L1399.8 625.2L1398.6 626L1397.5 626.8L1396.3 627.6L1396.3 627.6L1397.2 629.9L1398.4 631.9L1400 633.6L1402.2 635ZM1391.5 613.2L1393.3 612.5L1395 611.8L1396.6 611L1398.1 610.2L1398.1 610.2L1397 605.2L1395.4 599.5L1393.4 593L1391 585.6L1391 585.6L1388.6 586.1L1386 586.6L1383.2 586.9L1380.3 587.1L1380.3 587.1L1383.7 594.9L1386.8 601.9L1389.4 607.9L1391.5 613.2ZM1366.8 548L1370.3 548.1L1373.6 548.2L1376.9 548.2L1379.9 548.1L1379.9 548.1L1377.6 537L1375.7 525.4L1374.3 513.4L1373.3 501.2L1373.3 501.2L1370.2 501L1367 500.8L1363.8 500.6L1360.5 500.5L1360.5 500.5L1361.3 512.7L1362.6 524.8L1364.4 536.6L1366.8 548ZM1358 452.1L1361.1 452L1364.2 451.9L1367.1 452L1370 452.1L1370 452.1L1368.8 440.4L1367.2 429L1365.5 418L1363.7 407.6L1363.7 407.6L1360.7 407.6L1357.6 407.7L1354.6 408L1351.5 408.4L1351.5 408.4L1353.4 418.7L1355.2 429.4L1356.7 440.6L1358 452.1ZM1346.2 372.4L1349.4 372L1352.6 371.6L1355.9 371.4L1359.2 371.3L1359.2 371.3L1359.3 363.6L1359.9 356.4L1360.8 349.7L1362.2 343.4L1362.2 343.4L1358.2 343.8L1354.4 344.1L1350.7 344.5L1347 345L1347 345L1346.3 351.1L1345.9 357.7L1345.8 364.8L1346.2 372.4ZM1353.1 323.3L1357.3 322.7L1361.6 322L1366 321.3L1370.6 320.6L1370.6 320.6L1373.5 315L1376.7 309.2L1380.3 303.3L1384.2 297.1L1384.2 297.1L1379.5 298.4L1374.9 299.6L1370.3 300.7L1365.9 301.8L1365.9 301.8L1362 307.5L1358.5 312.9L1355.6 318.2L1353.1 323.3ZM1385.4 276.4L1389.7 275L1394.1 273.6L1398.6 272.1L1403 270.5L1403 270.5L1408.4 263.7L1413.9 256.9L1419.6 250.2L1425.6 243.9L1425.6 243.9L1421.5 245.3L1417.4 246.7L1413.2 248.1L1409.1 249.4L1409.1 249.4L1402.9 256L1396.8 262.8L1391 269.6L1385.4 276.4ZM1436.2 226.4L1439.9 225.4L1443.5 224.4L1447 223.4L1450 222.5L1450 222.5L1454.9 218.6L1459.6 215.3L1464.1 212.7L1468.1 210.6L1468.1 210.6L1466.4 210.9L1464.5 211.2L1462.6 211.5L1460.5 212L1460.5 212L1455.3 214.6L1449.8 217.9L1443.3 221.8L1436.2 226.4ZM1476.3 207.5L1477.5 207.5L1478.5 207.5L1479.5 207.5L1480.5 207.6L1480.5 207.6L1480.5 207.6L1480.5 207.6L1480.5 207.6L1480.5 207.6L1480.5 207.6L1479.5 207.5L1478.5 207.5L1477.5 207.5L1476.3 207.5L1476.3 207.5L1476.3 207.5L1476.3 207.5L1476.3 207.5L1476.3 207.5ZM1451.1 639.2L1453.8 639.2L1456.5 639.2L1459.2 639.2L1461.8 639.3L1461.8 639.3L1461.8 639.3L1461.8 639.3L1461.8 639.3L1461.8 639.3L1461.8 639.3L1459.2 639.2L1456.5 639.2L1453.8 639.2L1451.1 639.2L1451.1 639.2L1451.1 639.2L1451.1 639.2L1451.1 639.2L1451.1 639.2ZM1432.2 638L1435 637.9L1437.9 637.7L1440.8 637.7L1443.7 637.6L1443.7 637.6L1437.2 636.4L1431 634.8L1425.2 633L1420 631L1420 631L1417.4 631.3L1414.8 631.8L1412.4 632.2L1410.1 632.7L1410.1 632.7L1414.6 634.3L1419.9 635.7L1425.8 637L1432.2 638ZM1401 624.4L1402.3 623.5L1403.6 622.7L1405 621.9L1406.5 621.1L1406.5 621.1L1405.3 618L1404.6 614.5L1404 610.7L1403.5 606.4L1403.5 606.4L1402.2 607.4L1400.9 608.4L1399.6 609.3L1398.1 610.2L1398.1 610.2L1399 614.5L1399.6 618.3L1400.2 621.5L1401 624.4ZM1391 585.6L1393.3 585L1395.5 584.3L1397.5 583.6L1399.4 582.8L1399.4 582.8L1397.5 575L1395.4 566.5L1393.1 557.2L1390.9 547.2L1390.9 547.2L1388.4 547.5L1385.7 547.8L1382.9 548L1379.9 548.1L1379.9 548.1L1382.6 558.6L1385.5 568.4L1388.3 577.4L1391 585.6ZM1373.3 501.2L1376.2 501.4L1379.1 501.5L1381.8 501.7L1384.4 501.8L1384.4 501.8L1383.5 489.7L1382.7 477.5L1381.8 465.4L1380.8 453.5L1380.8 453.5L1378.3 453L1375.6 452.6L1372.9 452.3L1370 452.1L1370 452.1L1371 464.2L1371.8 476.4L1372.5 488.8L1373.3 501.2ZM1363.7 407.6L1366.6 407.7L1369.5 408L1372.3 408.4L1375.1 409L1375.1 409L1373.8 399L1372.9 389.5L1372.4 380.5L1372.6 372L1372.6 372L1369.2 371.7L1365.9 371.4L1362.6 371.3L1359.2 371.3L1359.2 371.3L1359.7 379.5L1360.6 388.3L1362 397.7L1363.7 407.6ZM1362.2 343.4L1366.2 343.2L1370.3 343L1374.4 342.8L1378.5 342.7L1378.5 342.7L1381 336.2L1383.6 329.8L1386.4 323.6L1389.4 317.4L1389.4 317.4L1384.6 318.2L1379.9 319L1375.2 319.8L1370.6 320.6L1370.6 320.6L1368 326.1L1365.8 331.7L1363.8 337.5L1362.2 343.4ZM1384.2 297.1L1388.9 295.8L1393.7 294.4L1398.5 293L1403.3 291.6L1403.3 291.6L1407.3 284.8L1411.6 277.9L1416 271L1420.7 264.1L1420.7 264.1L1416.4 265.7L1412 267.3L1407.5 268.9L1403 270.5L1403 270.5L1397.9 277.4L1393.1 284.1L1388.5 290.7L1384.2 297.1ZM1425.6 243.9L1429.6 242.5L1433.6 241.1L1437.5 239.7L1441.3 238.4L1441.3 238.4L1446.8 232.8L1451.5 227.8L1455.8 223.4L1460 219.6L1460 219.6L1457.7 220.2L1455.2 220.9L1452.7 221.6L1450 222.5L1450 222.5L1444.1 227L1437.9 232.2L1431.6 237.8L1425.6 243.9ZM1468.1 210.6L1469.8 210.4L1471.4 210.2L1472.9 210L1474.3 209.9L1474.3 209.9L1477.1 208.8L1479.8 208.1L1482.1 207.9L1484.1 208.1L1484.1 208.1L1483.2 207.9L1482.3 207.8L1481.4 207.7L1480.5 207.6L1480.5 207.6L1478.2 207.6L1475.2 208.1L1471.8 209.1L1468.1 210.6ZM1461.8 639.3L1464.5 639.3L1467.1 639.4L1469.7 639.4L1472.2 639.5L1472.2 639.5L1472.2 639.5L1468 639.3L1461.8 638.6L1455.5 637.6L1455.5 637.6L1452.5 637.5L1449.6 637.5L1446.6 637.6L1443.7 637.6L1443.7 637.6L1450.4 638.5L1457.1 639.1L1461.8 639.3L1461.8 639.3ZM1420 631L1422.8 630.6L1425.6 630.3L1428.5 630L1431.5 629.8L1431.5 629.8L1426.4 627.1L1421.9 624.2L1418.1 621.1L1414.9 617.8L1414.9 617.8L1412.6 618.6L1410.4 619.3L1408.4 620.2L1406.5 621.1L1406.5 621.1L1408.7 623.8L1411.7 626.3L1415.5 628.7L1420 631ZM1403.5 606.4L1404.8 605.3L1406.1 604.3L1407.4 603.2L1408.7 602.1L1408.7 602.1L1408.1 597.1L1407.5 591.7L1406.8 585.6L1405.8 578.8L1405.8 578.8L1404.3 579.9L1402.8 580.9L1401.1 581.9L1399.4 582.8L1399.4 582.8L1400.9 589.7L1402.1 596L1402.9 601.5L1403.5 606.4ZM1390.9 547.2L1393.2 546.7L1395.4 546.3L1397.5 545.7L1399.4 545.1L1399.4 545.1L1397.7 535L1396.1 524.5L1394.8 513.5L1393.7 502.2L1393.7 502.2L1391.5 502.1L1389.3 502L1386.9 501.9L1384.4 501.8L1384.4 501.8L1385.6 513.7L1387 525.3L1388.8 536.5L1390.9 547.2ZM1380.8 453.5L1383.3 454L1385.7 454.5L1388 455.2L1390.3 455.9L1390.3 455.9L1389.3 444.5L1388.1 433.5L1386.9 422.7L1385.8 412.3L1385.8 412.3L1383.2 411.3L1380.6 410.4L1377.9 409.6L1375.1 409L1375.1 409L1376.7 419.5L1378.2 430.4L1379.6 441.8L1380.8 453.5ZM1372.6 372L1375.9 372.5L1379.2 373.1L1382.5 373.8L1385.8 374.6L1385.8 374.6L1387.3 366.2L1389.4 358.1L1392 350.3L1395 342.7L1395 342.7L1390.9 342.6L1386.8 342.6L1382.7 342.6L1378.5 342.7L1378.5 342.7L1376.4 349.5L1374.6 356.6L1373.3 364.1L1372.6 372ZM1389.4 317.4L1394.1 316.5L1398.8 315.7L1403.5 314.8L1408 314L1408 314L1411.3 306.9L1414.7 299.9L1418.1 292.8L1421.7 285.6L1421.7 285.6L1417.2 287.1L1412.6 288.6L1408 290.1L1403.3 291.6L1403.3 291.6L1399.5 298.2L1395.9 304.7L1392.5 311.1L1389.4 317.4ZM1420.7 264.1L1425 262.5L1429.3 260.8L1433.4 259.2L1437.4 257.7L1437.4 257.7L1441.7 251.1L1446.2 244.8L1450.5 238.9L1454.1 233.7L1454.1 233.7L1451.5 234.7L1448.7 235.8L1445.1 237L1441.3 238.4L1441.3 238.4L1436 244.4L1430.7 250.7L1425.6 257.3L1420.7 264.1ZM1460 219.6L1462.2 219.1L1464.2 218.6L1466.1 218.2L1468 217.9L1468 217.9L1471 215.2L1474 213L1476.7 211.3L1479.2 210L1479.2 210L1478 209.9L1476.8 209.9L1475.6 209.9L1474.3 209.9L1474.3 209.9L1471.1 211.6L1467.6 213.7L1463.9 216.4L1460 219.6ZM1484.1 208.1L1484.9 208.3L1485.7 208.4L1486.5 208.6L1487.3 208.9L1487.3 208.9L1487.3 208.9L1487.3 208.9L1487.3 208.9L1487.3 208.9L1487.3 208.9L1486.5 208.6L1485.7 208.4L1484.9 208.3L1484.1 208.1L1484.1 208.1L1484.1 208.1L1484.1 208.1L1484.1 208.1L1484.1 208.1ZM1472.2 639.5L1474.8 639.6L1477.3 639.7L1479.8 639.8L1482.2 639.9L1482.2 639.9L1482.2 639.9L1482.2 639.9L1482.2 639.9L1482.2 639.9L1482.2 639.9L1479.8 639.8L1477.3 639.7L1474.8 639.6L1472.2 639.5L1472.2 639.5L1472.2 639.5L1472.2 639.5L1472.2 639.5L1472.2 639.5ZM1455.5 637.6L1458.4 637.6L1461.4 637.6L1464.3 637.7L1467.2 637.8L1467.2 637.8L1461.4 636.2L1455.5 634.3L1449.7 631.9L1444.1 629.3L1444.1 629.3L1440.9 629.3L1437.7 629.5L1434.5 629.6L1431.5 629.8L1431.5 629.8L1437 632.2L1443 634.3L1449.2 636.1L1455.5 637.6ZM1414.9 617.8L1417.4 617.2L1420 616.6L1422.7 616L1425.6 615.5L1425.6 615.5L1422.3 611.4L1419.5 607.1L1417.3 602.5L1415.6 597.7L1415.6 597.7L1413.5 598.7L1411.6 599.9L1410.1 601L1408.7 602.1L1408.7 602.1L1409.3 606.6L1410.5 610.6L1412.4 614.3L1414.9 617.8ZM1405.8 578.8L1407.2 577.7L1408.6 576.6L1409.9 575.4L1411.3 574.2L1411.3 574.2L1410.2 567L1409 559.3L1407.6 551L1406.2 542.1L1406.2 542.1L1404.6 542.9L1403 543.7L1401.3 544.4L1399.4 545.1L1399.4 545.1L1401.2 554.5L1402.9 563.3L1404.5 571.4L1405.8 578.8ZM1393.7 502.2L1395.7 502.2L1397.7 502.2L1399.5 502.2L1401.3 502.2L1401.3 502.2L1400.5 491.5L1399.9 480.7L1399.2 469.9L1398.6 459.1L1398.6 459.1L1396.6 458.2L1394.6 457.4L1392.5 456.6L1390.3 455.9L1390.3 455.9L1391.2 467.4L1392 479L1392.8 490.6L1393.7 502.2ZM1385.8 412.3L1388.4 413.4L1390.9 414.6L1393.4 415.9L1395.8 417.3L1395.8 417.3L1395.5 407.3L1395.8 397.6L1396.7 388.1L1398.3 378.8L1398.3 378.8L1395.3 377.6L1392.2 376.5L1389 375.5L1385.8 374.6L1385.8 374.6L1384.9 383.5L1384.7 392.7L1385 402.3L1385.8 412.3ZM1395 342.7L1399 342.9L1402.9 343L1406.7 343.3L1410.4 343.6L1410.4 343.6L1414.1 335.2L1417.9 326.9L1421.5 318.8L1425.1 310.8L1425.1 310.8L1421 311.5L1416.8 312.3L1412.5 313.2L1408 314L1408 314L1404.7 321.1L1401.4 328.2L1398.1 335.4L1395 342.7ZM1421.7 285.6L1426 284.1L1430.3 282.6L1434.3 281.2L1438.2 279.7L1438.2 279.7L1441.5 272.4L1444.9 265.2L1448.4 258.3L1451.4 251.8L1451.4 251.8L1448.7 253.1L1445.1 254.6L1441.3 256.1L1437.4 257.7L1437.4 257.7L1433.2 264.5L1429.2 271.4L1425.3 278.5L1421.7 285.6ZM1454.1 233.7L1456.6 232.8L1459 232L1461.1 231.3L1463.2 230.8L1463.2 230.8L1466 226.7L1468.9 223.1L1471.6 219.9L1474.2 217.2L1474.2 217.2L1472.8 217.3L1471.3 217.4L1469.7 217.6L1468 217.9L1468 217.9L1464.7 221.1L1461.3 224.7L1457.7 229L1454.1 233.7ZM1479.2 210L1480.3 210.1L1481.3 210.2L1482.3 210.3L1483.3 210.5L1483.3 210.5L1485.3 209.8L1487.2 209.5L1489 209.5L1490.6 209.8L1490.6 209.8L1489.8 209.6L1489 209.3L1488.1 209.1L1487.3 208.9L1487.3 208.9L1485.6 208.6L1483.6 208.6L1481.5 209.1L1479.2 210ZM1482.2 639.9L1484.7 640L1487.1 640.1L1489.5 640.2L1491.8 640.3L1491.8 640.3L1491.8 640.3L1488.6 640L1483.9 639.3L1479 638.1L1479 638.1L1476.1 638L1473.2 637.9L1470.2 637.8L1467.2 637.8L1467.2 637.8L1472.9 638.9L1478.4 639.6L1482.2 639.9L1482.2 639.9ZM1444.1 629.3L1447.5 629.2L1451 629.2L1454.4 629.2L1457.9 629.2L1457.9 629.2L1452.7 626L1447.6 622.4L1442.9 618.4L1438.6 614.2L1438.6 614.2L1435.2 614.4L1431.9 614.7L1428.7 615.1L1425.6 615.5L1425.6 615.5L1429.4 619.4L1433.9 622.9L1438.8 626.3L1444.1 629.3ZM1415.6 597.7L1417.9 596.6L1420.4 595.7L1423 594.9L1425.7 594.1L1425.7 594.1L1423.6 588.4L1421.7 582.3L1419.9 575.9L1418.3 569.2L1418.3 569.2L1416.2 570.4L1414.3 571.7L1412.8 573L1411.3 574.2L1411.3 574.2L1412.2 580.8L1413 586.9L1414.2 592.5L1415.6 597.7ZM1406.2 542.1L1407.7 541.2L1409.2 540.3L1410.7 539.3L1412.2 538.3L1412.2 538.3L1410.9 529.6L1409.8 520.6L1408.8 511.3L1408 501.8L1408 501.8L1406.4 501.9L1404.7 502L1403 502.1L1401.3 502.2L1401.3 502.2L1402.2 512.7L1403.4 522.9L1404.7 532.7L1406.2 542.1ZM1398.6 459.1L1400.6 460L1402.6 460.9L1404.5 461.8L1406.4 462.7L1406.4 462.7L1406.1 452.9L1405.7 443.1L1405.5 433.3L1405.4 423.5L1405.4 423.5L1403.1 421.9L1400.7 420.3L1398.3 418.8L1395.8 417.3L1395.8 417.3L1396.4 427.5L1397.1 437.8L1397.9 448.4L1398.6 459.1ZM1398.3 378.8L1401.4 380.1L1404.3 381.4L1407.2 382.8L1410 384.3L1410 384.3L1412.7 374.4L1416.1 364.6L1419.9 354.8L1424 345.2L1424 345.2L1420.9 344.7L1417.6 344.3L1414.1 343.9L1410.4 343.6L1410.4 343.6L1406.8 352.1L1403.4 360.8L1400.6 369.7L1398.3 378.8ZM1425.1 310.8L1429 310L1432.8 309.2L1436.3 308.5L1439.6 307.8L1439.6 307.8L1443 299L1446.2 290.5L1448.9 282.3L1451.3 274.6L1451.3 274.6L1448.9 275.6L1445.6 276.9L1442 278.3L1438.2 279.7L1438.2 279.7L1435 287.3L1431.7 295L1428.4 302.8L1425.1 310.8ZM1451.4 251.8L1454 250.7L1456.4 249.7L1458.5 248.9L1460.5 248.2L1460.5 248.2L1462.9 242.8L1465.3 237.9L1467.7 233.4L1470.1 229.4L1470.1 229.4L1468.6 229.6L1466.9 229.9L1465.1 230.3L1463.2 230.8L1463.2 230.8L1460.2 235.3L1457.3 240.4L1454.3 245.9L1451.4 251.8ZM1474.2 217.2L1475.6 217.3L1476.9 217.3L1478.1 217.4L1479.3 217.6L1479.3 217.6L1481.4 215.6L1483.4 213.9L1485.3 212.6L1487.2 211.6L1487.2 211.6L1486.2 211.3L1485.3 211L1484.3 210.8L1483.3 210.5L1483.3 210.5L1481.2 211.6L1479 213.1L1476.7 215L1474.2 217.2ZM1490.6 209.8L1491.6 210.1L1492.5 210.3L1493.4 210.6L1494.4 210.8L1494.4 210.8L1494.4 210.8L1494.4 210.8L1494.4 210.8L1494.4 210.8L1494.4 210.8L1493.4 210.6L1492.5 210.3L1491.6 210.1L1490.6 209.8L1490.6 209.8L1490.6 209.8L1490.6 209.8L1490.6 209.8L1490.6 209.8ZM1491.8 640.3L1494.2 640.4L1496.4 640.5L1498.7 640.6L1500.8 640.6L1500.8 640.6L1500.8 640.6L1500.8 640.6L1500.8 640.6L1500.8 640.6L1500.8 640.6L1498.7 640.6L1496.4 640.5L1494.2 640.4L1491.8 640.3L1491.8 640.3L1491.8 640.3L1491.8 640.3L1491.8 640.3L1491.8 640.3ZM1479 638.1L1481.9 638.3L1484.7 638.4L1487.5 638.5L1490.3 638.6L1490.3 638.6L1486 637.1L1481.5 635.1L1476.8 632.6L1472.1 629.7L1472.1 629.7L1468.6 629.5L1465.1 629.4L1461.5 629.3L1457.9 629.2L1457.9 629.2L1463.2 632.1L1468.5 634.5L1473.8 636.6L1479 638.1ZM1438.6 614.2L1442.3 614L1446 613.9L1449.8 613.8L1453.6 613.9L1453.6 613.9L1449.5 608.9L1445.7 603.6L1442.2 598L1439 592.1L1439 592.1L1435.4 592.4L1432.1 592.9L1428.8 593.4L1425.7 594.1L1425.7 594.1L1428.3 599.6L1431.3 604.7L1434.7 609.6L1438.6 614.2ZM1418.3 569.2L1420.7 568L1423.2 567L1425.9 566.1L1428.8 565.3L1428.8 565.3L1426.6 557.9L1424.5 550.2L1422.5 542.4L1420.6 534.3L1420.6 534.3L1418.2 535.2L1416 536.2L1414 537.3L1412.2 538.3L1412.2 538.3L1413.6 546.7L1415.2 554.6L1416.7 562.1L1418.3 569.2ZM1408 501.8L1409.7 501.6L1411.4 501.4L1413.3 501.1L1415.4 500.8L1415.4 500.8L1414.9 492.3L1414.6 483.7L1414.5 475.1L1414.4 466.4L1414.4 466.4L1412.3 465.5L1410.4 464.6L1408.4 463.7L1406.4 462.7L1406.4 462.7L1406.7 472.6L1407 482.4L1407.4 492.1L1408 501.8ZM1405.4 423.5L1407.8 425.2L1410.1 426.9L1412.5 428.6L1414.8 430.3L1414.8 430.3L1415.3 420.7L1416.3 410.9L1417.9 400.8L1420.2 390.4L1420.2 390.4L1417.8 388.9L1415.3 387.3L1412.7 385.8L1410 384.3L1410 384.3L1407.9 394.1L1406.4 403.9L1405.7 413.7L1405.4 423.5ZM1424 345.2L1427 345.7L1429.8 346.2L1432.3 346.8L1434.4 347.5L1434.4 347.5L1438.4 336.8L1442.3 326.3L1445.9 316L1449.1 306.2L1449.1 306.2L1447.3 306.4L1445.2 306.7L1442.7 307.2L1439.6 307.8L1439.6 307.8L1436 316.9L1432.1 326.1L1428.1 335.6L1424 345.2ZM1451.3 274.6L1453.6 273.7L1455.6 273L1457.4 272.3L1459 271.9L1459 271.9L1461 264.7L1463 258.2L1465 252.2L1467 246.7L1467 246.7L1465.6 246.9L1464.1 247.2L1462.4 247.6L1460.5 248.2L1460.5 248.2L1458.2 254.1L1455.9 260.5L1453.6 267.3L1451.3 274.6ZM1470.1 229.4L1471.6 229.3L1473 229.4L1474.3 229.5L1475.5 229.7L1475.5 229.7L1477.7 226.5L1479.8 223.6L1481.8 221.1L1483.8 218.9L1483.8 218.9L1482.7 218.5L1481.6 218.2L1480.5 217.9L1479.3 217.6L1479.3 217.6L1477.1 220L1474.8 222.7L1472.5 225.9L1470.1 229.4ZM1487.2 211.6L1488.2 211.9L1489.2 212.2L1490.3 212.5L1491.4 212.9L1491.4 212.9L1493.3 212.1L1495.2 211.7L1497.2 211.6L1499 211.8L1499 211.8L1497.8 211.6L1496.6 211.3L1495.5 211.1L1494.4 210.8L1494.4 210.8L1492.7 210.5L1490.9 210.5L1489 210.9L1487.2 211.6ZM1500.8 640.6L1503 640.7L1505.2 640.8L1507.2 640.9L1509.2 641L1509.2 641L1509.2 641L1507.2 640.8L1504.1 640.2L1500.8 639.1L1500.8 639.1L1498.3 639L1495.7 638.9L1493 638.8L1490.3 638.6L1490.3 638.6L1494.3 639.8L1498.2 640.4L1500.8 640.6L1500.8 640.6ZM1472.1 629.7L1475.7 629.9L1479.2 630L1482.7 630.2L1486.1 630.5L1486.1 630.5L1482.1 627.1L1478 623.4L1473.9 619.1L1469.9 614.5L1469.9 614.5L1465.8 614.2L1461.8 614.1L1457.7 613.9L1453.6 613.9L1453.6 613.9L1458 618.4L1462.6 622.6L1467.3 626.3L1472.1 629.7ZM1439 592.1L1442.8 591.8L1446.8 591.7L1450.9 591.6L1455.1 591.7L1455.1 591.7L1451.8 585L1448.8 578.1L1445.8 570.8L1443 563.3L1443 563.3L1439.2 563.6L1435.5 564L1432 564.6L1428.8 565.3L1428.8 565.3L1431.1 572.4L1433.5 579.2L1436.1 585.8L1439 592.1ZM1420.6 534.3L1423.3 533.5L1426.3 532.7L1429.4 532.1L1432.8 531.5L1432.8 531.5L1430.8 523.4L1429 515.4L1427.6 507.4L1426.6 499.5L1426.6 499.5L1423.4 499.8L1420.6 500.2L1417.9 500.5L1415.4 500.8L1415.4 500.8L1416.3 509.3L1417.4 517.8L1418.9 526.1L1420.6 534.3ZM1414.4 466.4L1416.9 467.1L1419.6 467.7L1422.5 468.2L1425.6 468.6L1425.6 468.6L1425.6 460.7L1425.7 452.7L1425.8 444.3L1425.9 435.5L1425.9 435.5L1423 434.5L1420.1 433.3L1417.4 431.9L1414.8 430.3L1414.8 430.3L1414.5 439.6L1414.4 448.7L1414.4 457.6L1414.4 466.4ZM1420.2 390.4L1422.6 392L1425 393.3L1427.4 394.5L1429.9 395.6L1429.9 395.6L1432.2 384.5L1435 373.1L1438.3 361.5L1441.8 349.9L1441.8 349.9L1440.1 349.4L1438.3 348.8L1436.4 348.1L1434.4 347.5L1434.4 347.5L1430.3 358.3L1426.5 369.1L1423.1 379.8L1420.2 390.4ZM1449.1 306.2L1450.8 306.1L1452.3 306L1453.7 306L1455.1 306.1L1455.1 306.1L1457.7 296.5L1460.1 287.4L1462.3 279.1L1464.3 271.5L1464.3 271.5L1463.1 271.4L1461.9 271.4L1460.5 271.6L1459 271.9L1459 271.9L1456.9 279.6L1454.6 288L1452 296.8L1449.1 306.2ZM1467 246.7L1468.4 246.7L1469.7 246.8L1470.9 247.1L1472.2 247.4L1472.2 247.4L1474.2 242.8L1476.3 238.6L1478.4 234.9L1480.5 231.4L1480.5 231.4L1479.2 230.9L1478 230.4L1476.8 230L1475.5 229.7L1475.5 229.7L1473.4 233.3L1471.2 237.3L1469.1 241.8L1467 246.7ZM1483.8 218.9L1485 219.3L1486.2 219.7L1487.4 220.2L1488.7 220.7L1488.7 220.7L1490.6 218.7L1492.6 216.9L1494.5 215.4L1496.5 214.2L1496.5 214.2L1495.1 213.9L1493.8 213.6L1492.6 213.2L1491.4 212.9L1491.4 212.9L1489.5 213.9L1487.7 215.3L1485.8 216.9L1483.8 218.9ZM1499 211.8L1500.3 212L1501.7 212.2L1503.2 212.4L1504.7 212.6L1504.7 212.6L1504.7 212.6L1504.7 212.6L1504.7 212.6L1504.7 212.6L1504.7 212.6L1503.2 212.4L1501.7 212.2L1500.3 212L1499 211.8L1499 211.8L1499 211.8L1499 211.8L1499 211.8L1499 211.8ZM1509.2 641L1511.3 641L1513.3 641.1L1515.2 641.1L1517.1 641.1L1517.1 641.1L1517.1 641.1L1517.1 641.1L1517.1 641.1L1517.1 641.1L1517.1 641.1L1515.2 641.1L1513.3 641.1L1511.3 641L1509.2 641L1509.2 641L1509.2 641L1509.2 641L1509.2 641L1509.2 641ZM1500.8 639.1L1503.3 639.3L1505.8 639.4L1508.2 639.5L1510.4 639.5L1510.4 639.5L1507.8 638.2L1505.1 636.3L1502.2 634.1L1499.2 631.3L1499.2 631.3L1496.1 631.1L1492.9 630.9L1489.5 630.7L1486.1 630.5L1486.1 630.5L1490 633.3L1493.8 635.7L1497.4 637.7L1500.8 639.1ZM1469.9 614.5L1474.1 614.8L1478.2 615.1L1482.3 615.4L1486.3 615.8L1486.3 615.8L1482.9 610.7L1479.6 605.2L1476.3 599.2L1473.1 592.8L1473.1 592.8L1468.6 592.4L1464 592.1L1459.5 591.8L1455.1 591.7L1455.1 591.7L1458.5 598L1462.1 603.9L1465.9 609.4L1469.9 614.5ZM1443 563.3L1447.2 563.1L1451.6 563.1L1456.1 563.2L1460.8 563.4L1460.8 563.4L1457.8 555.3L1454.9 547.1L1452 538.8L1449.3 530.5L1449.3 530.5L1444.9 530.6L1440.7 530.8L1436.6 531.1L1432.8 531.5L1432.8 531.5L1435.2 539.6L1437.7 547.6L1440.3 555.5L1443 563.3ZM1426.6 499.5L1430 499.2L1433.8 498.9L1437.7 498.6L1441.9 498.3L1441.9 498.3L1441 490.8L1440.6 483.4L1440.4 476.1L1440.4 468.8L1440.4 468.8L1436.4 468.9L1432.6 468.9L1429 468.8L1425.6 468.6L1425.6 468.6L1425.5 476.3L1425.6 484L1425.9 491.7L1426.6 499.5ZM1425.9 435.5L1429.2 436.3L1432.6 437L1436.2 437.4L1440 437.6L1440 437.6L1439.8 428.6L1439.8 419L1440.2 408.9L1441 398.1L1441 398.1L1438.1 397.7L1435.2 397.2L1432.5 396.5L1429.9 395.6L1429.9 395.6L1428.2 406.3L1427 416.5L1426.3 426.3L1425.9 435.5ZM1441.8 349.9L1443.6 350.4L1445.4 350.8L1447.3 351.2L1449.4 351.6L1449.4 351.6L1452.3 339.9L1455.2 328.5L1458.1 317.6L1460.8 307.3L1460.8 307.3L1459.2 306.9L1457.8 306.6L1456.4 306.3L1455.1 306.1L1455.1 306.1L1452.1 316.4L1448.8 327.2L1445.3 338.4L1441.8 349.9ZM1464.3 271.5L1465.6 271.7L1466.9 272.1L1468.3 272.6L1469.9 273.1L1469.9 273.1L1471.9 266.4L1473.9 260.4L1475.9 254.9L1477.9 249.9L1477.9 249.9L1476.3 249.2L1474.9 248.5L1473.5 247.9L1472.2 247.4L1472.2 247.4L1470.2 252.6L1468.2 258.2L1466.3 264.5L1464.3 271.5ZM1480.5 231.4L1481.9 232.1L1483.3 232.7L1484.8 233.4L1486.4 234.1L1486.4 234.1L1488.5 230.9L1490.6 227.9L1492.7 225.2L1494.8 222.7L1494.8 222.7L1493.1 222.2L1491.5 221.7L1490.1 221.2L1488.7 220.7L1488.7 220.7L1486.7 223L1484.7 225.5L1482.6 228.3L1480.5 231.4ZM1496.5 214.2L1498 214.6L1499.6 214.9L1501.2 215.2L1503 215.4L1503 215.4L1505.1 214.3L1507.3 213.6L1509.5 213.1L1511.6 213.1L1511.6 213.1L1509.7 213L1508 212.9L1506.3 212.8L1504.7 212.6L1504.7 212.6L1502.7 212.5L1500.6 212.8L1498.5 213.4L1496.5 214.2ZM1517.1 641.1L1519 641.1L1520.9 641.1L1522.7 641.1L1524.6 641.1L1524.6 641.1L1524.6 641.1L1523.2 641L1521.3 640.5L1519.3 639.7L1519.3 639.7L1517.2 639.7L1515 639.7L1512.8 639.6L1510.4 639.5L1510.4 639.5L1513 640.5L1515.4 641L1517.1 641.1L1517.1 641.1ZM1499.2 631.3L1502.3 631.5L1505.4 631.7L1508.3 631.9L1511.1 632.1L1511.1 632.1L1508.8 629.1L1506.5 625.6L1504.2 621.7L1501.8 617.3L1501.8 617.3L1498.1 616.9L1494.3 616.6L1490.3 616.2L1486.3 615.8L1486.3 615.8L1489.6 620.4L1492.9 624.5L1496.1 628.1L1499.2 631.3ZM1473.1 592.8L1477.9 593.3L1482.6 593.8L1487.2 594.4L1491.7 594.9L1491.7 594.9L1489.1 588.2L1486.5 580.9L1483.8 573.3L1481 565.3L1481 565.3L1475.9 564.7L1470.8 564.2L1465.8 563.8L1460.8 563.4L1460.8 563.4L1463.8 571.2L1466.9 578.8L1470 586L1473.1 592.8ZM1449.3 530.5L1454.2 530.5L1459.1 530.6L1464.2 530.8L1469.4 531.1L1469.4 531.1L1466.8 522.5L1464.4 513.9L1462.5 505.6L1460.9 497.5L1460.9 497.5L1456 497.7L1451.1 497.8L1446.4 498.1L1441.9 498.3L1441.9 498.3L1443.1 506.1L1444.8 514L1446.9 522.2L1449.3 530.5ZM1440.4 468.8L1444.8 468.6L1449.3 468.3L1453.9 467.9L1458.6 467.4L1458.6 467.4L1458.4 460.1L1458.1 452.6L1457.7 444.8L1457.1 436.6L1457.1 436.6L1452.6 437.1L1448.3 437.4L1444 437.6L1440 437.6L1440 437.6L1440.2 446L1440.3 453.9L1440.4 461.5L1440.4 468.8ZM1441 398.1L1444.3 398.3L1447.8 398.3L1451.4 398.2L1455.2 398L1455.2 398L1455.6 387L1456.6 375.6L1458.1 364L1460 352.4L1460 352.4L1457 352.3L1454.2 352.1L1451.7 351.9L1449.4 351.6L1449.4 351.6L1446.7 363.4L1444.3 375.2L1442.4 386.8L1441 398.1ZM1460.8 307.3L1462.6 307.7L1464.7 308.2L1467 308.7L1469.6 309.3L1469.6 309.3L1472 300L1474.3 291.3L1476.4 283.5L1478.4 276.3L1478.4 276.3L1475.9 275.4L1473.6 274.6L1471.6 273.8L1469.9 273.1L1469.9 273.1L1467.8 280.6L1465.6 288.7L1463.3 297.6L1460.8 307.3ZM1477.9 249.9L1479.7 250.8L1481.8 251.6L1484 252.5L1486.4 253.4L1486.4 253.4L1488.4 248.8L1490.5 244.6L1492.6 240.6L1494.6 236.9L1494.6 236.9L1492.3 236.3L1490.2 235.6L1488.2 234.8L1486.4 234.1L1486.4 234.1L1484.3 237.6L1482.1 241.3L1480 245.4L1477.9 249.9ZM1494.8 222.7L1496.6 223.2L1498.6 223.7L1500.7 224.1L1502.9 224.5L1502.9 224.5L1504.9 221.9L1507 219.7L1509.1 217.7L1511.2 216.1L1511.2 216.1L1509 216L1506.9 215.8L1504.9 215.6L1503 215.4L1503 215.4L1500.9 216.8L1498.8 218.5L1496.8 220.5L1494.8 222.7ZM1511.6 213.1L1513.5 213.1L1515.5 213.1L1517.6 213.1L1519.8 213L1519.8 213L1519.8 213L1519.8 213L1519.8 213L1519.8 213L1519.8 213L1517.6 213.1L1515.5 213.1L1513.5 213.1L1511.6 213.1L1511.6 213.1L1511.6 213.1L1511.6 213.1L1511.6 213.1L1511.6 213.1ZM1524.6 641.1L1526.5 641L1528.4 640.9L1530.2 640.8L1532.4 640.7L1532.4 640.7L1532.4 640.7L1532.4 640.7L1532.4 640.7L1532.4 640.7L1532.4 640.7L1530.2 640.8L1528.4 640.9L1526.5 641L1524.6 641.1L1524.6 641.1L1524.6 641.1L1524.6 641.1L1524.6 641.1L1524.6 641.1ZM1519.3 639.7L1521.5 639.7L1523.6 639.7L1525.7 639.6L1527.8 639.5L1527.8 639.5L1526.3 638.4L1524.8 636.8L1523.3 634.8L1521.8 632.4L1521.8 632.4L1519.2 632.4L1516.6 632.3L1513.9 632.2L1511.1 632.1L1511.1 632.1L1513.2 634.6L1515.3 636.8L1517.3 638.4L1519.3 639.7ZM1501.8 617.3L1505.5 617.7L1509.1 618L1512.5 618.3L1515.8 618.6L1515.8 618.6L1514.2 614L1512.7 608.9L1511.1 603.4L1509.4 597.3L1509.4 597.3L1505.2 596.7L1500.9 596.2L1496.4 595.6L1491.7 594.9L1491.7 594.9L1494.3 601.3L1496.8 607.1L1499.3 612.5L1501.8 617.3ZM1481 565.3L1486.2 566L1491.5 566.7L1496.6 567.4L1501.6 568.1L1501.6 568.1L1499.3 559.7L1496.7 551.1L1494 542.1L1491.3 533.1L1491.3 533.1L1485.9 532.5L1480.4 532L1474.9 531.5L1469.4 531.1L1469.4 531.1L1472.3 539.8L1475.2 548.5L1478.1 557L1481 565.3ZM1460.9 497.5L1466.2 497.4L1471.5 497.3L1476.9 497.3L1482.1 497.3L1482.1 497.3L1480.8 488.9L1479.8 480.8L1479.2 472.9L1478.7 465.1L1478.7 465.1L1473.7 465.7L1468.7 466.3L1463.6 466.9L1458.6 467.4L1458.6 467.4L1458.8 474.7L1459.2 482.1L1459.9 489.7L1460.9 497.5ZM1457.1 436.6L1461.8 436L1466.7 435.2L1471.6 434.4L1476.5 433.6L1476.5 433.6L1475.6 425L1474.6 415.9L1473.7 406.3L1473.2 396.2L1473.2 396.2L1468.4 396.7L1463.8 397.2L1459.4 397.6L1455.2 398L1455.2 398L1455.3 408.5L1455.7 418.5L1456.4 427.8L1457.1 436.6ZM1460 352.4L1463.5 352.6L1467.3 352.6L1471.4 352.7L1475.9 352.8L1475.9 352.8L1477.7 341.9L1479.8 331.4L1482.1 321.3L1484.3 311.8L1484.3 311.8L1480.1 311.1L1476.3 310.5L1472.8 309.9L1469.6 309.3L1469.6 309.3L1467.2 319.3L1464.7 329.9L1462.2 341L1460 352.4ZM1478.4 276.3L1481.4 277.2L1484.7 278.1L1488.4 279L1492.3 279.8L1492.3 279.8L1494 273.4L1495.7 267.4L1497.4 261.9L1499 256.7L1499 256.7L1495.5 256L1492.2 255.2L1489.2 254.3L1486.4 253.4L1486.4 253.4L1484.4 258.4L1482.4 263.8L1480.4 269.7L1478.4 276.3ZM1494.6 236.9L1497.2 237.6L1500 238.2L1502.9 238.7L1506 239.1L1506 239.1L1507.8 235.3L1509.7 231.8L1511.5 228.4L1513.4 225.4L1513.4 225.4L1510.6 225.2L1507.9 225L1505.3 224.8L1502.9 224.5L1502.9 224.5L1500.8 227.2L1498.8 230.2L1496.7 233.5L1494.6 236.9ZM1511.2 216.1L1513.6 216.2L1516 216.2L1518.6 216.1L1521.2 216L1521.2 216L1523.2 214.5L1525.3 213.4L1527.3 212.7L1529 212.4L1529 212.4L1526.8 212.6L1524.4 212.8L1522.1 212.9L1519.8 213L1519.8 213L1517.8 213.2L1515.5 213.8L1513.3 214.8L1511.2 216.1ZM1532.4 640.7L1534.9 640.6L1537.4 640.5L1540 640.4L1542.5 640.3L1542.5 640.3L1542.5 640.3L1541.3 640.3L1539.6 639.9L1538 639.1L1538 639.1L1535.2 639.2L1532.4 639.3L1530 639.5L1527.8 639.5L1527.8 639.5L1529.4 640.3L1531 640.7L1532.4 640.7L1532.4 640.7ZM1521.8 632.4L1524.4 632.5L1526.9 632.4L1529.4 632.3L1531.9 632.2L1531.9 632.2L1530.9 629.6L1530 626.5L1529.1 623L1528.2 619.1L1528.2 619.1L1525.3 619.1L1522.2 619L1519.1 618.8L1515.8 618.6L1515.8 618.6L1517.3 622.7L1518.8 626.4L1520.3 629.6L1521.8 632.4ZM1509.4 597.3L1513.6 597.8L1517.7 598.3L1521.5 598.6L1525.2 598.9L1525.2 598.9L1524.4 592.6L1523.4 585.8L1522.2 578.5L1520.9 570.7L1520.9 570.7L1516.4 570.1L1511.6 569.5L1506.7 568.8L1501.6 568.1L1501.6 568.1L1503.8 576.1L1505.8 583.6L1507.7 590.7L1509.4 597.3ZM1491.3 533.1L1496.9 533.6L1502.3 534.2L1507.6 534.8L1512.7 535.3L1512.7 535.3L1510.2 525.9L1507.7 516.4L1505.3 507L1503.3 497.7L1503.3 497.7L1498.2 497.6L1493 497.4L1487.6 497.4L1482.1 497.3L1482.1 497.3L1484 506L1486.2 514.9L1488.6 523.9L1491.3 533.1ZM1478.7 465.1L1483.9 464.5L1489 464L1494 463.5L1498.9 463.1L1498.9 463.1L1498.4 454.9L1498 446.9L1497.6 438.8L1497 430.5L1497 430.5L1491.9 431.2L1486.8 431.9L1481.7 432.8L1476.5 433.6L1476.5 433.6L1477.3 441.8L1477.9 449.7L1478.4 457.4L1478.7 465.1ZM1473.2 396.2L1478.3 395.6L1483.6 395.1L1489 394.6L1494.4 394.2L1494.4 394.2L1494.4 384.2L1494.8 374L1495.7 363.6L1497.1 353.2L1497.1 353.2L1491.5 353L1486 352.9L1480.8 352.8L1475.9 352.8L1475.9 352.8L1474.4 363.8L1473.5 374.8L1473.1 385.6L1473.2 396.2ZM1484.3 311.8L1489.1 312.4L1494.1 313L1499.4 313.6L1505 314.1L1505 314.1L1506.9 305.5L1508.6 297.3L1510.1 289.8L1511.5 282.7L1511.5 282.7L1506.4 282.1L1501.4 281.4L1496.7 280.7L1492.3 279.8L1492.3 279.8L1490.5 286.9L1488.5 294.5L1486.5 302.8L1484.3 311.8ZM1499 256.7L1502.9 257.4L1507.1 258L1511.4 258.5L1515.8 258.8L1515.8 258.8L1516.8 253.7L1518 248.9L1519.1 244.3L1520.4 239.9L1520.4 239.9L1516.6 239.9L1513 239.7L1509.4 239.5L1506 239.1L1506 239.1L1504.2 243.2L1502.5 247.4L1500.7 251.9L1499 256.7ZM1513.4 225.4L1516.5 225.4L1519.6 225.4L1522.8 225.2L1526.1 225L1526.1 225L1527.7 222L1529.2 219.4L1530.7 217.1L1532.2 215.3L1532.2 215.3L1529.6 215.4L1526.8 215.7L1524 215.9L1521.2 216L1521.2 216L1519.2 217.9L1517.3 220.1L1515.3 222.6L1513.4 225.4ZM1529 212.4L1531.3 212.2L1533.6 212.1L1535.9 211.9L1538.3 211.7L1538.3 211.7L1538.3 211.7L1538.3 211.7L1538.3 211.7L1538.3 211.7L1538.3 211.7L1535.9 211.9L1533.6 212.1L1531.3 212.2L1529 212.4L1529 212.4L1529 212.4L1529 212.4L1529 212.4L1529 212.4ZM1542.5 640.3L1545.1 640.2L1547.8 640.1L1550.4 640L1553 639.8L1553 639.8L1553 639.8L1553 639.8L1553 639.8L1553 639.8L1553 639.8L1550.4 640L1547.8 640.1L1545.1 640.2L1542.5 640.3L1542.5 640.3L1542.5 640.3L1542.5 640.3L1542.5 640.3L1542.5 640.3ZM1538 639.1L1540.9 639L1543.8 638.9L1546.7 638.7L1549.5 638.6L1549.5 638.6L1548.3 637.5L1547.2 635.9L1546.1 634L1545.1 631.7L1545.1 631.7L1541.8 631.8L1538.5 632L1535.2 632.1L1531.9 632.2L1531.9 632.2L1533.3 634.5L1534.8 636.4L1536.4 638L1538 639.1ZM1528.2 619.1L1531.3 619.1L1534.3 619L1538.1 618.9L1541.8 618.8L1541.8 618.8L1541.2 614.5L1540.7 609.8L1540.3 604.7L1539.8 599.1L1539.8 599.1L1535.8 599.2L1532.4 599.2L1528.9 599.1L1525.2 598.9L1525.2 598.9L1526 604.7L1526.7 610L1527.5 614.8L1528.2 619.1ZM1520.9 570.7L1525.4 571.1L1529.7 571.4L1533.7 571.6L1537.6 571.7L1537.6 571.7L1536.7 563.6L1535.4 555L1533.8 546L1531.8 536.7L1531.8 536.7L1527.4 536.5L1522.7 536.2L1517.8 535.8L1512.7 535.3L1512.7 535.3L1515.1 544.6L1517.3 553.6L1519.2 562.4L1520.9 570.7ZM1503.3 497.7L1508.4 497.8L1513.4 498L1518.2 498.2L1522.9 498.4L1522.9 498.4L1521 489L1519.6 479.8L1518.6 471L1517.9 462.4L1517.9 462.4L1513.4 462.4L1508.6 462.5L1503.8 462.7L1498.9 463.1L1498.9 463.1L1499.5 471.4L1500.3 479.9L1501.6 488.6L1503.3 497.7ZM1497 430.5L1502.2 430L1507.3 429.6L1512.3 429.3L1517.3 429.3L1517.3 429.3L1517.1 420.9L1517 412.2L1516.9 403.2L1517 393.9L1517 393.9L1511.5 393.8L1505.8 393.7L1500.1 393.9L1494.4 394.2L1494.4 394.2L1494.8 403.8L1495.5 413.1L1496.3 422L1497 430.5ZM1497.1 353.2L1503.1 353.4L1509.1 353.7L1515.1 354L1521.1 354.4L1521.1 354.4L1522.9 344.4L1524.9 334.6L1526.9 325.1L1528.8 316L1528.8 316L1522.9 315.6L1516.9 315.1L1510.9 314.6L1505 314.1L1505 314.1L1502.9 323.3L1500.8 332.9L1498.9 342.9L1497.1 353.2ZM1511.5 282.7L1516.9 283.2L1522.5 283.6L1528 283.8L1533.5 284L1533.5 284L1534 277.1L1534.3 270.6L1534.4 264.6L1534.6 258.9L1534.6 258.9L1530.1 259L1525.3 259.1L1520.5 259L1515.8 258.8L1515.8 258.8L1514.8 264.2L1513.7 270L1512.7 276.1L1511.5 282.7ZM1520.4 239.9L1524.4 239.8L1528.5 239.6L1532.3 239.4L1536 239.2L1536 239.2L1536.6 234.9L1537.3 231L1538.2 227.4L1539.1 224.1L1539.1 224.1L1535.9 224.3L1532.7 224.6L1529.5 224.8L1526.1 225L1526.1 225L1524.6 228.3L1523.1 231.9L1521.7 235.8L1520.4 239.9ZM1532.2 215.3L1535 215.1L1537.8 214.9L1540.7 214.7L1543.6 214.5L1543.6 214.5L1544.8 213L1546.1 212L1547.4 211.3L1548.6 211.1L1548.6 211.1L1546 211.2L1543.4 211.4L1540.8 211.6L1538.3 211.7L1538.3 211.7L1536.9 212L1535.3 212.7L1533.7 213.8L1532.2 215.3ZM1553 639.8L1555.8 639.7L1558.5 639.6L1561.2 639.5L1564 639.4L1564 639.4L1564 639.4L1563.3 639.3L1562.4 638.9L1561.5 638.1L1561.5 638.1L1558.6 638.2L1555.6 638.4L1552.6 638.5L1549.5 638.6L1549.5 638.6L1550.8 639.4L1552.1 639.8L1553 639.8L1553 639.8ZM1545.1 631.7L1548.5 631.6L1551.8 631.5L1555.2 631.3L1558.5 631.2L1558.5 631.2L1557.9 628.5L1557.4 625.5L1556.9 622.1L1556.6 618.3L1556.6 618.3L1553 618.4L1549.4 618.5L1545.6 618.6L1541.8 618.8L1541.8 618.8L1542.5 622.6L1543.3 626L1544.1 629.1L1545.1 631.7ZM1539.8 599.1L1544.1 599.1L1548.3 599.1L1552.4 599.1L1556.3 599L1556.3 599L1556.4 593.1L1556.4 586.6L1556.2 579.6L1555.9 572.2L1555.9 572.2L1551.6 572L1547 571.9L1542.3 571.8L1537.6 571.7L1537.6 571.7L1538.3 579.3L1538.9 586.4L1539.4 593L1539.8 599.1ZM1531.8 536.7L1536.4 536.9L1541.5 537.1L1546.5 537.4L1551.4 537.7L1551.4 537.7L1549.3 528.3L1547 518.7L1544.7 509.1L1542.4 499.5L1542.4 499.5L1537.4 499.2L1532.4 498.8L1527.6 498.5L1522.9 498.4L1522.9 498.4L1525 507.9L1527.3 517.6L1529.6 527.2L1531.8 536.7ZM1517.9 462.4L1522.7 462.5L1527.3 462.8L1531.8 463.1L1536.5 463.5L1536.5 463.5L1536.1 455.1L1536 446.9L1536.1 438.7L1536.2 430.6L1536.2 430.6L1531.6 430.2L1527.2 429.8L1522.4 429.5L1517.3 429.3L1517.3 429.3L1517.4 437.6L1517.5 445.8L1517.6 454L1517.9 462.4ZM1517 393.9L1522.8 394.3L1528 394.8L1532.6 395.2L1537.3 395.6L1537.3 395.6L1537.9 386.1L1538.9 376.3L1540.2 366.3L1541.8 356.2L1541.8 356.2L1537.1 355.8L1532.4 355.4L1527.1 355L1521.1 354.4L1521.1 354.4L1519.5 364.5L1518.3 374.5L1517.5 384.3L1517 393.9ZM1528.8 316L1534.7 316.4L1539.7 316.6L1544.4 316.9L1549.1 317.1L1549.1 317.1L1550.5 308.2L1551.5 299.6L1552.2 291.6L1552.6 284.1L1552.6 284.1L1548.1 284.1L1543.4 284L1538.6 284L1533.5 284L1533.5 284L1532.7 291.3L1531.7 299L1530.4 307.3L1528.8 316ZM1534.6 258.9L1539 258.7L1543.4 258.6L1547.7 258.4L1552 258.3L1552 258.3L1551.7 252.8L1551.6 247.6L1551.5 242.8L1551.6 238.3L1551.6 238.3L1547.7 238.5L1543.7 238.7L1539.8 238.9L1536 239.2L1536 239.2L1535.5 243.6L1535.1 248.4L1534.8 253.5L1534.6 258.9ZM1539.1 224.1L1542.6 223.9L1546.1 223.7L1549.6 223.5L1553.2 223.3L1553.2 223.3L1553.9 220.3L1554.7 217.8L1555.5 215.6L1556.3 213.7L1556.3 213.7L1553.1 213.9L1549.9 214.1L1546.7 214.3L1543.6 214.5L1543.6 214.5L1542.4 216.3L1541.2 218.6L1540.1 221.2L1539.1 224.1ZM1548.6 211.1L1551.4 210.9L1554.2 210.8L1557.1 210.6L1560.1 210.5L1560.1 210.5L1560.1 210.5L1560.1 210.5L1560.1 210.5L1560.1 210.5L1560.1 210.5L1557.1 210.6L1554.2 210.8L1551.4 210.9L1548.6 211.1L1548.6 211.1L1548.6 211.1L1548.6 211.1L1548.6 211.1L1548.6 211.1ZM1564 639.4L1566.8 639.3L1569.7 639.2L1572.5 639.1L1575.4 639L1575.4 639L1575.4 639L1575.4 639L1575.4 639L1575.4 639L1575.4 639L1572.5 639.1L1569.7 639.2L1566.8 639.3L1564 639.4L1564 639.4L1564 639.4L1564 639.4L1564 639.4L1564 639.4ZM1561.5 638.1L1564.7 638L1567.8 637.9L1570.9 637.8L1574 637.7L1574 637.7L1573.5 636.5L1573.1 634.9L1572.6 633L1572.2 630.8L1572.2 630.8L1568.8 630.8L1565.4 631L1562 631.1L1558.5 631.2L1558.5 631.2L1559.2 633.5L1559.9 635.4L1560.7 636.9L1561.5 638.1ZM1556.6 618.3L1560.3 618.2L1564 618.2L1567.6 618.1L1571.2 618L1571.2 618L1571.1 613.9L1571.2 609.4L1571.4 604.5L1571.6 599.1L1571.6 599.1L1567.9 599.1L1564.2 599.1L1560.3 599L1556.3 599L1556.3 599L1556.3 604.5L1556.3 609.6L1556.4 614.2L1556.6 618.3ZM1555.9 572.2L1560.4 572.3L1564.6 572.5L1568.8 572.7L1572.8 572.9L1572.8 572.9L1572.7 565.2L1572.4 556.9L1571.7 548.3L1570.6 539.3L1570.6 539.3L1566 538.8L1561.2 538.4L1556.3 538.1L1551.4 537.7L1551.4 537.7L1553.1 546.9L1554.4 555.8L1555.3 564.2L1555.9 572.2ZM1542.4 499.5L1547.6 500L1552.9 500.5L1558.3 501L1563.6 501.5L1563.6 501.5L1561.8 492.1L1560.3 482.9L1559.1 474L1558.2 465.3L1558.2 465.3L1552.6 464.8L1547 464.4L1541.7 463.9L1536.5 463.5L1536.5 463.5L1537.4 472.1L1538.6 481L1540.3 490.2L1542.4 499.5ZM1536.2 430.6L1541.3 430.9L1546.5 431.3L1552 431.7L1557.6 432.1L1557.6 432.1L1557.7 423.7L1557.7 415.2L1557.7 406.3L1557.8 397.1L1557.8 397.1L1552.5 396.8L1547.4 396.4L1542.3 396L1537.3 395.6L1537.3 395.6L1536.9 404.8L1536.6 413.7L1536.4 422.2L1536.2 430.6ZM1541.8 356.2L1546.6 356.6L1551.3 357L1555.9 357.3L1560.4 357.6L1560.4 357.6L1561.8 347.4L1563.4 337.3L1565 327.5L1566.5 317.9L1566.5 317.9L1562.4 317.8L1558.1 317.6L1553.7 317.3L1549.1 317.1L1549.1 317.1L1547.4 326.5L1545.5 336.2L1543.6 346.1L1541.8 356.2ZM1552.6 284.1L1557.1 284.1L1561.6 284.1L1565.8 284.1L1570 284.1L1570 284.1L1570.1 276.8L1570 270L1569.7 263.6L1569.3 257.7L1569.3 257.7L1565.1 257.8L1560.8 258L1556.4 258.1L1552 258.3L1552 258.3L1552.3 264.1L1552.5 270.3L1552.6 277L1552.6 284.1ZM1551.6 238.3L1555.7 238L1559.9 237.8L1564.1 237.6L1568.2 237.4L1568.2 237.4L1568.2 233.2L1568.3 229.3L1568.5 225.7L1568.8 222.5L1568.8 222.5L1564.8 222.6L1560.9 222.8L1557 223L1553.2 223.3L1553.2 223.3L1552.6 226.5L1552.2 230.1L1551.8 234L1551.6 238.3ZM1556.3 213.7L1559.8 213.6L1563.3 213.4L1566.9 213.2L1570.5 213.1L1570.5 213.1L1571 211.7L1571.6 210.7L1572.1 210.1L1572.6 210L1572.6 210L1569.5 210.1L1566.3 210.2L1563.2 210.3L1560.1 210.5L1560.1 210.5L1559.2 210.7L1558.2 211.3L1557.3 212.3L1556.3 213.7ZM1575.4 639L1578.4 638.9L1581.4 638.9L1584.4 638.8L1587.4 638.7L1587.4 638.7L1587.4 638.7L1587.3 638.6L1587.2 638.2L1587.1 637.4L1587.1 637.4L1583.8 637.4L1580.6 637.5L1577.3 637.6L1574 637.7L1574 637.7L1574.5 638.5L1575 638.9L1575.4 639L1575.4 639ZM1572.2 630.8L1575.8 630.7L1579.3 630.6L1582.9 630.5L1586.5 630.5L1586.5 630.5L1586.3 627.8L1586.2 624.9L1586.1 621.6L1586 617.9L1586 617.9L1582.3 617.9L1578.6 617.9L1574.9 618L1571.2 618L1571.2 618L1571.3 621.8L1571.5 625.1L1571.8 628.1L1572.2 630.8ZM1571.6 599.1L1575.4 599.2L1579.2 599.2L1583 599.3L1586.7 599.4L1586.7 599.4L1587.2 593.8L1587.7 587.7L1588.3 581.1L1588.9 574L1588.9 574L1584.9 573.7L1580.9 573.5L1576.8 573.2L1572.8 572.9L1572.8 572.9L1572.6 580.2L1572.3 587L1572 593.3L1571.6 599.1ZM1570.6 539.3L1575.4 539.7L1580.1 540.2L1584.8 540.7L1589.5 541.2L1589.5 541.2L1589 532.1L1588.2 522.7L1587.2 513.3L1586.1 503.8L1586.1 503.8L1580.5 503.2L1574.9 502.6L1569.2 502L1563.6 501.5L1563.6 501.5L1565.6 511L1567.5 520.5L1569.2 530L1570.6 539.3ZM1558.2 465.3L1564.3 465.8L1570.5 466.3L1576.7 466.8L1583 467.2L1583 467.2L1582.7 458.6L1582.7 450.2L1582.6 441.8L1582.5 433.4L1582.5 433.4L1576.2 433.1L1569.9 432.8L1563.7 432.5L1557.6 432.1L1557.6 432.1L1557.6 440.3L1557.6 448.5L1557.8 456.8L1558.2 465.3ZM1557.8 397.1L1563.3 397.4L1569 397.7L1574.6 397.9L1580.4 398.1L1580.4 398.1L1579.7 388.6L1579.1 378.8L1578.9 368.7L1579.1 358.5L1579.1 358.5L1574.4 358.3L1569.8 358.1L1565.1 357.9L1560.4 357.6L1560.4 357.6L1559.3 367.8L1558.5 377.8L1558 387.6L1557.8 397.1ZM1566.5 317.9L1570.7 318.1L1574.8 318.3L1578.8 318.4L1582.8 318.6L1582.8 318.6L1584 309.3L1585.1 300.4L1585.9 292L1586.5 284.1L1586.5 284.1L1582.4 284.1L1578.4 284.1L1574.2 284.1L1570 284.1L1570 284.1L1569.6 291.8L1568.9 300.1L1567.9 308.8L1566.5 317.9ZM1569.3 257.7L1573.7 257.5L1578.1 257.4L1582.4 257.3L1586.8 257.2L1586.8 257.2L1586.5 251.6L1586.3 246.3L1586 241.4L1585.8 236.8L1585.8 236.8L1581.4 236.9L1577 237.1L1572.6 237.2L1568.2 237.4L1568.2 237.4L1568.4 242L1568.6 246.9L1568.9 252.1L1569.3 257.7ZM1568.8 222.5L1572.9 222.3L1577.1 222.1L1581.3 222L1585.5 221.9L1585.5 221.9L1585.5 219L1585.6 216.5L1585.7 214.4L1585.8 212.6L1585.8 212.6L1581.9 212.7L1578.1 212.8L1574.3 213L1570.5 213.1L1570.5 213.1L1570 214.9L1569.5 217L1569.1 219.6L1568.8 222.5ZM1572.6 210L1576 209.8L1579.4 209.7L1582.7 209.7L1586.1 209.6L1586.1 209.6L1586.1 209.6L1586.1 209.6L1586.1 209.6L1586.1 209.6L1586.1 209.6L1582.7 209.7L1579.4 209.7L1576 209.8L1572.6 210L1572.6 210L1572.6 210L1572.6 210L1572.6 210L1572.6 210ZM1587.4 638.7L1590.5 638.7L1593.7 638.6L1596.8 638.6L1600 638.6L1600 638.6L1600 638.6L1600 638.6L1600 638.6L1600 638.6L1600 638.6L1596.8 638.6L1593.7 638.6L1590.5 638.7L1587.4 638.7L1587.4 638.7L1587.4 638.7L1587.4 638.7L1587.4 638.7L1587.4 638.7ZM1587.1 637.4L1590.5 637.3L1594 637.3L1597.4 637.2L1600.9 637.2L1600.9 637.2L1601.1 636L1601.3 634.5L1601.5 632.6L1601.7 630.4L1601.7 630.4L1597.8 630.4L1594 630.4L1590.2 630.4L1586.5 630.5L1586.5 630.5L1586.6 632.7L1586.8 634.6L1587 636.2L1587.1 637.4ZM1586 617.9L1590 617.9L1594 617.9L1598 617.9L1602.1 618L1602.1 618L1602.3 614L1602.6 609.7L1602.9 605L1603.4 599.9L1603.4 599.9L1599.1 599.8L1594.9 599.7L1590.8 599.5L1586.7 599.4L1586.7 599.4L1586.4 604.6L1586.2 609.4L1586.1 613.9L1586 617.9ZM1588.9 574L1593.1 574.3L1597.4 574.6L1601.9 574.9L1606.5 575.2L1606.5 575.2L1607.4 567.9L1608.3 560.1L1609 551.8L1609.5 543.2L1609.5 543.2L1604.4 542.7L1599.4 542.2L1594.4 541.7L1589.5 541.2L1589.5 541.2L1589.7 550L1589.6 558.4L1589.3 566.5L1588.9 574ZM1586.1 503.8L1591.9 504.4L1597.8 505L1603.5 505.5L1609.3 506.1L1609.3 506.1L1608.9 496.6L1608.5 487.2L1608.2 478L1608.1 469L1608.1 469L1602 468.6L1595.8 468.2L1589.4 467.7L1583 467.2L1583 467.2L1583.4 476.1L1584.1 485.1L1585 494.4L1586.1 503.8ZM1582.5 433.4L1589.1 433.7L1595.5 433.9L1601.8 434.1L1607.9 434.2L1607.9 434.2L1607.5 425.6L1606.7 416.8L1605.5 407.8L1604.2 398.5L1604.2 398.5L1598.3 398.5L1592.3 398.4L1586.4 398.3L1580.4 398.1L1580.4 398.1L1581.1 407.4L1581.8 416.3L1582.2 424.9L1582.5 433.4ZM1579.1 358.5L1584 358.7L1589.1 358.8L1594.2 358.9L1599.5 359L1599.5 359L1599.2 348.9L1599.3 338.8L1599.8 328.8L1600.6 319.2L1600.6 319.2L1595.9 319L1591.4 318.9L1587.1 318.7L1582.8 318.6L1582.8 318.6L1581.6 328.2L1580.5 338.2L1579.6 348.3L1579.1 358.5ZM1586.5 284.1L1590.8 284.2L1595.1 284.3L1599.6 284.3L1604.1 284.5L1604.1 284.5L1604.6 277L1605 269.9L1605.1 263.3L1605.1 257.2L1605.1 257.2L1600.4 257.1L1595.9 257.1L1591.3 257.2L1586.8 257.2L1586.8 257.2L1586.9 263.3L1587 269.8L1586.9 276.7L1586.5 284.1ZM1585.8 236.8L1590.4 236.7L1595 236.6L1599.5 236.6L1604.1 236.5L1604.1 236.5L1603.8 232.3L1603.5 228.4L1603.2 224.8L1602.9 221.6L1602.9 221.6L1598.6 221.6L1594.2 221.7L1589.9 221.8L1585.5 221.9L1585.5 221.9L1585.5 225.1L1585.5 228.7L1585.6 232.6L1585.8 236.8ZM1585.8 212.6L1589.7 212.5L1593.7 212.5L1597.7 212.4L1601.6 212.4L1601.6 212.4L1601.2 211L1600.8 210.1L1600.4 209.5L1600.1 209.4L1600.1 209.4L1596.6 209.4L1593.1 209.4L1589.6 209.5L1586.1 209.6L1586.1 209.6L1586 209.7L1585.9 210.3L1585.8 211.3L1585.8 212.6ZM1600 638.6L1603.3 638.6L1606.6 638.6L1609.9 638.6L1613.2 638.6L1613.2 638.6L1613.2 638.6L1613.8 638.5L1614.6 638.1L1615.4 637.3L1615.4 637.3L1611.8 637.2L1608.1 637.2L1604.5 637.2L1600.9 637.2L1600.9 637.2L1600.6 638L1600.2 638.5L1600 638.6L1600 638.6ZM1601.7 630.4L1605.7 630.4L1609.8 630.4L1613.9 630.4L1618.1 630.5L1618.1 630.5L1618.7 627.9L1619.2 625L1619.8 621.8L1620.3 618.2L1620.3 618.2L1615.7 618.2L1611.1 618.1L1606.6 618L1602.1 618L1602.1 618L1602 621.6L1601.9 624.8L1601.8 627.8L1601.7 630.4ZM1603.4 599.9L1608.1 600.1L1613 600.2L1618 600.3L1623.2 600.5L1623.2 600.5L1624.2 595.1L1625.3 589.2L1626.5 583L1627.8 576.2L1627.8 576.2L1622.2 576L1616.8 575.8L1611.5 575.5L1606.5 575.2L1606.5 575.2L1605.6 582.1L1604.8 588.5L1604 594.4L1603.4 599.9ZM1609.5 543.2L1615 543.6L1620.7 544.1L1626.4 544.4L1632.3 544.8L1632.3 544.8L1632.9 535.9L1633.2 526.8L1633.1 517.4L1632.8 507.9L1632.8 507.9L1627 507.5L1621.1 507.1L1615.2 506.6L1609.3 506.1L1609.3 506.1L1609.6 515.5L1609.8 524.9L1609.8 534.2L1609.5 543.2ZM1608.1 469L1614.2 469.3L1620 469.7L1625.7 469.9L1631.1 470.2L1631.1 470.2L1630.9 461L1630.9 452.1L1630.9 443.2L1630.9 434.4L1630.9 434.4L1625.5 434.4L1619.9 434.4L1614.1 434.3L1607.9 434.2L1607.9 434.2L1608.1 442.8L1608.1 451.4L1608.1 460.1L1608.1 469ZM1604.2 398.5L1610.3 398.5L1616.3 398.4L1622.3 398.4L1628.1 398.2L1628.1 398.2L1626.8 388.8L1625.4 379.1L1624.1 369.2L1623.1 359.3L1623.1 359.3L1617 359.2L1611 359.2L1605.2 359.1L1599.5 359L1599.5 359L1600.2 369.2L1601.4 379.2L1602.7 389L1604.2 398.5ZM1600.6 319.2L1605.7 319.3L1611.1 319.5L1616.8 319.7L1622.7 320L1622.7 320L1623.3 310.7L1624 301.8L1624.6 293.3L1625.1 285.3L1625.1 285.3L1619.5 285L1614.2 284.8L1609.1 284.6L1604.1 284.5L1604.1 284.5L1603.4 292.5L1602.5 300.9L1601.5 309.8L1600.6 319.2ZM1605.1 257.2L1610 257.3L1614.9 257.4L1620 257.5L1625.1 257.7L1625.1 257.7L1624.7 251.9L1624.1 246.5L1623.6 241.4L1622.9 236.8L1622.9 236.8L1618.3 236.6L1613.6 236.6L1608.8 236.5L1604.1 236.5L1604.1 236.5L1604.4 241.1L1604.7 246.1L1604.9 251.4L1605.1 257.2ZM1602.9 221.6L1607.3 221.6L1611.7 221.6L1616 221.6L1620.2 221.7L1620.2 221.7L1619.5 218.8L1618.8 216.3L1618.1 214.2L1617.3 212.4L1617.3 212.4L1613.5 212.4L1609.6 212.4L1605.6 212.4L1601.6 212.4L1601.6 212.4L1601.9 214.1L1602.2 216.2L1602.6 218.7L1602.9 221.6ZM1600.1 209.4L1603.7 209.4L1607.2 209.3L1610.7 209.4L1614.1 209.4L1614.1 209.4L1614.1 209.4L1614.1 209.4L1614.1 209.4L1614.1 209.4L1614.1 209.4L1610.7 209.4L1607.2 209.3L1603.7 209.4L1600.1 209.4L1600.1 209.4L1600.1 209.4L1600.1 209.4L1600.1 209.4L1600.1 209.4ZM1613.2 638.6L1616.5 638.6L1619.9 638.7L1623.2 638.7L1626.5 638.8L1626.5 638.8L1626.5 638.8L1626.5 638.8L1626.5 638.8L1626.5 638.8L1626.5 638.8L1623.2 638.7L1619.9 638.7L1616.5 638.6L1613.2 638.6L1613.2 638.6L1613.2 638.6L1613.2 638.6L1613.2 638.6L1613.2 638.6ZM1615.4 637.3L1619.1 637.3L1622.7 637.4L1626.4 637.4L1630.1 637.5L1630.1 637.5L1631.3 636.3L1632.6 634.8L1633.8 633L1635 630.7L1635 630.7L1630.7 630.7L1626.5 630.6L1622.3 630.5L1618.1 630.5L1618.1 630.5L1617.5 632.7L1616.8 634.6L1616.1 636.1L1615.4 637.3ZM1620.3 618.2L1625.1 618.3L1630 618.4L1634.9 618.5L1639.8 618.5L1639.8 618.5L1641.1 614.6L1642.4 610.4L1643.8 605.8L1645.3 600.8L1645.3 600.8L1639.6 600.7L1634.1 600.7L1628.6 600.6L1623.2 600.5L1623.2 600.5L1622.4 605.5L1621.6 610.1L1620.9 614.3L1620.3 618.2ZM1627.8 576.2L1633.6 576.4L1639.6 576.6L1645.6 576.7L1651.7 576.7L1651.7 576.7L1653.3 569.6L1654.7 562L1655.9 554L1656.7 545.6L1656.7 545.6L1650.6 545.5L1644.4 545.3L1638.3 545.1L1632.3 544.8L1632.3 544.8L1631.5 553.3L1630.4 561.4L1629.1 569L1627.8 576.2ZM1632.8 507.9L1638.6 508.2L1644.3 508.5L1650.1 508.7L1655.8 508.8L1655.8 508.8L1654.7 499.2L1653.5 489.6L1652.4 480.1L1651.5 470.7L1651.5 470.7L1646.4 470.6L1641.4 470.5L1636.3 470.3L1631.1 470.2L1631.1 470.2L1631.4 479.4L1631.8 488.8L1632.3 498.3L1632.8 507.9ZM1630.9 434.4L1636 434.3L1641 434.2L1645.8 434.2L1650.7 434L1650.7 434L1650.9 425.1L1651.1 416L1651.1 406.9L1650.8 397.7L1650.8 397.7L1645.2 397.9L1639.6 398L1633.9 398.1L1628.1 398.2L1628.1 398.2L1629.3 407.5L1630.1 416.6L1630.6 425.5L1630.9 434.4ZM1623.1 359.3L1629.4 359.3L1635.8 359.4L1642.2 359.4L1648.6 359.5L1648.6 359.5L1648.2 349.8L1648.1 340.1L1648.1 330.5L1648.3 321.1L1648.3 321.1L1641.7 320.8L1635.2 320.5L1628.9 320.2L1622.7 320L1622.7 320L1622.3 329.5L1622.2 339.3L1622.5 349.3L1623.1 359.3ZM1625.1 285.3L1630.8 285.6L1636.7 286L1642.7 286.3L1648.8 286.7L1648.8 286.7L1648.5 279.1L1648 271.9L1647.2 265.1L1646.3 258.8L1646.3 258.8L1640.9 258.5L1635.6 258.2L1630.3 257.9L1625.1 257.7L1625.1 257.7L1625.4 263.9L1625.5 270.6L1625.4 277.7L1625.1 285.3ZM1622.9 236.8L1627.6 236.9L1632.2 237L1636.9 237.2L1641.5 237.4L1641.5 237.4L1640.2 233L1639 229L1637.8 225.4L1636.6 222.1L1636.6 222.1L1632.6 222L1628.5 221.8L1624.4 221.7L1620.2 221.7L1620.2 221.7L1620.9 224.9L1621.6 228.5L1622.3 232.4L1622.9 236.8ZM1617.3 212.4L1621.1 212.5L1624.8 212.5L1628.4 212.6L1631.9 212.7L1631.9 212.7L1630.7 211.3L1629.5 210.3L1628.3 209.8L1627.2 209.6L1627.2 209.6L1624 209.5L1620.7 209.5L1617.4 209.4L1614.1 209.4L1614.1 209.4L1614.9 209.5L1615.7 210.1L1616.5 211.1L1617.3 212.4ZM1626.5 638.8L1630 638.8L1633.5 638.9L1636.9 639L1640.4 639L1640.4 639L1640.4 639L1641.7 639L1643.6 638.6L1645.4 637.8L1645.4 637.8L1641.6 637.7L1637.7 637.6L1633.9 637.5L1630.1 637.5L1630.1 637.5L1628.8 638.3L1627.5 638.7L1626.5 638.8L1626.5 638.8ZM1635 630.7L1639.5 630.8L1644 630.9L1648.4 631L1652.9 631L1652.9 631L1654.8 628.5L1656.7 625.5L1658.7 622.3L1660.6 618.6L1660.6 618.6L1655.5 618.6L1650.3 618.6L1645.1 618.6L1639.8 618.5L1639.8 618.5L1638.6 622.1L1637.4 625.3L1636.2 628.2L1635 630.7ZM1645.3 600.8L1651.2 600.8L1657.1 600.8L1662.9 600.7L1668.7 600.6L1668.7 600.6L1670.7 595.2L1672.8 589.4L1674.8 583.1L1676.6 576.4L1676.6 576.4L1670.6 576.6L1664.4 576.7L1658.1 576.7L1651.7 576.7L1651.7 576.7L1650.1 583.4L1648.4 589.6L1646.8 595.4L1645.3 600.8ZM1656.7 545.6L1663.1 545.6L1669.5 545.6L1675.7 545.6L1681.9 545.4L1681.9 545.4L1682.1 536.7L1681.9 527.7L1681.2 518.4L1680 509L1680 509L1673.9 509L1667.8 509L1661.8 508.9L1655.8 508.8L1655.8 508.8L1656.7 518.3L1657.1 527.7L1657.1 536.8L1656.7 545.6ZM1651.5 470.7L1656.7 470.7L1662.2 470.7L1667.8 470.7L1673.6 470.7L1673.6 470.7L1672.5 461.3L1671.9 452L1671.7 442.8L1672 433.6L1672 433.6L1666.3 433.7L1661 433.8L1655.8 433.9L1650.7 434L1650.7 434L1650.5 443.1L1650.5 452.1L1650.8 461.3L1651.5 470.7ZM1650.8 397.7L1656.7 397.6L1662.5 397.5L1668.4 397.4L1674.4 397.3L1674.4 397.3L1674.7 388.1L1674.9 378.8L1674.9 369.4L1674.9 360L1674.9 360L1668.5 359.8L1662 359.7L1655.3 359.6L1648.6 359.5L1648.6 359.5L1649.2 369.2L1649.8 378.9L1650.4 388.4L1650.8 397.7ZM1648.3 321.1L1655.1 321.5L1662 321.9L1668.7 322.3L1675.2 322.7L1675.2 322.7L1675.3 313.7L1675.2 305L1674.9 296.7L1674.4 288.6L1674.4 288.6L1668.1 288.1L1661.7 287.6L1655.3 287.2L1648.8 286.7L1648.8 286.7L1648.9 294.8L1648.8 303.2L1648.5 312L1648.3 321.1ZM1646.3 258.8L1652 259.2L1657.7 259.5L1663.4 259.9L1669.1 260.3L1669.1 260.3L1667.1 254.3L1665.1 248.6L1663 243.3L1660.9 238.4L1660.9 238.4L1656 238.2L1651.2 237.9L1646.3 237.7L1641.5 237.4L1641.5 237.4L1642.7 242.2L1644 247.3L1645.2 252.9L1646.3 258.8ZM1636.6 222.1L1640.7 222.2L1644.9 222.4L1648.9 222.6L1653 222.7L1653 222.7L1651.2 219.8L1649.5 217.2L1647.8 215L1646.2 213.2L1646.2 213.2L1642.7 213L1639.1 212.9L1635.6 212.8L1631.9 212.7L1631.9 212.7L1633.1 214.5L1634.3 216.6L1635.4 219.2L1636.6 222.1ZM1627.2 209.6L1630.4 209.7L1633.6 209.7L1636.8 209.8L1639.9 209.9L1639.9 209.9L1639.9 209.9L1639.9 209.9L1639.9 209.9L1639.9 209.9L1639.9 209.9L1636.8 209.8L1633.6 209.7L1630.4 209.7L1627.2 209.6L1627.2 209.6L1627.2 209.6L1627.2 209.6L1627.2 209.6L1627.2 209.6ZM1640.4 639L1644 639.1L1647.6 639.2L1651.2 639.3L1654.8 639.3L1654.8 639.3L1654.8 639.3L1654.8 639.3L1654.8 639.3L1654.8 639.3L1654.8 639.3L1651.2 639.3L1647.6 639.2L1644 639.1L1640.4 639L1640.4 639L1640.4 639L1640.4 639L1640.4 639L1640.4 639ZM1645.4 637.8L1649.4 637.9L1653.4 637.9L1657.3 638L1661.3 638.1L1661.3 638.1L1663.7 636.9L1666.2 635.4L1668.7 633.5L1671.3 631.2L1671.3 631.2L1666.7 631.2L1662.2 631.1L1657.5 631.1L1652.9 631L1652.9 631L1651 633.3L1649.1 635.1L1647.3 636.6L1645.4 637.8ZM1660.6 618.6L1666 618.6L1671.2 618.6L1676.4 618.5L1681.4 618.4L1681.4 618.4L1683.9 614.3L1686.3 609.8L1688.7 605L1691 599.8L1691 599.8L1685.7 600.1L1680.2 600.3L1674.6 600.5L1668.7 600.6L1668.7 600.6L1666.7 605.7L1664.6 610.4L1662.6 614.7L1660.6 618.6ZM1676.6 576.4L1682.8 576.2L1688.6 575.9L1694.2 575.5L1699.5 575.2L1699.5 575.2L1701.4 568L1703.1 560.5L1704.5 552.6L1705.6 544.3L1705.6 544.3L1700 544.7L1694.1 545L1688.1 545.2L1681.9 545.4L1681.9 545.4L1681.1 553.8L1679.9 561.7L1678.4 569.3L1676.6 576.4ZM1680 509L1686.4 508.9L1692.8 508.8L1699.2 508.7L1705.7 508.5L1705.7 508.5L1704.7 499.1L1703.4 489.7L1702 480.2L1700.7 470.7L1700.7 470.7L1693.5 470.7L1686.6 470.7L1679.9 470.7L1673.6 470.7L1673.6 470.7L1675 480.2L1676.7 489.8L1678.4 499.4L1680 509ZM1672 433.6L1678.1 433.5L1684.6 433.5L1691.4 433.5L1698.5 433.5L1698.5 433.5L1698.7 424.4L1699.2 415.3L1699.6 406.2L1700 397.1L1700 397.1L1693.5 397.1L1687 397.1L1680.7 397.2L1674.4 397.3L1674.4 397.3L1673.8 406.4L1673.2 415.5L1672.5 424.5L1672 433.6ZM1674.9 360L1681.4 360.1L1687.8 360.3L1693.9 360.4L1699.9 360.5L1699.9 360.5L1699.7 351.4L1699.6 342.3L1699.6 333.2L1699.6 324.3L1699.6 324.3L1694 323.9L1688 323.5L1681.7 323.1L1675.2 322.7L1675.2 322.7L1675.1 331.8L1675 341.1L1674.9 350.5L1674.9 360ZM1674.4 288.6L1680.8 289.1L1687 289.7L1693 290.2L1698.7 290.7L1698.7 290.7L1697.7 283L1696.4 275.6L1694.6 268.6L1692.4 262L1692.4 262L1686.7 261.6L1680.9 261.2L1675 260.8L1669.1 260.3L1669.1 260.3L1670.8 266.8L1672.3 273.7L1673.5 281L1674.4 288.6ZM1660.9 238.4L1666 238.7L1671.1 239L1676.3 239.3L1681.6 239.6L1681.6 239.6L1678.7 234.9L1675.8 230.7L1673.1 226.9L1670.4 223.4L1670.4 223.4L1666 223.3L1661.6 223.1L1657.3 222.9L1653 222.7L1653 222.7L1654.9 226.1L1656.8 229.8L1658.8 233.9L1660.9 238.4ZM1646.2 213.2L1649.8 213.3L1653.5 213.4L1657.1 213.6L1660.8 213.7L1660.8 213.7L1658.6 212.2L1656.5 211.2L1654.3 210.6L1652.5 210.4L1652.5 210.4L1649.4 210.3L1646.2 210.1L1643.1 210L1639.9 209.9L1639.9 209.9L1641.3 210.1L1642.9 210.7L1644.6 211.8L1646.2 213.2ZM1654.8 639.3L1658.6 639.4L1662.3 639.5L1666 639.5L1669.7 639.6L1669.7 639.6L1669.7 639.6L1671.7 639.5L1674.6 639.1L1677.6 638.2L1677.6 638.2L1673.5 638.2L1669.5 638.2L1665.4 638.1L1661.3 638.1L1661.3 638.1L1658.9 638.9L1656.5 639.3L1654.8 639.3L1654.8 639.3ZM1671.3 631.2L1675.9 631.2L1680.5 631.1L1685.1 631.1L1689.6 631L1689.6 631L1692.6 628.2L1695.5 625.1L1698.3 621.5L1701.1 617.6L1701.1 617.6L1696.3 617.9L1691.5 618.1L1686.5 618.3L1681.4 618.4L1681.4 618.4L1678.9 622.1L1676.3 625.5L1673.8 628.5L1671.3 631.2ZM1691 599.8L1696.3 599.5L1701.3 599.1L1706.2 598.7L1710.9 598.3L1710.9 598.3L1713.1 592.5L1715.3 586.4L1717.4 579.9L1719.5 573.1L1719.5 573.1L1714.8 573.7L1709.9 574.2L1704.8 574.7L1699.5 575.2L1699.5 575.2L1697.5 581.9L1695.4 588.3L1693.2 594.2L1691 599.8ZM1705.6 544.3L1711.3 543.9L1716.9 543.5L1722.4 543L1727.8 542.6L1727.8 542.6L1729.6 534.3L1731 525.7L1732.1 516.9L1732.8 507.9L1732.8 507.9L1726.1 508.1L1719.3 508.2L1712.5 508.4L1705.7 508.5L1705.7 508.5L1706.4 517.8L1706.6 526.9L1706.3 535.7L1705.6 544.3ZM1700.7 470.7L1708.3 470.8L1716.1 470.9L1724 471L1731.7 471.1L1731.7 471.1L1731 461.8L1730.3 452.4L1729.7 443.1L1729.3 433.8L1729.3 433.8L1721.6 433.7L1713.8 433.6L1706.1 433.5L1698.5 433.5L1698.5 433.5L1698.5 442.7L1698.8 452L1699.6 461.3L1700.7 470.7ZM1700 397.1L1706.9 397.1L1713.8 397.1L1720.7 397L1727.7 397L1727.7 397L1726.9 387.9L1726 378.8L1724.9 369.8L1723.8 360.8L1723.8 360.8L1717.8 360.8L1711.9 360.8L1705.9 360.7L1699.9 360.5L1699.9 360.5L1700.1 369.7L1700.2 378.9L1700.2 388L1700 397.1ZM1699.6 324.3L1705.3 324.7L1710.6 325L1715.8 325.3L1721 325.5L1721 325.5L1720.8 316.9L1720.8 308.5L1720.7 300.3L1720.4 292.3L1720.4 292.3L1715.3 292L1710 291.6L1704.5 291.2L1698.7 290.7L1698.7 290.7L1699.3 298.7L1699.6 307L1699.7 315.5L1699.6 324.3ZM1692.4 262L1698.3 262.4L1704.1 262.8L1709.8 263.2L1715.4 263.5L1715.4 263.5L1713 257.1L1710.2 251.2L1707.1 245.6L1703.8 240.5L1703.8 240.5L1698.2 240.3L1692.6 240.1L1687.1 239.8L1681.6 239.6L1681.6 239.6L1684.4 244.6L1687.3 250L1689.9 255.8L1692.4 262ZM1670.4 223.4L1675.1 223.6L1679.9 223.8L1684.8 223.9L1689.8 224L1689.8 224L1686.4 220.9L1683.1 218.2L1679.9 216L1676.8 214.1L1676.8 214.1L1672.7 214L1668.7 213.9L1664.7 213.8L1660.8 213.7L1660.8 213.7L1663.1 215.5L1665.4 217.8L1667.9 220.4L1670.4 223.4ZM1652.5 210.4L1655.8 210.5L1659.1 210.6L1662.5 210.7L1665.9 210.8L1665.9 210.8L1665.9 210.8L1665.9 210.8L1665.9 210.8L1665.9 210.8L1665.9 210.8L1662.5 210.7L1659.1 210.6L1655.8 210.5L1652.5 210.4L1652.5 210.4L1652.5 210.4L1652.5 210.4L1652.5 210.4L1652.5 210.4ZM1669.7 639.6L1673.5 639.6L1677.4 639.6L1681.2 639.6L1685 639.6L1685 639.6L1685 639.6L1685 639.6L1685 639.6L1685 639.6L1685 639.6L1681.2 639.6L1677.4 639.6L1673.5 639.6L1669.7 639.6L1669.7 639.6L1669.7 639.6L1669.7 639.6L1669.7 639.6L1669.7 639.6ZM1677.6 638.2L1681.8 638.2L1685.9 638.2L1690.1 638.2L1694.2 638.1L1694.2 638.1L1697.7 636.8L1701.1 635.1L1704.5 633L1707.9 630.4L1707.9 630.4L1703.4 630.6L1698.8 630.8L1694.2 630.9L1689.6 631L1689.6 631L1686.6 633.4L1683.6 635.4L1680.6 637L1677.6 638.2ZM1701.1 617.6L1705.9 617.3L1710.7 617L1715.4 616.7L1720.1 616.3L1720.1 616.3L1722.8 611.8L1725.3 607L1727.8 601.8L1730.2 596.2L1730.2 596.2L1725.3 596.7L1720.5 597.3L1715.7 597.8L1710.9 598.3L1710.9 598.3L1708.6 603.7L1706.2 608.7L1703.7 613.3L1701.1 617.6ZM1719.5 573.1L1724.5 572.5L1729.4 571.9L1734.6 571.3L1739.9 570.8L1739.9 570.8L1742.6 563.7L1745.4 556.3L1748.3 548.7L1751.1 540.9L1751.1 540.9L1745.1 541.3L1739.2 541.7L1733.5 542.1L1727.8 542.6L1727.8 542.6L1725.9 550.7L1723.8 558.5L1721.7 566L1719.5 573.1ZM1732.8 507.9L1739.8 507.8L1746.7 507.7L1753.5 507.6L1760.3 507.6L1760.3 507.6L1761.4 498.9L1762 490L1762.1 481L1761.7 471.8L1761.7 471.8L1754.7 471.6L1747.3 471.4L1739.7 471.3L1731.7 471.1L1731.7 471.1L1732.4 480.4L1732.9 489.7L1733 498.9L1732.8 507.9ZM1729.3 433.8L1737.2 434L1744.8 434.1L1752.1 434.2L1759 434.3L1759 434.3L1758.4 424.8L1757.7 415.4L1757 405.9L1756.1 396.6L1756.1 396.6L1749.1 396.7L1742.1 396.9L1734.9 397L1727.7 397L1727.7 397L1728.2 406.2L1728.6 415.3L1728.9 424.6L1729.3 433.8ZM1723.8 360.8L1730 360.8L1736.4 360.6L1743 360.4L1749.8 360.2L1749.8 360.2L1747.9 351.4L1746.2 342.7L1744.7 334.1L1743.6 325.6L1743.6 325.6L1737.6 325.7L1731.9 325.7L1726.4 325.6L1721 325.5L1721 325.5L1721.3 334.2L1721.9 343L1722.7 351.9L1723.8 360.8ZM1720.4 292.3L1725.7 292.6L1730.9 292.9L1736.3 293L1741.7 293.1L1741.7 293.1L1741.3 285.5L1740.6 278.1L1739.6 271L1738.1 264.3L1738.1 264.3L1732.5 264.1L1726.8 264L1721.1 263.7L1715.4 263.5L1715.4 263.5L1717.3 270.2L1718.8 277.2L1719.8 284.6L1720.4 292.3ZM1703.8 240.5L1709.7 240.6L1715.7 240.8L1721.6 240.8L1727.5 240.9L1727.5 240.9L1723.9 236.1L1720 231.7L1716 227.7L1711.9 224.2L1711.9 224.2L1706.2 224.2L1700.7 224.1L1695.2 224.1L1689.8 224L1689.8 224L1693.3 227.5L1696.9 231.4L1700.4 235.7L1703.8 240.5ZM1676.8 214.1L1681.3 214.2L1685.9 214.2L1690.6 214.2L1695.4 214.2L1695.4 214.2L1691.4 212.8L1687.6 211.8L1684 211.2L1680.8 211L1680.8 211L1677 211L1673.2 210.9L1669.5 210.9L1665.9 210.8L1665.9 210.8L1668.2 211L1671 211.6L1673.9 212.7L1676.8 214.1ZM1685 639.6L1688.9 639.6L1692.8 639.6L1696.8 639.5L1700.7 639.5L1700.7 639.5L1700.7 639.5L1703.4 639.3L1707.4 638.7L1711.3 637.7L1711.3 637.7L1707.1 637.8L1702.8 638L1698.5 638.1L1694.2 638.1L1694.2 638.1L1690.8 639L1687.3 639.5L1685 639.6L1685 639.6ZM1707.9 630.4L1712.6 630.2L1717.2 630L1722 629.7L1726.7 629.5L1726.7 629.5L1730.3 626.4L1733.8 622.9L1737.1 619L1740.4 614.8L1740.4 614.8L1735.1 615.1L1730 615.5L1725 615.9L1720.1 616.3L1720.1 616.3L1717.2 620.4L1714.2 624.2L1711.1 627.5L1707.9 630.4ZM1730.2 596.2L1735.4 595.7L1740.9 595.2L1746.7 594.6L1752.8 594.2L1752.8 594.2L1755.8 588.2L1759 582L1762.2 575.5L1765.5 568.7L1765.5 568.7L1758.5 569.1L1752 569.6L1745.7 570.2L1739.9 570.8L1739.9 570.8L1737.3 577.6L1734.9 584.1L1732.5 590.3L1730.2 596.2ZM1751.1 540.9L1757.7 540.5L1764.4 540.1L1771.5 539.8L1778.7 539.5L1778.7 539.5L1781.6 531.7L1784.2 523.8L1786.3 515.7L1787.8 507.4L1787.8 507.4L1781 507.5L1774.1 507.5L1767.2 507.5L1760.3 507.6L1760.3 507.6L1758.6 516.2L1756.4 524.6L1753.9 532.8L1751.1 540.9ZM1761.7 471.8L1768.7 472L1775.4 472.2L1781.8 472.3L1788.1 472.4L1788.1 472.4L1787.2 463.2L1786.2 453.7L1785.4 444.1L1784.8 434.3L1784.8 434.3L1778.7 434.4L1772.4 434.4L1765.9 434.4L1759 434.3L1759 434.3L1759.7 443.8L1760.4 453.2L1761.2 462.6L1761.7 471.8ZM1756.1 396.6L1763.2 396.3L1770.2 396L1777.1 395.6L1784 395.1L1784 395.1L1783.6 385.6L1782.9 376.2L1781.7 367.1L1780.2 358.1L1780.2 358.1L1772.3 358.8L1764.6 359.3L1757.1 359.8L1749.8 360.2L1749.8 360.2L1751.6 369.1L1753.4 378.1L1754.9 387.3L1756.1 396.6ZM1743.6 325.6L1750.2 325.4L1757.2 325.1L1764.6 324.7L1772.4 324.3L1772.4 324.3L1770.6 316.2L1769.1 308.2L1767.9 300.4L1766.8 292.8L1766.8 292.8L1760.1 293L1753.7 293.1L1747.6 293.1L1741.7 293.1L1741.7 293.1L1742 301L1742.3 309L1742.8 317.2L1743.6 325.6ZM1738.1 264.3L1744 264.3L1749.9 264.4L1755.8 264.3L1761.8 264.3L1761.8 264.3L1759.9 257.9L1757.6 251.8L1754.9 246.1L1751.8 240.8L1751.8 240.8L1745.8 240.9L1739.7 240.9L1733.6 240.9L1727.5 240.9L1727.5 240.9L1730.8 246.1L1733.7 251.8L1736.1 257.8L1738.1 264.3ZM1711.9 224.2L1717.8 224.1L1723.8 224.1L1729.8 224L1735.7 223.9L1735.7 223.9L1731.1 220.8L1726.3 218.1L1721.4 215.8L1716.6 214L1716.6 214L1711.1 214.1L1705.8 214.2L1700.5 214.2L1695.4 214.2L1695.4 214.2L1699.4 216.1L1703.5 218.4L1707.7 221L1711.9 224.2ZM1680.8 211L1685 211.1L1689.3 211.1L1693.7 211.1L1698.1 211L1698.1 211L1698.1 211L1698.1 211L1698.1 211L1698.1 211L1698.1 211L1693.7 211.1L1689.3 211.1L1685 211.1L1680.8 211L1680.8 211L1680.8 211L1680.8 211L1680.8 211L1680.8 211ZM1700.7 639.5L1704.8 639.4L1708.9 639.2L1713 639.1L1717.1 639L1717.1 639L1717.1 639L1717.1 639L1717.1 639L1717.1 639L1717.1 639L1713 639.1L1708.9 639.2L1704.8 639.4L1700.7 639.5L1700.7 639.5L1700.7 639.5L1700.7 639.5L1700.7 639.5L1700.7 639.5ZM1711.3 637.7L1715.8 637.5L1720.3 637.4L1724.8 637.2L1729.4 637L1729.4 637L1733.9 635.4L1738.4 633.5L1742.8 631.1L1747.2 628.3L1747.2 628.3L1741.9 628.6L1736.8 628.9L1731.7 629.2L1726.7 629.5L1726.7 629.5L1723 632.2L1719.2 634.4L1715.3 636.3L1711.3 637.7ZM1740.4 614.8L1746.1 614.4L1751.9 614L1758 613.6L1764.3 613.3L1764.3 613.3L1768.5 608.7L1772.8 603.7L1777 598.4L1781.2 592.7L1781.2 592.7L1773.7 593L1766.4 593.3L1759.4 593.7L1752.8 594.2L1752.8 594.2L1749.7 599.8L1746.7 605.1L1743.6 610.1L1740.4 614.8ZM1765.5 568.7L1773.1 568.3L1780.9 567.9L1789 567.6L1797.1 567.4L1797.1 567.4L1800.7 560.4L1804.1 553.3L1807.1 546L1809.9 538.5L1809.9 538.5L1802.1 538.7L1794.2 539L1786.4 539.2L1778.7 539.5L1778.7 539.5L1775.5 547.1L1772.2 554.5L1768.8 561.7L1765.5 568.7ZM1787.8 507.4L1794.9 507.4L1802.1 507.3L1809.4 507.2L1816.8 507L1816.8 507L1817.2 498.7L1817.1 490.1L1816.5 481.3L1815.6 472.2L1815.6 472.2L1808.3 472.4L1801.3 472.5L1794.6 472.5L1788.1 472.4L1788.1 472.4L1788.7 481.5L1789 490.3L1788.7 499L1787.8 507.4ZM1784.8 434.3L1791.2 434.1L1797.7 433.9L1804.5 433.6L1811.8 433.2L1811.8 433.2L1811.5 423L1811.7 412.8L1812.2 402.6L1812.8 392.5L1812.8 392.5L1805.5 393.2L1798.3 393.9L1791.1 394.6L1784 395.1L1784 395.1L1784.1 404.8L1784.2 414.6L1784.4 424.5L1784.8 434.3ZM1780.2 358.1L1788.5 357.4L1796.7 356.6L1804.9 355.7L1812.9 354.8L1812.9 354.8L1811.7 346.2L1810.1 337.8L1808.2 329.7L1806 321.8L1806 321.8L1797.7 322.5L1789.2 323.1L1780.7 323.7L1772.4 324.3L1772.4 324.3L1774.3 332.5L1776.3 340.8L1778.4 349.4L1780.2 358.1ZM1766.8 292.8L1774 292.5L1781.5 292.3L1789.1 291.9L1796.8 291.6L1796.8 291.6L1794.5 284.4L1792.2 277.3L1789.9 270.4L1787.5 263.8L1787.5 263.8L1781 263.9L1774.5 264.1L1768.1 264.2L1761.8 264.3L1761.8 264.3L1763.3 271L1764.6 278.1L1765.7 285.3L1766.8 292.8ZM1751.8 240.8L1757.9 240.7L1764 240.6L1769.9 240.5L1775.8 240.3L1775.8 240.3L1772.2 235.4L1768.4 230.9L1764.2 226.9L1759.7 223.3L1759.7 223.3L1753.9 223.4L1748 223.6L1741.9 223.8L1735.7 223.9L1735.7 223.9L1740.2 227.5L1744.4 231.5L1748.2 235.9L1751.8 240.8ZM1716.6 214L1722.3 213.9L1728 213.8L1733.7 213.6L1739.4 213.5L1739.4 213.5L1733.9 212.1L1728.3 211.2L1722.7 210.8L1717.8 210.7L1717.8 210.7L1712.8 210.8L1707.8 210.9L1702.9 211L1698.1 211L1698.1 211L1702.2 211.2L1706.9 211.7L1711.7 212.7L1716.6 214ZM1717.1 639L1721.4 638.8L1725.7 638.6L1730.1 638.4L1717.1 639L1717.1 639L1717.1 639L1720.3 638.7L1724.8 638.1L1729.4 637L1729.4 637L1743.8 636.3L1739 636.5L1734.1 636.7L1729.4 637L1729.4 637L1724.8 638.1L1720.3 638.7L1717.1 639L1717.1 639ZM1747.2 628.3L1752.7 628L1758.4 627.8L1764.2 627.5L1747.2 628.3L1747.2 628.3L1751.5 625.1L1755.8 621.6L1760 617.6L1764.3 613.3L1764.3 613.3L1784.9 612.7L1777.9 612.8L1771 613.1L1764.3 613.3L1764.3 613.3L1760 617.6L1755.8 621.6L1751.5 625.1L1747.2 628.3ZM1781.2 592.7L1789.2 592.5L1797.2 592.3L1805.2 592.3L1781.2 592.7L1781.2 592.7L1785.3 586.8L1789.4 580.6L1793.3 574.1L1797.1 567.4L1797.1 567.4L1822 566.9L1813.9 567L1805.6 567.2L1797.1 567.4L1797.1 567.4L1793.3 574.1L1789.4 580.6L1785.3 586.8L1781.2 592.7ZM1809.9 538.5L1818 538.3L1825.9 538L1833.6 537.8L1809.9 538.5L1809.9 538.5L1812.3 530.9L1814.3 523.1L1815.8 515.1L1816.8 507L1816.8 507L1840.7 506L1832.6 506.4L1824.6 506.7L1816.8 507L1816.8 507L1815.8 515.1L1814.3 523.1L1812.3 530.9L1809.9 538.5ZM1815.6 472.2L1823.7 471.9L1832.3 471.6L1841.4 471.2L1815.6 472.2L1815.6 472.2L1814.4 462.8L1813.3 453.2L1812.4 443.3L1811.8 433.2L1811.8 433.2L1837.6 431.8L1828.4 432.3L1819.8 432.8L1811.8 433.2L1811.8 433.2L1812.4 443.3L1813.3 453.2L1814.4 462.8L1815.6 472.2ZM1812.8 392.5L1820.6 391.8L1828.5 391L1836.7 390.2L1812.8 392.5L1812.8 392.5L1813.3 382.7L1813.6 373.1L1813.5 363.8L1812.9 354.8L1812.9 354.8L1836.3 352.1L1828.8 353L1821 353.9L1812.9 354.8L1812.9 354.8L1813.5 363.8L1813.6 373.1L1813.3 382.7L1812.8 392.5ZM1806 321.8L1814.5 321.1L1822.6 320.3L1830.2 319.7L1806 321.8L1806 321.8L1803.7 314L1801.4 306.4L1799 299L1796.8 291.6L1796.8 291.6L1820.2 290.6L1812.6 290.9L1804.7 291.2L1796.8 291.6L1796.8 291.6L1799 299L1801.4 306.4L1803.7 314L1806 321.8ZM1787.5 263.8L1794.4 263.6L1801.2 263.5L1808.1 263.4L1787.5 263.8L1787.5 263.8L1784.9 257.4L1782.1 251.4L1779.1 245.6L1775.8 240.3L1775.8 240.3L1793.8 240L1787.8 240.1L1781.9 240.2L1775.8 240.3L1775.8 240.3L1779.1 245.6L1782.1 251.4L1784.9 257.4L1787.5 263.8ZM1759.7 223.3L1765.7 223.1L1771.4 222.9L1777 222.8L1759.7 223.3L1759.7 223.3L1755 220.1L1750 217.5L1744.8 215.2L1739.4 213.5L1739.4 213.5L1756.6 212.9L1751 213.1L1745.3 213.3L1739.4 213.5L1739.4 213.5L1744.8 215.2L1750 217.5L1755 220.1L1759.7 223.3ZM1717.8 210.7L1723.1 210.6L1728.4 210.5L1733.6 210.3L1717.8 210.7L1717.8 210.7L1717.8 210.7L1717.8 210.7L1717.8 210.7L1717.8 210.7L1717.8 210.7L1733.6 210.3L1728.4 210.5L1723.1 210.6L1717.8 210.7L1717.8 210.7L1717.8 210.7L1717.8 210.7L1717.8 210.7L1717.8 210.7Z" fill="#848484"/>
</g>
<path d="M270.5 759.4L978 90M286.6 775.5L1921 829.5" stroke="#c8c8c8" stroke-width="1.1" fill="none"/>
<path d="M0 858.6L905 595" stroke="#d0d0d0" stroke-width="2" fill="none"/>
<path d="M816 783L978 784.5" stroke="#ccc" stroke-width="1" stroke-dasharray="1.5 2.5" fill="none"/>
<path d="M737.7 561.6L767.9 570.4L773 578L825.8 581.7L951.6 580.4L1027 574L1102.5 567.9L1157.9 559" stroke="#e8e000" stroke-width="2" fill="none"/>
<path d="M1022 378L1000 420L982 470L965 520L955 560L958 600L963 620L975 680L982 720L990 760L1000 800L1009 841" stroke="#b8b000" stroke-width="1.6" fill="none"/>
<path d="M1362.4 419L1462 428.4L1543.7 430.4L1625 428.4L1706.7 422.3L1812.7 411.3" stroke="#f0e800" stroke-width="2" fill="none"/>
<path d="M1645.6 216.5L1639.5 271.5L1633.4 353L1629.3 402L1625.2 434.5L1631.4 516L1637.5 597.5L1627.3 636" stroke="#c0b800" stroke-width="1.6" fill="none"/>
<g font-family="Liberation Sans" fill="#222" stroke="#222" stroke-width="3" stroke-linejoin="round" opacity="0.6">
<text x="0" y="0" font-size="40" transform="translate(836 611.6) rotate(0) scale(0.76 1)">texture r</text>
<text x="0" y="0" font-size="46" transform="translate(949 606.8) rotate(-1.1) scale(0.89 1)">eference</text>
<text x="0" y="0" font-size="52" transform="translate(1549.7 462.7) rotate(0) scale(0.595 1)">copied</text>
<text x="0" y="0" font-size="63" transform="translate(1659 466) rotate(0) scale(0.69 1)">UVs</text>
</g>
<g font-family="Liberation Sans" fill="#f6f6f6" stroke="#f6f6f6" stroke-width="0.9">
<text x="0" y="0" font-size="40" transform="translate(836 611.6) rotate(0) scale(0.76 1)">texture r</text>
<text x="0" y="0" font-size="46" transform="translate(949 606.8) rotate(-1.1) scale(0.89 1)">eference</text>
<text x="0" y="0" font-size="52" transform="translate(1549.7 462.7) rotate(0) scale(0.595 1)">copied</text>
<text x="0" y="0" font-size="63" transform="translate(1659 466) rotate(0) scale(0.69 1)">UVs</text>
</g>
<rect x="1063" y="379" width="4" height="4" fill="#ddd"/><rect x="1090" y="417" width="4" height="4" fill="#ddd"/>
<path d="M612 664V688M600 676H626" stroke="#777" stroke-width="1"/>
<g stroke="#c4c4c4" stroke-width="1" fill="none">
<path d="M70.2 748.1L144.1 750.8L146.8 883.1L73.7 878.5Z"/>
<path d="M70.2 748.1L218 715.8L283.9 718.3L144.1 750.8M283.9 718.3L288 835.5L146.8 883.1M73.7 878.5L220.7 832L288 835.5M218 715.8L220.7 832"/>
<ellipse cx="121.8" cy="676.3" rx="43.6" ry="65.4"/>
<ellipse cx="153.8" cy="677.9" rx="42.5" ry="65"/>
<ellipse cx="203.8" cy="661.8" rx="38.3" ry="61"/>
<ellipse cx="235" cy="662.9" rx="37.7" ry="61.6"/>
<ellipse cx="283.1" cy="766.7" rx="65.2" ry="73.8"/>
<ellipse cx="252.5" cy="775.5" rx="28.2" ry="31.7"/>
<rect x="268.3" y="760.2" width="18.3" height="15.3"/>
</g>
<text x="252" y="776" font-family="Liberation Mono" font-size="10.5" fill="#d0d0d0">projCam</text>
<path d="M20 1056V1076" stroke="#00c000" stroke-width="1.2"/><path d="M20 1076H40" stroke="#d00000" stroke-width="1.2"/>
<path d="M20.5 1048l3 4 3-4M23.5 1052v4" stroke="#20e020" stroke-width="1" fill="none"/>
<path d="M41 1069l6 7M47 1069l-6 7" stroke="#ff2020" stroke-width="1" fill="none"/>
<path d="M16 1070h4l-4 6h4" stroke="#2020ff" stroke-width="1" fill="none"/>
<path d="M1920.5 1070V1096" stroke="#555" stroke-width="1"/>
</g></svg><div class="a" style="left:0px;top:1096px;width:1921px;height:1px;background:#3a3a3a;"></div>
<div class="a" style="left:0px;top:1097px;width:1921px;height:23px;background:#000;"></div>
<div class="a" style="left:2px;top:1098px;width:6px;height:21px;background:#464646;border:1px solid #222;border-radius:3px;"></div>
<div class="a" style="left:8px;top:1102px;font-size:13px;color:#e4e4e4;white-space:nowrap;line-height:1;">Redtails_Full 1920x818 bbox: 0 0 1920 818 channels: rgba</div>
<div class="a" style="left:1301px;top:1102px;font-size:13px;color:#dcdcdc;white-space:nowrap;line-height:1;">x= 235 y= 308</div>
<div class="a" style="left:1482px;top:1102px;font-size:13px;color:#ff3030;white-space:nowrap;line-height:1;">0.10000</div>
<div class="a" style="left:1534px;top:1102px;font-size:13px;color:#30e030;white-space:nowrap;line-height:1;">0.10000</div>
<div class="a" style="left:1584px;top:1102px;font-size:13px;color:#4040ff;white-space:nowrap;line-height:1;">0.10000</div>
<div class="a" style="left:1635px;top:1102px;font-size:13px;color:#f0f0f0;white-space:nowrap;line-height:1;">1.00000</div>
<div class="a" style="left:1686px;top:1100px;width:20px;height:17px;background:#5a5a5a;"></div>
<div class="a" style="left:1714px;top:1102px;font-size:13px;color:#dcdcdc;white-space:nowrap;line-height:1;">H:&nbsp;&nbsp; 0 S:0.00 V:0.10&nbsp;&nbsp; L: 0.10000</div>
<svg class="a" style="left:1904px;top:1101px" width="12" height="8"><path d="M1 1h10l-5 5z" fill="#eee"/></svg>
<div class="a" style="left:0px;top:1120px;width:1921px;height:33px;background:#323232;"></div>
<div class="a" style="left:2px;top:1121px;width:6px;height:22px;background:#464646;border:1px solid #222;border-radius:3px;"></div>
<div class="a" style="left:2px;top:1146px;width:6px;height:14px;background:#464646;border:1px solid #222;border-radius:3px;"></div>
<div class="a" style="left:11px;top:1123px;width:55px;height:19px;background:#5e5e5e;border:1px solid #262626;border-radius:3px;"><span class="t" style="left:4px;color:#d8d8d8">1001</span></div>
<div class="a" style="left:68px;top:1122px;width:30px;height:21px;background:#2c2c2c;border:1px solid #242424;border-radius:3px;"><svg width="28" height="20" style="position:absolute;left:0;top:0"><path d="M11 9V6a3 3 0 0 1 6 0v3" stroke="#000" stroke-width="1.6" fill="none"/><rect x="8.5" y="9" width="11" height="8.5" fill="#000"/><rect x="13.5" y="11.5" width="1" height="3" fill="#333"/></svg></div>
<div class="a" style="left:84px;top:1145px;font-size:12px;color:#e09020;white-space:nowrap;line-height:1;">1001</div>
<div class="a" style="left:11px;top:1148px;width:72px;height:12px;background:#5e5e5e;border-radius:3px;"></div>
<div class="a" style="left:703.8px;top:1123px;width:30.3px;height:18px;background:linear-gradient(#4e4e4e,#444);border:1px solid #262626;border-radius:2px;"><svg width="30" height="18" style="position:absolute;left:0;top:0"><path d="M8 3v11M19 3v11l-10-5.5z" stroke="#000" stroke-width="2.5" fill="#000"/></svg></div>
<div class="a" style="left:733.6px;top:1123px;width:31.4px;height:18px;background:linear-gradient(#4e4e4e,#444);border:1px solid #262626;border-radius:2px;"><svg width="30" height="18" style="position:absolute;left:0;top:0"><path d="M22 3v11l-9-5.5z" fill="#000"/><circle cx="9" cy="12" r="2.5" stroke="#000" stroke-width="1.5" fill="none"/><path d="M9 3v7M9 5h3" stroke="#000" stroke-width="1.5"/></svg></div>
<div class="a" style="left:764.5px;top:1123px;width:31.6px;height:18px;background:linear-gradient(#4e4e4e,#444);border:1px solid #262626;border-radius:2px;"><svg width="30" height="18" style="position:absolute;left:0;top:0"><path d="M18 3v11l-8-5.5z" fill="#000"/></svg></div>
<div class="a" style="left:795.6px;top:1123px;width:31.4px;height:18px;background:linear-gradient(#4e4e4e,#444);border:1px solid #262626;border-radius:2px;"><svg width="30" height="18" style="position:absolute;left:0;top:0"><path d="M15 3v11l-8-5.5z" fill="#000"/><path d="M19 3v11" stroke="#000" stroke-width="2.5"/></svg></div>
<div class="a" style="left:826.5px;top:1123px;width:31.3px;height:18px;background:linear-gradient(#4e4e4e,#444);border:1px solid #262626;border-radius:2px;"><svg width="30" height="18" style="position:absolute;left:0;top:0"><rect x="9" y="4" width="11" height="10" fill="#000"/></svg></div>
<div class="a" style="left:857.3px;top:1123px;width:31.6px;height:18px;background:linear-gradient(#4e4e4e,#444);border:1px solid #262626;border-radius:2px;"><svg width="30" height="18" style="position:absolute;left:0;top:0"><path d="M12 3v11l8-5.5z" fill="#000"/><path d="M9 3v11" stroke="#000" stroke-width="2.5"/></svg></div>
<div class="a" style="left:888.4px;top:1123px;width:31.7px;height:18px;background:linear-gradient(#4e4e4e,#444);border:1px solid #262626;border-radius:2px;"><svg width="30" height="18" style="position:absolute;left:0;top:0"><path d="M11 3v11l8-5.5z" fill="#000"/></svg></div>
<div class="a" style="left:919.6px;top:1123px;width:31.6px;height:18px;background:linear-gradient(#4e4e4e,#444);border:1px solid #262626;border-radius:2px;"><svg width="30" height="18" style="position:absolute;left:0;top:0"><path d="M6 3v11l9-5.5z" fill="#000"/><circle cx="19" cy="12" r="2.5" stroke="#000" stroke-width="1.5" fill="none"/><path d="M19 3v7M19 5h3" stroke="#000" stroke-width="1.5"/></svg></div>
<div class="a" style="left:950.7px;top:1123px;width:30.8px;height:18px;background:linear-gradient(#4e4e4e,#444);border:1px solid #262626;border-radius:2px;"><svg width="30" height="18" style="position:absolute;left:0;top:0"><path d="M8 3v11l10-5.5z" fill="#000"/><path d="M20 3v11" stroke="#000" stroke-width="2.5"/></svg></div>
<div class="a" style="left:990.8px;top:1123px;width:29.7px;height:18px;background:linear-gradient(#4e4e4e,#444);border:1px solid #262626;border-radius:2px;"><svg width="30" height="18" style="position:absolute;left:0;top:0"><path d="M14 3v11l-8-5.5zM23 3v11l-8-5.5z" fill="#000"/></svg></div>
<div class="a" style="left:1021px;top:1123px;width:33px;height:18px;background:#5e5e5e;border:1px solid #262626;border-radius:3px;"><span class="t" style="left:4px;color:#d8d8d8">10</span></div>
<div class="a" style="left:1054px;top:1123px;width:30px;height:18px;background:linear-gradient(#4e4e4e,#444);border:1px solid #262626;border-radius:2px;"><svg width="30" height="18" style="position:absolute;left:0;top:0"><path d="M6 3v11l8-5.5zM15 3v11l8-5.5z" fill="#000"/></svg></div>
<div class="a" style="left:1093px;top:1125px;font-size:13px;color:#d8d8d8;white-space:nowrap;line-height:1;">fps</div>
<div class="a" style="left:1113px;top:1123px;width:46px;height:18px;background:#5e5e5e;border:1px solid #262626;border-radius:3px;"><span class="t" style="left:4px;color:#d8d8d8">24</span></div>
<div class="a" style="left:1163px;top:1123px;width:28px;height:18px;background:linear-gradient(#4e4e4e,#444);border:1px solid #262626;border-radius:2px;"><svg width="28" height="18" style="position:absolute;left:0;top:0"><path d="M9 6a6 4 0 1 0 10 0" stroke="#000" stroke-width="2" fill="none"/><path d="M14 4h5v4" stroke="#000" stroke-width="2" fill="none"/></svg></div>
<div class="a" style="left:1797px;top:1123px;width:98px;height:19px;background:#5e5e5e;border:1px solid #262626;border-radius:3px;"></div>
<div class="a" style="left:1898px;top:1122px;width:23px;height:21px;background:#4a4a4a;border:1px solid #262626;border-radius:3px;"><svg width="22" height="20" style="position:absolute;left:0;top:0"><path d="M10 3v9l5-4.5z" fill="#000"/><path d="M4 16h14M5 13v3M9 13v3M13 13v3M17 13v3" stroke="#000" stroke-width="1.5"/></svg></div>
<div class="a" style="left:1893px;top:1144px;font-size:11px;color:#d04020;white-space:nowrap;line-height:1;">1072</div>
</div></body></html>
